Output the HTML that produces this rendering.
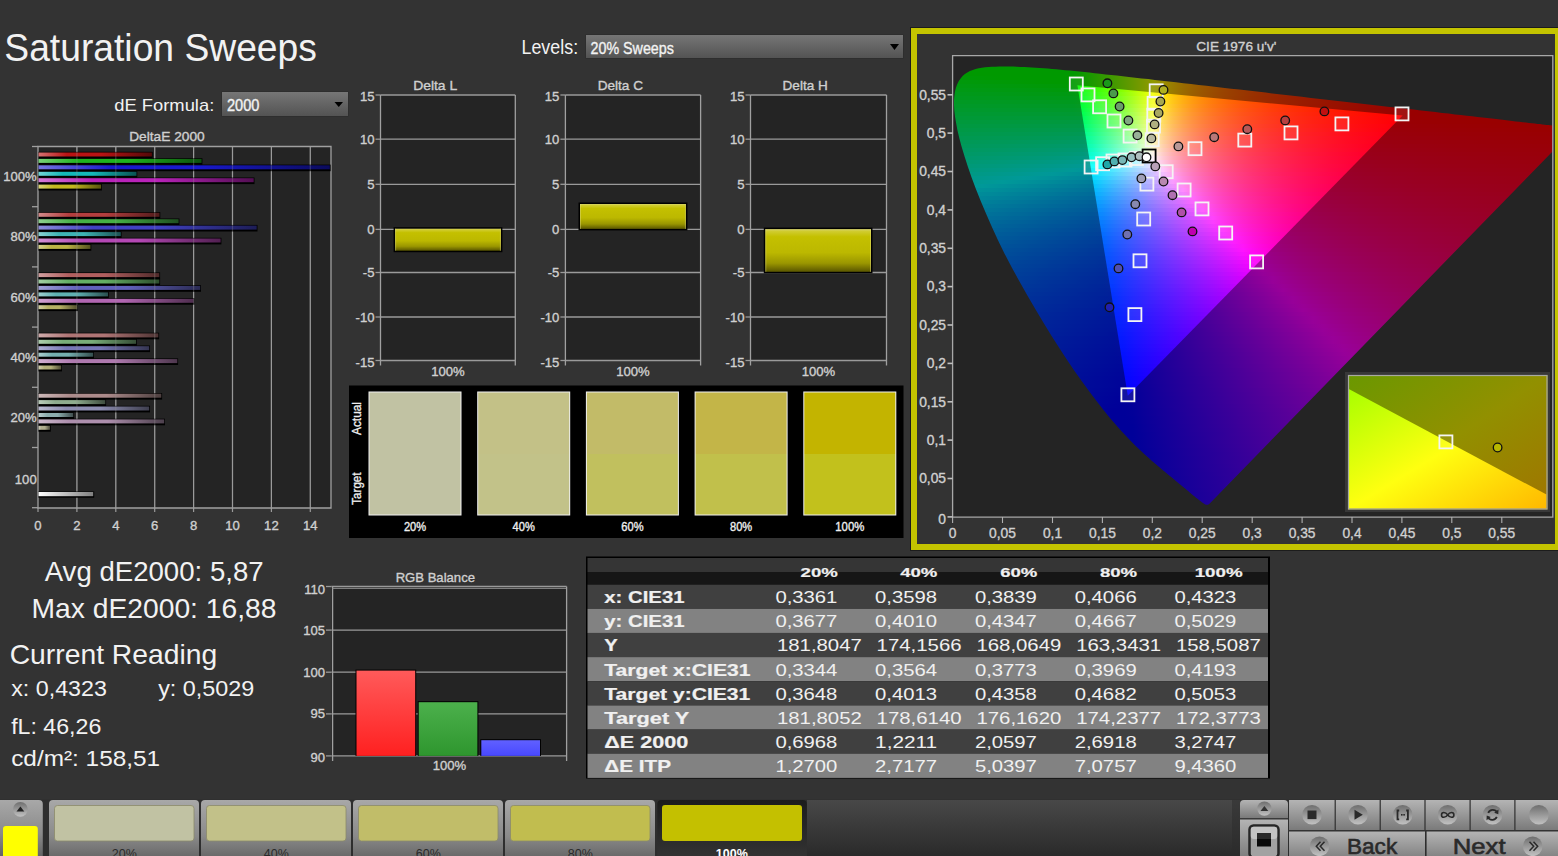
<!DOCTYPE html>
<html><head><meta charset="utf-8"><style>
html,body{margin:0;padding:0;background:#333333;width:1558px;height:856px;overflow:hidden}
svg{position:absolute;left:0;top:0}
text{font-family:"Liberation Sans", sans-serif}
.cie{position:absolute;left:953px;top:56px;width:600px;height:461px;overflow:hidden}
.cl{position:absolute;left:0;top:0;width:600px;height:461px}
.cl i{position:absolute;left:0;width:600px;display:block}
</style></head><body>
<svg width="1558" height="856" viewBox="0 0 1558 856"><defs><linearGradient id="dd" x1="0" y1="0" x2="0" y2="1"><stop offset="0" stop-color="#767676"/><stop offset="1" stop-color="#535353"/></linearGradient><linearGradient id="ybar" x1="0" y1="0" x2="0" y2="1"><stop offset="0" stop-color="#d8d470"/><stop offset="0.05" stop-color="#d0cc30"/><stop offset="0.18" stop-color="#c4c000"/><stop offset="0.55" stop-color="#bcb800"/><stop offset="0.8" stop-color="#9a9600"/><stop offset="1" stop-color="#5a5600"/></linearGradient><linearGradient id="bg0"><stop offset="0" stop-color="rgb(213,114,114)"/><stop offset="0.25" stop-color="rgb(185,20,20)"/><stop offset="0.55" stop-color="rgb(185,20,20)"/><stop offset="1" stop-color="rgb(83,9,9)"/></linearGradient><linearGradient id="bg1"><stop offset="0" stop-color="rgb(120,210,120)"/><stop offset="0.25" stop-color="rgb(30,180,30)"/><stop offset="0.55" stop-color="rgb(30,180,30)"/><stop offset="1" stop-color="rgb(13,81,13)"/></linearGradient><linearGradient id="bg2"><stop offset="0" stop-color="rgb(117,117,225)"/><stop offset="0.25" stop-color="rgb(25,25,205)"/><stop offset="0.55" stop-color="rgb(25,25,205)"/><stop offset="1" stop-color="rgb(11,11,92)"/></linearGradient><linearGradient id="bg3"><stop offset="0" stop-color="rgb(114,213,213)"/><stop offset="0.25" stop-color="rgb(20,185,185)"/><stop offset="0.55" stop-color="rgb(20,185,185)"/><stop offset="1" stop-color="rgb(9,83,83)"/></linearGradient><linearGradient id="bg4"><stop offset="0" stop-color="rgb(213,123,213)"/><stop offset="0.25" stop-color="rgb(185,35,185)"/><stop offset="0.55" stop-color="rgb(185,35,185)"/><stop offset="1" stop-color="rgb(83,15,83)"/></linearGradient><linearGradient id="bg5"><stop offset="0" stop-color="rgb(219,213,120)"/><stop offset="0.25" stop-color="rgb(195,185,30)"/><stop offset="0.55" stop-color="rgb(195,185,30)"/><stop offset="1" stop-color="rgb(87,83,13)"/></linearGradient><linearGradient id="bg6"><stop offset="0" stop-color="rgb(210,139,139)"/><stop offset="0.25" stop-color="rgb(180,62,62)"/><stop offset="0.55" stop-color="rgb(180,62,62)"/><stop offset="1" stop-color="rgb(81,27,27)"/></linearGradient><linearGradient id="bg7"><stop offset="0" stop-color="rgb(143,208,143)"/><stop offset="0.25" stop-color="rgb(69,177,69)"/><stop offset="0.55" stop-color="rgb(69,177,69)"/><stop offset="1" stop-color="rgb(31,79,31)"/></linearGradient><linearGradient id="bg8"><stop offset="0" stop-color="rgb(141,141,219)"/><stop offset="0.25" stop-color="rgb(65,65,195)"/><stop offset="0.55" stop-color="rgb(65,65,195)"/><stop offset="1" stop-color="rgb(29,29,87)"/></linearGradient><linearGradient id="bg9"><stop offset="0" stop-color="rgb(139,210,210)"/><stop offset="0.25" stop-color="rgb(62,180,180)"/><stop offset="0.55" stop-color="rgb(62,180,180)"/><stop offset="1" stop-color="rgb(27,81,81)"/></linearGradient><linearGradient id="bg10"><stop offset="0" stop-color="rgb(210,145,210)"/><stop offset="0.25" stop-color="rgb(180,72,180)"/><stop offset="0.55" stop-color="rgb(180,72,180)"/><stop offset="1" stop-color="rgb(81,32,81)"/></linearGradient><linearGradient id="bg11"><stop offset="0" stop-color="rgb(214,210,143)"/><stop offset="0.25" stop-color="rgb(188,180,69)"/><stop offset="0.55" stop-color="rgb(188,180,69)"/><stop offset="1" stop-color="rgb(84,81,31)"/></linearGradient><linearGradient id="bg12"><stop offset="0" stop-color="rgb(208,159,159)"/><stop offset="0.25" stop-color="rgb(177,95,95)"/><stop offset="0.55" stop-color="rgb(177,95,95)"/><stop offset="1" stop-color="rgb(79,42,42)"/></linearGradient><linearGradient id="bg13"><stop offset="0" stop-color="rgb(162,207,162)"/><stop offset="0.25" stop-color="rgb(100,175,100)"/><stop offset="0.55" stop-color="rgb(100,175,100)"/><stop offset="1" stop-color="rgb(45,78,45)"/></linearGradient><linearGradient id="bg14"><stop offset="0" stop-color="rgb(160,160,214)"/><stop offset="0.25" stop-color="rgb(97,97,187)"/><stop offset="0.55" stop-color="rgb(97,97,187)"/><stop offset="1" stop-color="rgb(43,43,84)"/></linearGradient><linearGradient id="bg15"><stop offset="0" stop-color="rgb(159,208,208)"/><stop offset="0.25" stop-color="rgb(95,177,177)"/><stop offset="0.55" stop-color="rgb(95,177,177)"/><stop offset="1" stop-color="rgb(42,79,79)"/></linearGradient><linearGradient id="bg16"><stop offset="0" stop-color="rgb(208,163,208)"/><stop offset="0.25" stop-color="rgb(177,102,177)"/><stop offset="0.55" stop-color="rgb(177,102,177)"/><stop offset="1" stop-color="rgb(79,46,79)"/></linearGradient><linearGradient id="bg17"><stop offset="0" stop-color="rgb(211,208,162)"/><stop offset="0.25" stop-color="rgb(182,177,100)"/><stop offset="0.55" stop-color="rgb(182,177,100)"/><stop offset="1" stop-color="rgb(82,79,45)"/></linearGradient><linearGradient id="bg18"><stop offset="0" stop-color="rgb(207,172,172)"/><stop offset="0.25" stop-color="rgb(175,117,117)"/><stop offset="0.55" stop-color="rgb(175,117,117)"/><stop offset="1" stop-color="rgb(78,52,52)"/></linearGradient><linearGradient id="bg19"><stop offset="0" stop-color="rgb(174,206,174)"/><stop offset="0.25" stop-color="rgb(121,173,121)"/><stop offset="0.55" stop-color="rgb(121,173,121)"/><stop offset="1" stop-color="rgb(54,78,54)"/></linearGradient><linearGradient id="bg20"><stop offset="0" stop-color="rgb(173,173,211)"/><stop offset="0.25" stop-color="rgb(119,119,182)"/><stop offset="0.55" stop-color="rgb(119,119,182)"/><stop offset="1" stop-color="rgb(53,53,82)"/></linearGradient><linearGradient id="bg21"><stop offset="0" stop-color="rgb(172,207,207)"/><stop offset="0.25" stop-color="rgb(117,175,175)"/><stop offset="0.55" stop-color="rgb(117,175,175)"/><stop offset="1" stop-color="rgb(52,78,78)"/></linearGradient><linearGradient id="bg22"><stop offset="0" stop-color="rgb(207,175,207)"/><stop offset="0.25" stop-color="rgb(175,122,175)"/><stop offset="0.55" stop-color="rgb(175,122,175)"/><stop offset="1" stop-color="rgb(78,55,78)"/></linearGradient><linearGradient id="bg23"><stop offset="0" stop-color="rgb(209,207,174)"/><stop offset="0.25" stop-color="rgb(178,175,121)"/><stop offset="0.55" stop-color="rgb(178,175,121)"/><stop offset="1" stop-color="rgb(80,78,54)"/></linearGradient><linearGradient id="bg24"><stop offset="0" stop-color="rgb(205,186,186)"/><stop offset="0.25" stop-color="rgb(173,140,140)"/><stop offset="0.55" stop-color="rgb(173,140,140)"/><stop offset="1" stop-color="rgb(77,63,63)"/></linearGradient><linearGradient id="bg25"><stop offset="0" stop-color="rgb(187,205,187)"/><stop offset="0.25" stop-color="rgb(142,172,142)"/><stop offset="0.55" stop-color="rgb(142,172,142)"/><stop offset="1" stop-color="rgb(63,77,63)"/></linearGradient><linearGradient id="bg26"><stop offset="0" stop-color="rgb(186,186,208)"/><stop offset="0.25" stop-color="rgb(141,141,177)"/><stop offset="0.55" stop-color="rgb(141,141,177)"/><stop offset="1" stop-color="rgb(63,63,79)"/></linearGradient><linearGradient id="bg27"><stop offset="0" stop-color="rgb(186,205,205)"/><stop offset="0.25" stop-color="rgb(140,173,173)"/><stop offset="0.55" stop-color="rgb(140,173,173)"/><stop offset="1" stop-color="rgb(63,77,77)"/></linearGradient><linearGradient id="bg28"><stop offset="0" stop-color="rgb(205,187,205)"/><stop offset="0.25" stop-color="rgb(173,143,173)"/><stop offset="0.55" stop-color="rgb(173,143,173)"/><stop offset="1" stop-color="rgb(77,64,77)"/></linearGradient><linearGradient id="bg29"><stop offset="0" stop-color="rgb(207,205,187)"/><stop offset="0.25" stop-color="rgb(175,173,142)"/><stop offset="0.55" stop-color="rgb(175,173,142)"/><stop offset="1" stop-color="rgb(78,77,63)"/></linearGradient><linearGradient id="wbar"><stop offset="0" stop-color="#ffffff"/><stop offset="1" stop-color="#808080"/></linearGradient><linearGradient id="rg" x1="0" y1="0" x2="0" y2="1"><stop offset="0" stop-color="#ff5a5a"/><stop offset="1" stop-color="#ff2020"/></linearGradient><linearGradient id="gg" x1="0" y1="0" x2="0" y2="1"><stop offset="0" stop-color="#4cb04c"/><stop offset="1" stop-color="#2e962e"/></linearGradient><linearGradient id="bbg" x1="0" y1="0" x2="0" y2="1"><stop offset="0" stop-color="#6060ff"/><stop offset="1" stop-color="#4848ff"/></linearGradient><linearGradient id="insIn" x1="0" y1="0" x2="1" y2="1"><stop offset="0" stop-color="#a8ff00"/><stop offset="0.5" stop-color="#ffff10"/><stop offset="1" stop-color="#ffb800"/></linearGradient><linearGradient id="insOut" x1="0" y1="0" x2="1" y2="1"><stop offset="0" stop-color="#6a9800"/><stop offset="0.5" stop-color="#929000"/><stop offset="1" stop-color="#a07400"/></linearGradient></defs>
<text x="4.3" y="61.0" font-size="39.7" fill="#f2f2f2" text-anchor="start" textLength="312.6" lengthAdjust="spacingAndGlyphs">Saturation Sweeps</text>
<text x="521.5" y="53.9" font-size="19.6" fill="#f2f2f2" text-anchor="start" textLength="56.6" lengthAdjust="spacingAndGlyphs">Levels:</text>
<rect x="585.5" y="34.5" width="318.0" height="24.0" fill="#2a2a2a"/>
<rect x="586.0" y="35.0" width="317.0" height="23.0" fill="url(#dd)"/>
<path d="M890 44 L899 44 L894.5 50 Z" fill="#000"/>
<text x="590.5" y="53.9" font-size="16.0" fill="#f2f2f2" text-anchor="start" textLength="83.4" lengthAdjust="spacingAndGlyphs" stroke="#f2f2f2" stroke-width="0.35">20% Sweeps</text>
<text x="114.2" y="110.9" font-size="17.0" fill="#f2f2f2" text-anchor="start" textLength="100.1" lengthAdjust="spacingAndGlyphs">dE Formula:</text>
<rect x="221.5" y="91.5" width="127.0" height="25.0" fill="#2a2a2a"/>
<rect x="222.0" y="92.0" width="126.0" height="24.0" fill="url(#dd)"/>
<path d="M334.5 102 L343 102 L338.75 107 Z" fill="#000"/>
<text x="226.9" y="110.9" font-size="15.8" fill="#f2f2f2" text-anchor="start" textLength="32.5" lengthAdjust="spacingAndGlyphs" stroke="#f2f2f2" stroke-width="0.35">2000</text>
<text x="129.2" y="140.9" font-size="13.4" fill="#d0d0d0" text-anchor="start" textLength="75.5" lengthAdjust="spacingAndGlyphs" stroke="#d0d0d0" stroke-width="0.35">DeltaE 2000</text>
<rect x="38.0" y="146.5" width="293.0" height="361.5" fill="#242424"/>
<line x1="38.0" y1="508.0" x2="38.0" y2="512.0" stroke="#9a9a9a" stroke-width="1.2"/>
<text x="38.0" y="530.0" font-size="13.1" fill="#d0d0d0" text-anchor="middle" stroke="#d0d0d0" stroke-width="0.35">0</text>
<line x1="76.9" y1="146.5" x2="76.9" y2="508.0" stroke="#9a9a9a" stroke-width="1.2"/>
<line x1="76.9" y1="508.0" x2="76.9" y2="512.0" stroke="#9a9a9a" stroke-width="1.2"/>
<text x="76.9" y="530.0" font-size="13.1" fill="#d0d0d0" text-anchor="middle" stroke="#d0d0d0" stroke-width="0.35">2</text>
<line x1="115.8" y1="146.5" x2="115.8" y2="508.0" stroke="#9a9a9a" stroke-width="1.2"/>
<line x1="115.8" y1="508.0" x2="115.8" y2="512.0" stroke="#9a9a9a" stroke-width="1.2"/>
<text x="115.8" y="530.0" font-size="13.1" fill="#d0d0d0" text-anchor="middle" stroke="#d0d0d0" stroke-width="0.35">4</text>
<line x1="154.7" y1="146.5" x2="154.7" y2="508.0" stroke="#9a9a9a" stroke-width="1.2"/>
<line x1="154.7" y1="508.0" x2="154.7" y2="512.0" stroke="#9a9a9a" stroke-width="1.2"/>
<text x="154.7" y="530.0" font-size="13.1" fill="#d0d0d0" text-anchor="middle" stroke="#d0d0d0" stroke-width="0.35">6</text>
<line x1="193.6" y1="146.5" x2="193.6" y2="508.0" stroke="#9a9a9a" stroke-width="1.2"/>
<line x1="193.6" y1="508.0" x2="193.6" y2="512.0" stroke="#9a9a9a" stroke-width="1.2"/>
<text x="193.6" y="530.0" font-size="13.1" fill="#d0d0d0" text-anchor="middle" stroke="#d0d0d0" stroke-width="0.35">8</text>
<line x1="232.5" y1="146.5" x2="232.5" y2="508.0" stroke="#9a9a9a" stroke-width="1.2"/>
<line x1="232.5" y1="508.0" x2="232.5" y2="512.0" stroke="#9a9a9a" stroke-width="1.2"/>
<text x="232.5" y="530.0" font-size="13.1" fill="#d0d0d0" text-anchor="middle" stroke="#d0d0d0" stroke-width="0.35">10</text>
<line x1="271.4" y1="146.5" x2="271.4" y2="508.0" stroke="#9a9a9a" stroke-width="1.2"/>
<line x1="271.4" y1="508.0" x2="271.4" y2="512.0" stroke="#9a9a9a" stroke-width="1.2"/>
<text x="271.4" y="530.0" font-size="13.1" fill="#d0d0d0" text-anchor="middle" stroke="#d0d0d0" stroke-width="0.35">12</text>
<line x1="310.3" y1="146.5" x2="310.3" y2="508.0" stroke="#9a9a9a" stroke-width="1.2"/>
<line x1="310.3" y1="508.0" x2="310.3" y2="512.0" stroke="#9a9a9a" stroke-width="1.2"/>
<text x="310.3" y="530.0" font-size="13.1" fill="#d0d0d0" text-anchor="middle" stroke="#d0d0d0" stroke-width="0.35">14</text>
<path d="M38 508 L38 146.5 L331 146.5 L331 508 Z" fill="none" stroke="#a0a0a0" stroke-width="1.3"/>
<line x1="32.0" y1="146.5" x2="38.0" y2="146.5" stroke="#a0a0a0" stroke-width="1.3"/>
<line x1="32.0" y1="206.7" x2="38.0" y2="206.7" stroke="#a0a0a0" stroke-width="1.3"/>
<line x1="32.0" y1="266.9" x2="38.0" y2="266.9" stroke="#a0a0a0" stroke-width="1.3"/>
<line x1="32.0" y1="327.1" x2="38.0" y2="327.1" stroke="#a0a0a0" stroke-width="1.3"/>
<line x1="32.0" y1="387.3" x2="38.0" y2="387.3" stroke="#a0a0a0" stroke-width="1.3"/>
<line x1="32.0" y1="447.5" x2="38.0" y2="447.5" stroke="#a0a0a0" stroke-width="1.3"/>
<line x1="32.0" y1="507.7" x2="38.0" y2="507.7" stroke="#a0a0a0" stroke-width="1.3"/>
<text x="36.7" y="181.0" font-size="13.1" fill="#d0d0d0" text-anchor="end" stroke="#d0d0d0" stroke-width="0.35">100%</text>
<rect x="38.5" y="151.8" width="114.2" height="6.6" fill="#000"/>
<rect x="38.5" y="152.5" width="113.4" height="4.0" fill="url(#bg0)"/>
<rect x="38.5" y="158.2" width="163.9" height="6.6" fill="#000"/>
<rect x="38.5" y="158.9" width="163.1" height="4.0" fill="url(#bg1)"/>
<rect x="38.5" y="164.6" width="292.1" height="6.6" fill="#000"/>
<rect x="38.5" y="165.3" width="291.3" height="4.0" fill="url(#bg2)"/>
<rect x="38.5" y="171.1" width="98.8" height="6.6" fill="#000"/>
<rect x="38.5" y="171.8" width="98.0" height="4.0" fill="url(#bg3)"/>
<rect x="38.5" y="177.5" width="216.0" height="6.6" fill="#000"/>
<rect x="38.5" y="178.2" width="215.2" height="4.0" fill="url(#bg4)"/>
<rect x="38.5" y="183.9" width="63.4" height="6.6" fill="#000"/>
<rect x="38.5" y="184.6" width="62.6" height="4.0" fill="url(#bg5)"/>
<text x="36.7" y="241.3" font-size="13.1" fill="#d0d0d0" text-anchor="end" stroke="#d0d0d0" stroke-width="0.35">80%</text>
<rect x="38.5" y="212.1" width="121.8" height="6.6" fill="#000"/>
<rect x="38.5" y="212.8" width="121.0" height="4.0" fill="url(#bg6)"/>
<rect x="38.5" y="218.5" width="140.9" height="6.6" fill="#000"/>
<rect x="38.5" y="219.2" width="140.1" height="4.0" fill="url(#bg7)"/>
<rect x="38.5" y="224.9" width="219.0" height="6.6" fill="#000"/>
<rect x="38.5" y="225.6" width="218.2" height="4.0" fill="url(#bg8)"/>
<rect x="38.5" y="231.4" width="83.1" height="6.6" fill="#000"/>
<rect x="38.5" y="232.1" width="82.3" height="4.0" fill="url(#bg9)"/>
<rect x="38.5" y="237.8" width="182.9" height="6.6" fill="#000"/>
<rect x="38.5" y="238.5" width="182.1" height="4.0" fill="url(#bg10)"/>
<rect x="38.5" y="244.2" width="52.8" height="6.6" fill="#000"/>
<rect x="38.5" y="244.9" width="52.0" height="4.0" fill="url(#bg11)"/>
<text x="36.7" y="301.6" font-size="13.1" fill="#d0d0d0" text-anchor="end" stroke="#d0d0d0" stroke-width="0.35">60%</text>
<rect x="38.5" y="272.4" width="121.6" height="6.6" fill="#000"/>
<rect x="38.5" y="273.1" width="120.8" height="4.0" fill="url(#bg12)"/>
<rect x="38.5" y="278.8" width="121.6" height="6.6" fill="#000"/>
<rect x="38.5" y="279.5" width="120.8" height="4.0" fill="url(#bg13)"/>
<rect x="38.5" y="285.2" width="162.5" height="6.6" fill="#000"/>
<rect x="38.5" y="285.9" width="161.7" height="4.0" fill="url(#bg14)"/>
<rect x="38.5" y="291.7" width="70.3" height="6.6" fill="#000"/>
<rect x="38.5" y="292.4" width="69.5" height="4.0" fill="url(#bg15)"/>
<rect x="38.5" y="298.1" width="156.0" height="6.6" fill="#000"/>
<rect x="38.5" y="298.8" width="155.2" height="4.0" fill="url(#bg16)"/>
<rect x="38.5" y="304.5" width="39.5" height="6.6" fill="#000"/>
<rect x="38.5" y="305.2" width="38.7" height="4.0" fill="url(#bg17)"/>
<text x="36.7" y="361.9" font-size="13.1" fill="#d0d0d0" text-anchor="end" stroke="#d0d0d0" stroke-width="0.35">40%</text>
<rect x="38.5" y="332.7" width="120.6" height="6.6" fill="#000"/>
<rect x="38.5" y="333.4" width="119.8" height="4.0" fill="url(#bg18)"/>
<rect x="38.5" y="339.1" width="98.4" height="6.6" fill="#000"/>
<rect x="38.5" y="339.8" width="97.6" height="4.0" fill="url(#bg19)"/>
<rect x="38.5" y="345.5" width="111.5" height="6.6" fill="#000"/>
<rect x="38.5" y="346.2" width="110.7" height="4.0" fill="url(#bg20)"/>
<rect x="38.5" y="352.0" width="55.5" height="6.6" fill="#000"/>
<rect x="38.5" y="352.7" width="54.7" height="4.0" fill="url(#bg21)"/>
<rect x="38.5" y="358.4" width="139.6" height="6.6" fill="#000"/>
<rect x="38.5" y="359.1" width="138.8" height="4.0" fill="url(#bg22)"/>
<rect x="38.5" y="364.8" width="23.5" height="6.6" fill="#000"/>
<rect x="38.5" y="365.5" width="22.7" height="4.0" fill="url(#bg23)"/>
<text x="36.7" y="422.2" font-size="13.1" fill="#d0d0d0" text-anchor="end" stroke="#d0d0d0" stroke-width="0.35">20%</text>
<rect x="38.5" y="393.0" width="123.6" height="6.6" fill="#000"/>
<rect x="38.5" y="393.7" width="122.8" height="4.0" fill="url(#bg24)"/>
<rect x="38.5" y="399.4" width="67.6" height="6.6" fill="#000"/>
<rect x="38.5" y="400.1" width="66.8" height="4.0" fill="url(#bg25)"/>
<rect x="38.5" y="405.8" width="111.5" height="6.6" fill="#000"/>
<rect x="38.5" y="406.5" width="110.7" height="4.0" fill="url(#bg26)"/>
<rect x="38.5" y="412.3" width="35.6" height="6.6" fill="#000"/>
<rect x="38.5" y="413.0" width="34.8" height="4.0" fill="url(#bg27)"/>
<rect x="38.5" y="418.7" width="126.5" height="6.6" fill="#000"/>
<rect x="38.5" y="419.4" width="125.7" height="4.0" fill="url(#bg28)"/>
<rect x="38.5" y="425.1" width="12.3" height="6.6" fill="#000"/>
<rect x="38.5" y="425.8" width="11.5" height="4.0" fill="url(#bg29)"/>
<line x1="76.9" y1="146.5" x2="76.9" y2="508" stroke="#9a9a9a" stroke-width="1.2" opacity="0.3"/>
<line x1="115.8" y1="146.5" x2="115.8" y2="508" stroke="#9a9a9a" stroke-width="1.2" opacity="0.3"/>
<line x1="154.7" y1="146.5" x2="154.7" y2="508" stroke="#9a9a9a" stroke-width="1.2" opacity="0.3"/>
<line x1="193.6" y1="146.5" x2="193.6" y2="508" stroke="#9a9a9a" stroke-width="1.2" opacity="0.3"/>
<line x1="232.5" y1="146.5" x2="232.5" y2="508" stroke="#9a9a9a" stroke-width="1.2" opacity="0.3"/>
<line x1="271.4" y1="146.5" x2="271.4" y2="508" stroke="#9a9a9a" stroke-width="1.2" opacity="0.3"/>
<line x1="310.3" y1="146.5" x2="310.3" y2="508" stroke="#9a9a9a" stroke-width="1.2" opacity="0.3"/>
<text x="36.7" y="484.0" font-size="13.1" fill="#d0d0d0" text-anchor="end" stroke="#d0d0d0" stroke-width="0.35">100</text>
<rect x="38.5" y="491.5" width="55.7" height="6.2" fill="#000"/>
<rect x="38.5" y="492.0" width="54.7" height="4.2" fill="url(#wbar)"/>
<rect x="380.5" y="95.0" width="134.8" height="265.5" fill="#242424"/>
<line x1="380.5" y1="95.0" x2="515.3" y2="95.0" stroke="#9a9a9a" stroke-width="1.3"/>
<line x1="375.5" y1="95.0" x2="380.5" y2="95.0" stroke="#9a9a9a" stroke-width="1.3"/>
<text x="374.5" y="100.8" font-size="13.1" fill="#d0d0d0" text-anchor="end" stroke="#d0d0d0" stroke-width="0.35">15</text>
<line x1="380.5" y1="139.2" x2="515.3" y2="139.2" stroke="#9a9a9a" stroke-width="1.3"/>
<line x1="375.5" y1="139.2" x2="380.5" y2="139.2" stroke="#9a9a9a" stroke-width="1.3"/>
<text x="374.5" y="143.8" font-size="13.1" fill="#d0d0d0" text-anchor="end" stroke="#d0d0d0" stroke-width="0.35">10</text>
<line x1="380.5" y1="184.3" x2="515.3" y2="184.3" stroke="#9a9a9a" stroke-width="1.3"/>
<line x1="375.5" y1="184.3" x2="380.5" y2="184.3" stroke="#9a9a9a" stroke-width="1.3"/>
<text x="374.5" y="188.9" font-size="13.1" fill="#d0d0d0" text-anchor="end" stroke="#d0d0d0" stroke-width="0.35">5</text>
<line x1="380.5" y1="229.4" x2="515.3" y2="229.4" stroke="#9a9a9a" stroke-width="1.3"/>
<line x1="375.5" y1="229.4" x2="380.5" y2="229.4" stroke="#9a9a9a" stroke-width="1.3"/>
<text x="374.5" y="234.0" font-size="13.1" fill="#d0d0d0" text-anchor="end" stroke="#d0d0d0" stroke-width="0.35">0</text>
<line x1="380.5" y1="272.5" x2="515.3" y2="272.5" stroke="#9a9a9a" stroke-width="1.3"/>
<line x1="375.5" y1="272.5" x2="380.5" y2="272.5" stroke="#9a9a9a" stroke-width="1.3"/>
<text x="374.5" y="277.1" font-size="13.1" fill="#d0d0d0" text-anchor="end" stroke="#d0d0d0" stroke-width="0.35">-5</text>
<line x1="380.5" y1="317.0" x2="515.3" y2="317.0" stroke="#9a9a9a" stroke-width="1.3"/>
<line x1="375.5" y1="317.0" x2="380.5" y2="317.0" stroke="#9a9a9a" stroke-width="1.3"/>
<text x="374.5" y="321.6" font-size="13.1" fill="#d0d0d0" text-anchor="end" stroke="#d0d0d0" stroke-width="0.35">-10</text>
<line x1="380.5" y1="360.5" x2="515.3" y2="360.5" stroke="#9a9a9a" stroke-width="1.3"/>
<line x1="375.5" y1="360.5" x2="380.5" y2="360.5" stroke="#9a9a9a" stroke-width="1.3"/>
<text x="374.5" y="367.1" font-size="13.1" fill="#d0d0d0" text-anchor="end" stroke="#d0d0d0" stroke-width="0.35">-15</text>
<line x1="380.5" y1="95.0" x2="380.5" y2="365.5" stroke="#a0a0a0" stroke-width="1.3"/>
<line x1="515.3" y1="95.0" x2="515.3" y2="365.5" stroke="#a0a0a0" stroke-width="1.3"/>
<rect x="393.6" y="227.2" width="108.8" height="25.0" fill="#000"/>
<rect x="395.1" y="228.7" width="105.8" height="22.0" fill="url(#ybar)"/>
<rect x="395.1" y="228.7" width="1.0" height="22.0" fill="#e0dc80" opacity="0.45"/>
<rect x="499.9" y="228.7" width="1.0" height="22.0" fill="#e0dc80" opacity="0.45"/>
<text x="413.2" y="90.1" font-size="13.1" fill="#d0d0d0" text-anchor="start" textLength="44.0" lengthAdjust="spacingAndGlyphs" stroke="#d0d0d0" stroke-width="0.35">Delta L</text>
<text x="447.9" y="375.5" font-size="13.1" fill="#d0d0d0" text-anchor="middle" stroke="#d0d0d0" stroke-width="0.35">100%</text>
<rect x="565.4" y="95.0" width="135.2" height="265.5" fill="#242424"/>
<line x1="565.4" y1="95.0" x2="700.6" y2="95.0" stroke="#9a9a9a" stroke-width="1.3"/>
<line x1="560.4" y1="95.0" x2="565.4" y2="95.0" stroke="#9a9a9a" stroke-width="1.3"/>
<text x="559.4" y="100.8" font-size="13.1" fill="#d0d0d0" text-anchor="end" stroke="#d0d0d0" stroke-width="0.35">15</text>
<line x1="565.4" y1="139.2" x2="700.6" y2="139.2" stroke="#9a9a9a" stroke-width="1.3"/>
<line x1="560.4" y1="139.2" x2="565.4" y2="139.2" stroke="#9a9a9a" stroke-width="1.3"/>
<text x="559.4" y="143.8" font-size="13.1" fill="#d0d0d0" text-anchor="end" stroke="#d0d0d0" stroke-width="0.35">10</text>
<line x1="565.4" y1="184.3" x2="700.6" y2="184.3" stroke="#9a9a9a" stroke-width="1.3"/>
<line x1="560.4" y1="184.3" x2="565.4" y2="184.3" stroke="#9a9a9a" stroke-width="1.3"/>
<text x="559.4" y="188.9" font-size="13.1" fill="#d0d0d0" text-anchor="end" stroke="#d0d0d0" stroke-width="0.35">5</text>
<line x1="565.4" y1="229.4" x2="700.6" y2="229.4" stroke="#9a9a9a" stroke-width="1.3"/>
<line x1="560.4" y1="229.4" x2="565.4" y2="229.4" stroke="#9a9a9a" stroke-width="1.3"/>
<text x="559.4" y="234.0" font-size="13.1" fill="#d0d0d0" text-anchor="end" stroke="#d0d0d0" stroke-width="0.35">0</text>
<line x1="565.4" y1="272.5" x2="700.6" y2="272.5" stroke="#9a9a9a" stroke-width="1.3"/>
<line x1="560.4" y1="272.5" x2="565.4" y2="272.5" stroke="#9a9a9a" stroke-width="1.3"/>
<text x="559.4" y="277.1" font-size="13.1" fill="#d0d0d0" text-anchor="end" stroke="#d0d0d0" stroke-width="0.35">-5</text>
<line x1="565.4" y1="317.0" x2="700.6" y2="317.0" stroke="#9a9a9a" stroke-width="1.3"/>
<line x1="560.4" y1="317.0" x2="565.4" y2="317.0" stroke="#9a9a9a" stroke-width="1.3"/>
<text x="559.4" y="321.6" font-size="13.1" fill="#d0d0d0" text-anchor="end" stroke="#d0d0d0" stroke-width="0.35">-10</text>
<line x1="565.4" y1="360.5" x2="700.6" y2="360.5" stroke="#9a9a9a" stroke-width="1.3"/>
<line x1="560.4" y1="360.5" x2="565.4" y2="360.5" stroke="#9a9a9a" stroke-width="1.3"/>
<text x="559.4" y="367.1" font-size="13.1" fill="#d0d0d0" text-anchor="end" stroke="#d0d0d0" stroke-width="0.35">-15</text>
<line x1="565.4" y1="95.0" x2="565.4" y2="365.5" stroke="#a0a0a0" stroke-width="1.3"/>
<line x1="700.6" y1="95.0" x2="700.6" y2="365.5" stroke="#a0a0a0" stroke-width="1.3"/>
<rect x="578.5" y="202.5" width="108.9" height="27.9" fill="#000"/>
<rect x="580.0" y="204.0" width="105.9" height="24.9" fill="url(#ybar)"/>
<rect x="580.0" y="204.0" width="1.0" height="24.9" fill="#e0dc80" opacity="0.45"/>
<rect x="684.9" y="204.0" width="1.0" height="24.9" fill="#e0dc80" opacity="0.45"/>
<text x="597.7" y="90.1" font-size="13.1" fill="#d0d0d0" text-anchor="start" textLength="45.3" lengthAdjust="spacingAndGlyphs" stroke="#d0d0d0" stroke-width="0.35">Delta C</text>
<text x="633.0" y="375.5" font-size="13.1" fill="#d0d0d0" text-anchor="middle" stroke="#d0d0d0" stroke-width="0.35">100%</text>
<rect x="750.5" y="95.0" width="136.0" height="265.5" fill="#242424"/>
<line x1="750.5" y1="95.0" x2="886.5" y2="95.0" stroke="#9a9a9a" stroke-width="1.3"/>
<line x1="745.5" y1="95.0" x2="750.5" y2="95.0" stroke="#9a9a9a" stroke-width="1.3"/>
<text x="744.5" y="100.8" font-size="13.1" fill="#d0d0d0" text-anchor="end" stroke="#d0d0d0" stroke-width="0.35">15</text>
<line x1="750.5" y1="139.2" x2="886.5" y2="139.2" stroke="#9a9a9a" stroke-width="1.3"/>
<line x1="745.5" y1="139.2" x2="750.5" y2="139.2" stroke="#9a9a9a" stroke-width="1.3"/>
<text x="744.5" y="143.8" font-size="13.1" fill="#d0d0d0" text-anchor="end" stroke="#d0d0d0" stroke-width="0.35">10</text>
<line x1="750.5" y1="184.3" x2="886.5" y2="184.3" stroke="#9a9a9a" stroke-width="1.3"/>
<line x1="745.5" y1="184.3" x2="750.5" y2="184.3" stroke="#9a9a9a" stroke-width="1.3"/>
<text x="744.5" y="188.9" font-size="13.1" fill="#d0d0d0" text-anchor="end" stroke="#d0d0d0" stroke-width="0.35">5</text>
<line x1="750.5" y1="229.4" x2="886.5" y2="229.4" stroke="#9a9a9a" stroke-width="1.3"/>
<line x1="745.5" y1="229.4" x2="750.5" y2="229.4" stroke="#9a9a9a" stroke-width="1.3"/>
<text x="744.5" y="234.0" font-size="13.1" fill="#d0d0d0" text-anchor="end" stroke="#d0d0d0" stroke-width="0.35">0</text>
<line x1="750.5" y1="272.5" x2="886.5" y2="272.5" stroke="#9a9a9a" stroke-width="1.3"/>
<line x1="745.5" y1="272.5" x2="750.5" y2="272.5" stroke="#9a9a9a" stroke-width="1.3"/>
<text x="744.5" y="277.1" font-size="13.1" fill="#d0d0d0" text-anchor="end" stroke="#d0d0d0" stroke-width="0.35">-5</text>
<line x1="750.5" y1="317.0" x2="886.5" y2="317.0" stroke="#9a9a9a" stroke-width="1.3"/>
<line x1="745.5" y1="317.0" x2="750.5" y2="317.0" stroke="#9a9a9a" stroke-width="1.3"/>
<text x="744.5" y="321.6" font-size="13.1" fill="#d0d0d0" text-anchor="end" stroke="#d0d0d0" stroke-width="0.35">-10</text>
<line x1="750.5" y1="360.5" x2="886.5" y2="360.5" stroke="#9a9a9a" stroke-width="1.3"/>
<line x1="745.5" y1="360.5" x2="750.5" y2="360.5" stroke="#9a9a9a" stroke-width="1.3"/>
<text x="744.5" y="367.1" font-size="13.1" fill="#d0d0d0" text-anchor="end" stroke="#d0d0d0" stroke-width="0.35">-15</text>
<line x1="750.5" y1="95.0" x2="750.5" y2="365.5" stroke="#a0a0a0" stroke-width="1.3"/>
<line x1="886.5" y1="95.0" x2="886.5" y2="365.5" stroke="#a0a0a0" stroke-width="1.3"/>
<rect x="763.8" y="227.6" width="108.7" height="45.7" fill="#000"/>
<rect x="765.3" y="229.1" width="105.7" height="42.7" fill="url(#ybar)"/>
<rect x="765.3" y="229.1" width="1.0" height="42.7" fill="#e0dc80" opacity="0.45"/>
<rect x="870.0" y="229.1" width="1.0" height="42.7" fill="#e0dc80" opacity="0.45"/>
<text x="782.6" y="90.1" font-size="13.1" fill="#d0d0d0" text-anchor="start" textLength="45.1" lengthAdjust="spacingAndGlyphs" stroke="#d0d0d0" stroke-width="0.35">Delta H</text>
<text x="818.5" y="375.5" font-size="13.1" fill="#d0d0d0" text-anchor="middle" stroke="#d0d0d0" stroke-width="0.35">100%</text>
<rect x="349.0" y="385.5" width="554.5" height="152.5" fill="#000"/>
<rect x="368.5" y="391.5" width="93.0" height="124.0" fill="#f0f0f0"/>
<rect x="369.5" y="392.5" width="91.0" height="61.5" fill="#c1c2a3"/>
<rect x="369.5" y="454.0" width="91.0" height="60.5" fill="#c1c2a3"/>
<text x="415.0" y="530.5" font-size="12.4" fill="#f0f0f0" text-anchor="middle" textLength="22.2" lengthAdjust="spacingAndGlyphs" stroke="#f0f0f0" stroke-width="0.35">20%</text>
<rect x="477.2" y="391.5" width="93.0" height="124.0" fill="#f0f0f0"/>
<rect x="478.2" y="392.5" width="91.0" height="61.5" fill="#c3c187"/>
<rect x="478.2" y="454.0" width="91.0" height="60.5" fill="#c2c289"/>
<text x="523.7" y="530.5" font-size="12.4" fill="#f0f0f0" text-anchor="middle" textLength="22.2" lengthAdjust="spacingAndGlyphs" stroke="#f0f0f0" stroke-width="0.35">40%</text>
<rect x="585.9" y="391.5" width="93.0" height="124.0" fill="#f0f0f0"/>
<rect x="586.9" y="392.5" width="91.0" height="61.5" fill="#c2bb68"/>
<rect x="586.9" y="454.0" width="91.0" height="60.5" fill="#c1c05e"/>
<text x="632.4" y="530.5" font-size="12.4" fill="#f0f0f0" text-anchor="middle" textLength="22.2" lengthAdjust="spacingAndGlyphs" stroke="#f0f0f0" stroke-width="0.35">60%</text>
<rect x="694.6" y="391.5" width="93.0" height="124.0" fill="#f0f0f0"/>
<rect x="695.6" y="392.5" width="91.0" height="61.5" fill="#c3b548"/>
<rect x="695.6" y="454.0" width="91.0" height="60.5" fill="#c1c04b"/>
<text x="741.1" y="530.5" font-size="12.4" fill="#f0f0f0" text-anchor="middle" textLength="22.2" lengthAdjust="spacingAndGlyphs" stroke="#f0f0f0" stroke-width="0.35">80%</text>
<rect x="803.3" y="391.5" width="93.0" height="124.0" fill="#f0f0f0"/>
<rect x="804.3" y="392.5" width="91.0" height="61.5" fill="#c3b400"/>
<rect x="804.3" y="454.0" width="91.0" height="60.5" fill="#c2c11c"/>
<text x="849.8" y="530.5" font-size="12.4" fill="#f0f0f0" text-anchor="middle" textLength="29.0" lengthAdjust="spacingAndGlyphs" stroke="#f0f0f0" stroke-width="0.35">100%</text>
<text transform="translate(361,418.5) rotate(-90)" font-size="12.4" fill="#f0f0f0" stroke="#f0f0f0" stroke-width="0.3" text-anchor="middle" textLength="33" lengthAdjust="spacingAndGlyphs">Actual</text>
<text transform="translate(361,488.6) rotate(-90)" font-size="12.4" fill="#f0f0f0" stroke="#f0f0f0" stroke-width="0.3" text-anchor="middle" textLength="32.2" lengthAdjust="spacingAndGlyphs">Target</text>
<text x="44.7" y="581.0" font-size="27.2" fill="#f2f2f2" text-anchor="start" textLength="218.9" lengthAdjust="spacingAndGlyphs">Avg dE2000: 5,87</text>
<text x="31.5" y="618.2" font-size="27.2" fill="#f2f2f2" text-anchor="start" textLength="245.0" lengthAdjust="spacingAndGlyphs">Max dE2000: 16,88</text>
<text x="9.7" y="663.6" font-size="26.9" fill="#f2f2f2" text-anchor="start" textLength="207.5" lengthAdjust="spacingAndGlyphs">Current Reading</text>
<text x="11.2" y="696.4" font-size="22.7" fill="#f2f2f2" text-anchor="start" textLength="95.7" lengthAdjust="spacingAndGlyphs">x: 0,4323</text>
<text x="158.2" y="696.4" font-size="22.7" fill="#f2f2f2" text-anchor="start" textLength="96.1" lengthAdjust="spacingAndGlyphs">y: 0,5029</text>
<text x="11.2" y="734.3" font-size="22.7" fill="#f2f2f2" text-anchor="start" textLength="90.1" lengthAdjust="spacingAndGlyphs">fL: 46,26</text>
<text x="11.2" y="766.4" font-size="22.7" fill="#f2f2f2" text-anchor="start" textLength="148.9" lengthAdjust="spacingAndGlyphs">cd/m²: 158,51</text>
<text x="435.3" y="582.0" font-size="13.1" fill="#d0d0d0" text-anchor="middle" stroke="#d0d0d0" stroke-width="0.35">RGB Balance</text>
<rect x="331.4" y="586.5" width="235.2" height="169.4" fill="#242424"/>
<line x1="331.4" y1="586.5" x2="566.6" y2="586.5" stroke="#9a9a9a" stroke-width="1.3"/>
<line x1="326.0" y1="586.5" x2="331.4" y2="586.5" stroke="#9a9a9a" stroke-width="1.3"/>
<text x="325.0" y="593.5" font-size="13.1" fill="#d0d0d0" text-anchor="end" stroke="#d0d0d0" stroke-width="0.35">110</text>
<line x1="331.4" y1="630.1" x2="566.6" y2="630.1" stroke="#9a9a9a" stroke-width="1.3"/>
<line x1="326.0" y1="630.1" x2="331.4" y2="630.1" stroke="#9a9a9a" stroke-width="1.3"/>
<text x="325.0" y="634.6" font-size="13.1" fill="#d0d0d0" text-anchor="end" stroke="#d0d0d0" stroke-width="0.35">105</text>
<line x1="331.4" y1="672.2" x2="566.6" y2="672.2" stroke="#9a9a9a" stroke-width="1.3"/>
<line x1="326.0" y1="672.2" x2="331.4" y2="672.2" stroke="#9a9a9a" stroke-width="1.3"/>
<text x="325.0" y="676.7" font-size="13.1" fill="#d0d0d0" text-anchor="end" stroke="#d0d0d0" stroke-width="0.35">100</text>
<line x1="331.4" y1="713.9" x2="566.6" y2="713.9" stroke="#9a9a9a" stroke-width="1.3"/>
<line x1="326.0" y1="713.9" x2="331.4" y2="713.9" stroke="#9a9a9a" stroke-width="1.3"/>
<text x="325.0" y="718.4" font-size="13.1" fill="#d0d0d0" text-anchor="end" stroke="#d0d0d0" stroke-width="0.35">95</text>
<line x1="331.4" y1="755.9" x2="566.6" y2="755.9" stroke="#9a9a9a" stroke-width="1.3"/>
<line x1="326.0" y1="755.9" x2="331.4" y2="755.9" stroke="#9a9a9a" stroke-width="1.3"/>
<text x="325.0" y="762.4" font-size="13.1" fill="#d0d0d0" text-anchor="end" stroke="#d0d0d0" stroke-width="0.35">90</text>
<line x1="332.6" y1="586.5" x2="332.6" y2="761.0" stroke="#a0a0a0" stroke-width="1.3"/>
<line x1="332.6" y1="588.4" x2="566.6" y2="588.4" stroke="#8a8a8a" stroke-width="1.0"/>
<line x1="566.6" y1="586.5" x2="566.6" y2="761.0" stroke="#a0a0a0" stroke-width="1.3"/>
<rect x="355.5" y="669.6" width="60.7" height="86.3" fill="#000"/>
<rect x="356.5" y="670.6" width="58.7" height="85.3" fill="url(#rg)"/>
<rect x="417.7" y="701.2" width="60.7" height="54.7" fill="#000"/>
<rect x="418.7" y="702.2" width="58.7" height="53.7" fill="url(#gg)"/>
<rect x="480.3" y="739.2" width="60.7" height="16.7" fill="#000"/>
<rect x="481.3" y="740.2" width="58.7" height="15.7" fill="url(#bbg)"/>
<text x="449.4" y="769.5" font-size="13.1" fill="#d0d0d0" text-anchor="middle" stroke="#d0d0d0" stroke-width="0.35">100%</text>
<rect x="586.0" y="556.5" width="684.0" height="222.0" fill="#000"/>
<rect x="587.5" y="558.0" width="680.5" height="14.0" fill="#353535"/>
<rect x="587.5" y="572.0" width="680.5" height="12.6" fill="#161616"/>
<rect x="587.5" y="584.6" width="680.5" height="24.2" fill="#404040"/>
<text x="604.3" y="603.1" font-size="15.7" fill="#f0f0f0" text-anchor="start" font-weight="bold" textLength="80.2" lengthAdjust="spacingAndGlyphs" stroke="#f0f0f0" stroke-width="0.2">x: CIE31</text>
<text x="775.4" y="603.1" font-size="16.1" fill="#f0f0f0" text-anchor="start" textLength="62.0" lengthAdjust="spacingAndGlyphs">0,3361</text>
<text x="875.1" y="603.1" font-size="16.1" fill="#f0f0f0" text-anchor="start" textLength="62.0" lengthAdjust="spacingAndGlyphs">0,3598</text>
<text x="974.9" y="603.1" font-size="16.1" fill="#f0f0f0" text-anchor="start" textLength="62.0" lengthAdjust="spacingAndGlyphs">0,3839</text>
<text x="1074.7" y="603.1" font-size="16.1" fill="#f0f0f0" text-anchor="start" textLength="62.0" lengthAdjust="spacingAndGlyphs">0,4066</text>
<text x="1174.4" y="603.1" font-size="16.1" fill="#f0f0f0" text-anchor="start" textLength="62.0" lengthAdjust="spacingAndGlyphs">0,4323</text>
<rect x="587.5" y="608.8" width="680.5" height="24.2" fill="#828282"/>
<text x="604.3" y="627.3" font-size="15.7" fill="#f0f0f0" text-anchor="start" font-weight="bold" textLength="80.2" lengthAdjust="spacingAndGlyphs" stroke="#f0f0f0" stroke-width="0.2">y: CIE31</text>
<text x="775.4" y="627.3" font-size="16.1" fill="#f0f0f0" text-anchor="start" textLength="62.0" lengthAdjust="spacingAndGlyphs">0,3677</text>
<text x="875.1" y="627.3" font-size="16.1" fill="#f0f0f0" text-anchor="start" textLength="62.0" lengthAdjust="spacingAndGlyphs">0,4010</text>
<text x="974.9" y="627.3" font-size="16.1" fill="#f0f0f0" text-anchor="start" textLength="62.0" lengthAdjust="spacingAndGlyphs">0,4347</text>
<text x="1074.7" y="627.3" font-size="16.1" fill="#f0f0f0" text-anchor="start" textLength="62.0" lengthAdjust="spacingAndGlyphs">0,4667</text>
<text x="1174.4" y="627.3" font-size="16.1" fill="#f0f0f0" text-anchor="start" textLength="62.0" lengthAdjust="spacingAndGlyphs">0,5029</text>
<rect x="587.5" y="632.9" width="680.5" height="24.2" fill="#404040"/>
<text x="604.3" y="651.4" font-size="15.7" fill="#f0f0f0" text-anchor="start" font-weight="bold" textLength="13.5" lengthAdjust="spacingAndGlyphs" stroke="#f0f0f0" stroke-width="0.2">Y</text>
<text x="776.9" y="651.4" font-size="16.1" fill="#f0f0f0" text-anchor="start" textLength="85.0" lengthAdjust="spacingAndGlyphs">181,8047</text>
<text x="876.6" y="651.4" font-size="16.1" fill="#f0f0f0" text-anchor="start" textLength="85.0" lengthAdjust="spacingAndGlyphs">174,1566</text>
<text x="976.4" y="651.4" font-size="16.1" fill="#f0f0f0" text-anchor="start" textLength="85.0" lengthAdjust="spacingAndGlyphs">168,0649</text>
<text x="1076.2" y="651.4" font-size="16.1" fill="#f0f0f0" text-anchor="start" textLength="85.0" lengthAdjust="spacingAndGlyphs">163,3431</text>
<text x="1175.9" y="651.4" font-size="16.1" fill="#f0f0f0" text-anchor="start" textLength="85.0" lengthAdjust="spacingAndGlyphs">158,5087</text>
<rect x="587.5" y="657.1" width="680.5" height="24.2" fill="#828282"/>
<text x="604.3" y="675.6" font-size="15.7" fill="#f0f0f0" text-anchor="start" font-weight="bold" textLength="146.2" lengthAdjust="spacingAndGlyphs" stroke="#f0f0f0" stroke-width="0.2">Target x:CIE31</text>
<text x="775.4" y="675.6" font-size="16.1" fill="#f0f0f0" text-anchor="start" textLength="62.0" lengthAdjust="spacingAndGlyphs">0,3344</text>
<text x="875.1" y="675.6" font-size="16.1" fill="#f0f0f0" text-anchor="start" textLength="62.0" lengthAdjust="spacingAndGlyphs">0,3564</text>
<text x="974.9" y="675.6" font-size="16.1" fill="#f0f0f0" text-anchor="start" textLength="62.0" lengthAdjust="spacingAndGlyphs">0,3773</text>
<text x="1074.7" y="675.6" font-size="16.1" fill="#f0f0f0" text-anchor="start" textLength="62.0" lengthAdjust="spacingAndGlyphs">0,3969</text>
<text x="1174.4" y="675.6" font-size="16.1" fill="#f0f0f0" text-anchor="start" textLength="62.0" lengthAdjust="spacingAndGlyphs">0,4193</text>
<rect x="587.5" y="681.2" width="680.5" height="24.2" fill="#404040"/>
<text x="604.3" y="699.7" font-size="15.7" fill="#f0f0f0" text-anchor="start" font-weight="bold" textLength="146.0" lengthAdjust="spacingAndGlyphs" stroke="#f0f0f0" stroke-width="0.2">Target y:CIE31</text>
<text x="775.4" y="699.7" font-size="16.1" fill="#f0f0f0" text-anchor="start" textLength="62.0" lengthAdjust="spacingAndGlyphs">0,3648</text>
<text x="875.1" y="699.7" font-size="16.1" fill="#f0f0f0" text-anchor="start" textLength="62.0" lengthAdjust="spacingAndGlyphs">0,4013</text>
<text x="974.9" y="699.7" font-size="16.1" fill="#f0f0f0" text-anchor="start" textLength="62.0" lengthAdjust="spacingAndGlyphs">0,4358</text>
<text x="1074.7" y="699.7" font-size="16.1" fill="#f0f0f0" text-anchor="start" textLength="62.0" lengthAdjust="spacingAndGlyphs">0,4682</text>
<text x="1174.4" y="699.7" font-size="16.1" fill="#f0f0f0" text-anchor="start" textLength="62.0" lengthAdjust="spacingAndGlyphs">0,5053</text>
<rect x="587.5" y="705.4" width="680.5" height="24.2" fill="#828282"/>
<text x="604.3" y="723.9" font-size="15.7" fill="#f0f0f0" text-anchor="start" font-weight="bold" textLength="85.0" lengthAdjust="spacingAndGlyphs" stroke="#f0f0f0" stroke-width="0.2">Target Y</text>
<text x="776.9" y="723.9" font-size="16.1" fill="#f0f0f0" text-anchor="start" textLength="85.0" lengthAdjust="spacingAndGlyphs">181,8052</text>
<text x="876.6" y="723.9" font-size="16.1" fill="#f0f0f0" text-anchor="start" textLength="85.0" lengthAdjust="spacingAndGlyphs">178,6140</text>
<text x="976.4" y="723.9" font-size="16.1" fill="#f0f0f0" text-anchor="start" textLength="85.0" lengthAdjust="spacingAndGlyphs">176,1620</text>
<text x="1076.2" y="723.9" font-size="16.1" fill="#f0f0f0" text-anchor="start" textLength="85.0" lengthAdjust="spacingAndGlyphs">174,2377</text>
<text x="1175.9" y="723.9" font-size="16.1" fill="#f0f0f0" text-anchor="start" textLength="85.0" lengthAdjust="spacingAndGlyphs">172,3773</text>
<rect x="587.5" y="729.6" width="680.5" height="24.2" fill="#404040"/>
<text x="604.3" y="748.1" font-size="15.7" fill="#f0f0f0" text-anchor="start" font-weight="bold" textLength="84.0" lengthAdjust="spacingAndGlyphs" stroke="#f0f0f0" stroke-width="0.2">ΔE 2000</text>
<text x="775.4" y="748.1" font-size="16.1" fill="#f0f0f0" text-anchor="start" textLength="62.0" lengthAdjust="spacingAndGlyphs">0,6968</text>
<text x="875.1" y="748.1" font-size="16.1" fill="#f0f0f0" text-anchor="start" textLength="62.0" lengthAdjust="spacingAndGlyphs">1,2211</text>
<text x="974.9" y="748.1" font-size="16.1" fill="#f0f0f0" text-anchor="start" textLength="62.0" lengthAdjust="spacingAndGlyphs">2,0597</text>
<text x="1074.7" y="748.1" font-size="16.1" fill="#f0f0f0" text-anchor="start" textLength="62.0" lengthAdjust="spacingAndGlyphs">2,6918</text>
<text x="1174.4" y="748.1" font-size="16.1" fill="#f0f0f0" text-anchor="start" textLength="62.0" lengthAdjust="spacingAndGlyphs">3,2747</text>
<rect x="587.5" y="753.7" width="680.5" height="24.2" fill="#828282"/>
<text x="604.3" y="772.2" font-size="15.7" fill="#f0f0f0" text-anchor="start" font-weight="bold" textLength="66.8" lengthAdjust="spacingAndGlyphs" stroke="#f0f0f0" stroke-width="0.2">ΔE ITP</text>
<text x="775.4" y="772.2" font-size="16.1" fill="#f0f0f0" text-anchor="start" textLength="62.0" lengthAdjust="spacingAndGlyphs">1,2700</text>
<text x="875.1" y="772.2" font-size="16.1" fill="#f0f0f0" text-anchor="start" textLength="62.0" lengthAdjust="spacingAndGlyphs">2,7177</text>
<text x="974.9" y="772.2" font-size="16.1" fill="#f0f0f0" text-anchor="start" textLength="62.0" lengthAdjust="spacingAndGlyphs">5,0397</text>
<text x="1074.7" y="772.2" font-size="16.1" fill="#f0f0f0" text-anchor="start" textLength="62.0" lengthAdjust="spacingAndGlyphs">7,0757</text>
<text x="1174.4" y="772.2" font-size="16.1" fill="#f0f0f0" text-anchor="start" textLength="62.0" lengthAdjust="spacingAndGlyphs">9,4360</text>
<text x="837.8" y="576.8" font-size="13.7" fill="#f0f0f0" text-anchor="end" font-weight="bold" textLength="37.2" lengthAdjust="spacingAndGlyphs" stroke="#f0f0f0" stroke-width="0.2">20%</text>
<text x="937.4" y="576.8" font-size="13.7" fill="#f0f0f0" text-anchor="end" font-weight="bold" textLength="37.2" lengthAdjust="spacingAndGlyphs" stroke="#f0f0f0" stroke-width="0.2">40%</text>
<text x="1037.4" y="576.8" font-size="13.7" fill="#f0f0f0" text-anchor="end" font-weight="bold" textLength="37.2" lengthAdjust="spacingAndGlyphs" stroke="#f0f0f0" stroke-width="0.2">60%</text>
<text x="1137.1" y="576.8" font-size="13.7" fill="#f0f0f0" text-anchor="end" font-weight="bold" textLength="37.2" lengthAdjust="spacingAndGlyphs" stroke="#f0f0f0" stroke-width="0.2">80%</text>
<text x="1242.7" y="576.8" font-size="13.7" fill="#f0f0f0" text-anchor="end" font-weight="bold" textLength="48.0" lengthAdjust="spacingAndGlyphs" stroke="#f0f0f0" stroke-width="0.2">100%</text>
<rect x="910.0" y="27.0" width="660.0" height="524.0" fill="#1c1c1c"/>
<rect x="911.0" y="28.0" width="660.0" height="522.0" fill="#c4c400"/>
<rect x="917.0" y="34.0" width="638.0" height="510.0" fill="#333333"/>
<text x="1196.3" y="51.4" font-size="13.1" fill="#d0d0d0" text-anchor="start" textLength="80.0" lengthAdjust="spacingAndGlyphs" stroke="#d0d0d0" stroke-width="0.35">CIE 1976 u'v'</text>
<rect x="952.5" y="55.5" width="600.5" height="462.0" fill="#242424"/>
<defs><linearGradient id="tbg" x1="0" y1="0" x2="0" y2="1"><stop offset="0" stop-color="#a8a8a8"/><stop offset="0.6" stop-color="#8a8a8a"/><stop offset="1" stop-color="#646464"/></linearGradient><linearGradient id="tsel" x1="0" y1="0" x2="0" y2="1"><stop offset="0" stop-color="#1c1c1c"/><stop offset="1" stop-color="#343434"/></linearGradient><linearGradient id="tpan" x1="0" y1="0" x2="0" y2="1"><stop offset="0" stop-color="#484848"/><stop offset="1" stop-color="#2a2a2a"/></linearGradient><linearGradient id="tbtn" x1="0" y1="0" x2="0" y2="1"><stop offset="0" stop-color="#b4b4b4"/><stop offset="1" stop-color="#7a7a7a"/></linearGradient><linearGradient id="circ" x1="0" y1="0" x2="0" y2="1"><stop offset="0" stop-color="#6e6e6e"/><stop offset="1" stop-color="#c2c2c2"/></linearGradient></defs>
<rect x="0" y="799.5" width="1558" height="57" fill="#2e2e2e"/>
<rect x="807" y="800" width="433" height="56" fill="url(#tpan)"/>
<rect x="1232" y="800" width="8" height="56" fill="#2c2c2c" opacity="0.5"/>
<path d="M0 800 H38.8 Q42.8 800 42.8 804 V856 H0 Z" fill="url(#tbg)"/>
<circle cx="20.4" cy="809.3" r="7.4" fill="url(#circ)"/>
<path d="M16.5 811.5 L24.3 811.5 L20.4 806.5 Z" fill="#222"/>
<rect x="3" y="826" width="34.8" height="34" rx="3" fill="#ffff00"/>
<rect x="49" y="800" width="150" height="60" rx="4" fill="url(#tbg)"/>
<rect x="54.5" y="805.5" width="139.5" height="35.5" rx="3" fill="#c1c2a3" stroke="#8c8a6a" stroke-width="0.8"/>
<text x="124.3" y="858" font-size="12.5" fill="#2a2a2a" text-anchor="middle">20%</text>
<rect x="201" y="800" width="150" height="60" rx="4" fill="url(#tbg)"/>
<rect x="206.5" y="805.5" width="139.5" height="35.5" rx="3" fill="#c2c189" stroke="#8c8a6a" stroke-width="0.8"/>
<text x="276.3" y="858" font-size="12.5" fill="#2a2a2a" text-anchor="middle">40%</text>
<rect x="353" y="800" width="150" height="60" rx="4" fill="url(#tbg)"/>
<rect x="358.5" y="805.5" width="139.5" height="35.5" rx="3" fill="#c1bd69" stroke="#8c8a6a" stroke-width="0.8"/>
<text x="428.3" y="858" font-size="12.5" fill="#2a2a2a" text-anchor="middle">60%</text>
<rect x="505" y="800" width="150" height="60" rx="4" fill="url(#tbg)"/>
<rect x="510.5" y="805.5" width="139.5" height="35.5" rx="3" fill="#c1bd4f" stroke="#8c8a6a" stroke-width="0.8"/>
<text x="580.3" y="858" font-size="12.5" fill="#2a2a2a" text-anchor="middle">80%</text>
<rect x="657.3" y="800" width="149.6" height="60" rx="4" fill="url(#tsel)"/>
<rect x="662" y="805" width="140" height="36" rx="3" fill="#c4c000"/>
<text x="731.8" y="858" font-size="12.5" fill="#ffffff" font-weight="bold" text-anchor="middle">100%</text>
<path d="M1240 818 V804 Q1240 800 1244 800 H1284 Q1288 800 1288 804 V818 Z" fill="url(#tbtn)"/>
<rect x="1240" y="818" width="48" height="1.5" fill="#3a3a3a"/>
<rect x="1240" y="819.5" width="48" height="40" fill="url(#tbtn)"/>
<circle cx="1264.4" cy="808.6" r="7.2" fill="url(#circ)"/>
<path d="M1260.5 811 L1268.3 811 L1264.4 806 Z" fill="#333"/>
<rect x="1249.5" y="825.5" width="29" height="32" rx="4" fill="#a2a2a2" stroke="#262626" stroke-width="2.5"/>
<rect x="1250.8" y="826.8" width="26.4" height="12.2" rx="3" fill="#c4c4c4"/>
<rect x="1257" y="833" width="14" height="13.5" fill="#0a0a0a"/>
<rect x="1257" y="833" width="14" height="6" fill="#2a2a2a"/>
<rect x="1289" y="800" width="45.59999999999995" height="30" fill="url(#tbtn)"/>
<rect x="1335.8" y="800" width="43.8" height="30" fill="url(#tbtn)"/>
<rect x="1380.8" y="800" width="43.59999999999995" height="30" fill="url(#tbtn)"/>
<rect x="1425.6" y="800" width="43.900000000000134" height="30" fill="url(#tbtn)"/>
<rect x="1470.7" y="800" width="43.59999999999995" height="30" fill="url(#tbtn)"/>
<rect x="1515.5" y="800" width="43.3" height="30" fill="url(#tbtn)"/>
<rect x="1288" y="830" width="270" height="1.5" fill="#333"/>
<rect x="1289" y="831.5" width="136" height="30" fill="url(#tbtn)"/>
<rect x="1426.6" y="831.5" width="132" height="30" fill="url(#tbtn)"/>
<circle cx="1312" cy="814.8" r="9.8" fill="url(#circ)"/>
<circle cx="1358" cy="814.8" r="9.8" fill="url(#circ)"/>
<circle cx="1402.7" cy="814.8" r="9.8" fill="url(#circ)"/>
<circle cx="1447.7" cy="814.8" r="9.8" fill="url(#circ)"/>
<circle cx="1492.5" cy="814.8" r="9.8" fill="url(#circ)"/>
<circle cx="1538.9" cy="814.8" r="9.8" fill="url(#circ)"/>
<rect x="1307.5" y="810.5" width="9" height="8.6" fill="#2a2a2a"/>
<path d="M1354.5 809.8 L1362.8 814.8 L1354.5 819.8 Z" fill="#2a2a2a"/>
<path d="M1399.2 810.5 H1397.5 V819.3 H1399.2 M1406.2 810.5 H1407.9 V819.3 H1406.2" fill="none" stroke="#2a2a2a" stroke-width="1.8"/>
<rect x="1401" y="814" width="1.6" height="1.6" fill="#2a2a2a"/><rect x="1403.3" y="814" width="1.6" height="1.6" fill="#2a2a2a"/>
<path d="M1447.7 814.9 C1445.5 811.6 1441.5 811.8 1441.5 814.9 C1441.5 818 1445.5 818.2 1447.7 814.9 C1449.9 811.6 1453.9 811.8 1453.9 814.9 C1453.9 818 1449.9 818.2 1447.7 814.9 Z" fill="none" stroke="#2a2a2a" stroke-width="1.6"/>
<path d="M1497.2 812.5 A5 5 0 0 0 1488.2 812.8 M1487.8 817.2 A5 5 0 0 0 1496.8 816.9" fill="none" stroke="#2a2a2a" stroke-width="1.8"/>
<path d="M1498.5 809.5 L1498.3 814.2 L1494.2 812.8 Z M1486.5 820.2 L1486.7 815.5 L1490.8 816.9 Z" fill="#2a2a2a"/>
<circle cx="1319.5" cy="846.3" r="9.8" fill="url(#circ)"/>
<circle cx="1532.7" cy="846.3" r="9.8" fill="url(#circ)"/>
<path d="M1320.5 841.8 L1316.3 846.3 L1320.5 850.8 M1324.5 841.8 L1320.3 846.3 L1324.5 850.8" fill="none" stroke="#2a2a2a" stroke-width="1.5"/>
<path d="M1529.5 841.8 L1533.7 846.3 L1529.5 850.8 M1533.5 841.8 L1537.7 846.3 L1533.5 850.8" fill="none" stroke="#2a2a2a" stroke-width="1.5"/>
<text x="1347" y="854.3" font-size="22.5" fill="#2a2a2a" stroke="#2a2a2a" stroke-width="0.6" textLength="50.2" lengthAdjust="spacingAndGlyphs">Back</text>
<text x="1452.8" y="854.3" font-size="22.5" fill="#2a2a2a" stroke="#2a2a2a" stroke-width="0.6" textLength="52.8" lengthAdjust="spacingAndGlyphs">Next</text>
</svg>
<div class="cie"><div class="cl" style="clip-path:polygon(256.0px 448.2px,256.0px 448.2px,255.9px 448.1px,255.9px 448.1px,255.9px 448.2px,255.8px 448.2px,255.8px 448.3px,255.7px 448.4px,255.6px 448.4px,255.6px 448.4px,255.5px 448.4px,255.4px 448.4px,255.3px 448.4px,255.2px 448.5px,255.1px 448.5px,255.0px 448.6px,254.9px 448.7px,254.8px 448.7px,254.7px 448.7px,254.6px 448.7px,254.4px 448.7px,254.3px 448.7px,254.1px 448.7px,253.9px 448.7px,253.8px 448.7px,253.6px 448.7px,253.4px 448.7px,253.2px 448.7px,252.9px 448.7px,252.6px 448.6px,252.3px 448.4px,251.9px 448.2px,251.4px 447.9px,250.9px 447.6px,250.3px 447.2px,249.6px 446.7px,248.8px 446.2px,248.1px 445.6px,247.2px 445.0px,246.4px 444.3px,245.4px 443.5px,244.2px 442.6px,243.0px 441.7px,241.7px 440.6px,240.3px 439.4px,238.8px 438.2px,237.3px 436.9px,235.7px 435.5px,233.9px 434.0px,232.1px 432.5px,230.2px 430.9px,228.1px 429.2px,225.9px 427.4px,223.5px 425.4px,220.9px 423.3px,218.2px 421.1px,215.3px 418.7px,212.4px 416.3px,209.3px 413.8px,206.1px 411.1px,202.6px 408.1px,199.0px 405.0px,195.2px 401.6px,191.2px 398.0px,187.0px 394.0px,182.7px 389.9px,178.3px 385.5px,173.5px 380.6px,168.3px 375.0px,162.6px 368.5px,156.5px 361.4px,150.1px 353.5px,143.5px 345.0px,136.5px 335.8px,129.2px 325.8px,121.7px 315.3px,114.1px 304.0px,106.3px 292.1px,98.3px 279.4px,90.2px 266.3px,82.3px 253.0px,74.4px 239.5px,66.5px 225.6px,58.8px 211.6px,51.7px 197.9px,45.0px 184.3px,38.8px 170.8px,33.0px 157.5px,27.7px 144.9px,22.9px 132.9px,18.6px 121.4px,14.8px 110.5px,11.5px 100.3px,8.7px 91.0px,6.4px 82.4px,4.5px 74.4px,3.1px 67.1px,2.0px 60.5px,1.3px 54.5px,1.0px 49.1px,1.0px 44.0px,1.4px 39.4px,2.0px 35.3px,3.0px 31.5px,4.2px 28.2px,5.8px 25.1px,7.6px 22.4px,9.6px 20.1px,11.9px 18.1px,14.3px 16.4px,16.9px 15.0px,19.8px 13.9px,22.7px 12.9px,25.7px 12.2px,28.9px 11.7px,32.2px 11.3px,35.6px 11.0px,39.0px 10.8px,42.5px 10.7px,46.0px 10.6px,49.6px 10.6px,53.1px 10.6px,56.7px 10.6px,60.2px 10.6px,63.8px 10.7px,67.5px 10.9px,71.2px 11.0px,74.9px 11.2px,78.7px 11.4px,82.6px 11.7px,86.6px 12.0px,90.6px 12.3px,94.7px 12.6px,98.9px 12.9px,103.2px 13.3px,107.6px 13.7px,112.1px 14.2px,116.7px 14.6px,121.5px 15.1px,126.3px 15.6px,131.3px 16.1px,136.4px 16.6px,141.6px 17.2px,147.0px 17.8px,152.5px 18.4px,158.1px 19.0px,163.9px 19.6px,169.8px 20.3px,175.9px 21.0px,182.2px 21.7px,188.6px 22.4px,195.2px 23.1px,201.9px 23.9px,208.8px 24.7px,215.8px 25.5px,223.0px 26.3px,230.4px 27.2px,238.0px 28.0px,245.7px 28.9px,253.5px 29.8px,261.5px 30.8px,269.7px 31.7px,278.1px 32.7px,286.5px 33.6px,295.1px 34.6px,303.8px 35.6px,312.7px 36.6px,321.6px 37.7px,330.6px 38.7px,339.7px 39.7px,348.9px 40.8px,358.0px 41.9px,367.1px 42.9px,376.0px 43.9px,384.9px 44.9px,393.7px 46.0px,402.5px 47.0px,411.2px 48.0px,419.9px 49.0px,428.5px 50.0px,436.9px 50.9px,445.0px 51.8px,452.9px 52.7px,460.6px 53.6px,468.1px 54.5px,475.3px 55.3px,482.3px 56.1px,489.1px 56.9px,495.6px 57.6px,501.9px 58.4px,507.8px 59.1px,513.6px 59.7px,519.1px 60.3px,524.3px 60.9px,529.3px 61.5px,534.1px 62.1px,538.7px 62.6px,543.1px 63.1px,547.3px 63.6px,551.4px 64.0px,555.3px 64.5px,559.1px 64.9px,562.7px 65.4px,566.2px 65.8px,569.6px 66.2px,572.9px 66.5px,576.0px 66.9px,578.9px 67.2px,581.8px 67.6px,584.4px 67.9px,587.0px 68.1px,589.3px 68.4px,591.6px 68.7px,593.6px 68.9px,595.4px 69.1px,597.1px 69.3px,599.2px 69.5px,601.6px 69.8px,604.3px 70.1px,607.0px 70.4px,609.6px 70.7px,612.0px 71.0px,614.5px 71.3px,616.7px 71.6px,618.6px 71.8px,619.9px 71.9px,620.9px 72.0px,621.6px 72.1px,622.1px 72.2px)"><i style="top:4px;height:4px;background:linear-gradient(90deg,#009900 0px,#009900 10px,#009900 20px,#009900 30px,#009900 40px,#009900 50px,#009900 60px,#009900 70px,#009900 80px,#009900 90px,#009900 100px,#009900 110px,#009900 120px,#119900 130px,#229900 140px,#329900 150px,#439900 160px,#549900 170px,#669900 180px,#799900 190px,#8d9900 200px,#999100 210px,#998000 220px,#997200 230px,#996600 240px,#995b00 250px,#995200 260px,#994a00 270px,#994300 280px,#993d00 290px,#993800 300px,#993300 310px,#992e00 320px,#992a00 330px,#992600 340px,#992300 350px,#991f00 360px,#991c00 370px,#991900 380px,#991700 390px,#991400 400px,#991200 410px,#991000 420px,#990e00 430px,#990b00 440px,#990a00 450px,#990800 460px,#990600 470px,#990400 480px,#990200 490px,#990100 500px,#990000 510px,#990000 520px,#990000 530px,#990000 540px,#990000 550px,#990000 560px,#990000 570px,#990000 580px,#990000 590px,#990000 600px)"></i><i style="top:8px;height:4px;background:linear-gradient(90deg,#009900 0px,#009900 10px,#009900 20px,#009900 30px,#009900 40px,#009900 50px,#009900 60px,#009900 70px,#009900 80px,#009900 90px,#009900 100px,#009900 110px,#009900 120px,#109900 130px,#219900 140px,#329900 150px,#439900 160px,#549900 170px,#669900 180px,#799900 190px,#8d9900 200px,#999000 210px,#997f00 220px,#997100 230px,#996500 240px,#995a00 250px,#995100 260px,#994a00 270px,#994300 280px,#993c00 290px,#993700 300px,#993200 310px,#992d00 320px,#992900 330px,#992500 340px,#992200 350px,#991f00 360px,#991c00 370px,#991900 380px,#991600 390px,#991400 400px,#991100 410px,#990f00 420px,#990d00 430px,#990b00 440px,#990900 450px,#990700 460px,#990500 470px,#990300 480px,#990200 490px,#990000 500px,#990000 510px,#990000 520px,#990000 530px,#990000 540px,#990000 550px,#990000 560px,#990000 570px,#990000 580px,#990000 590px,#990000 600px)"></i><i style="top:12px;height:4px;background:linear-gradient(90deg,#009900 0px,#009900 10px,#009900 20px,#009900 30px,#009900 40px,#009900 50px,#009900 60px,#009900 70px,#009900 80px,#009900 90px,#009900 100px,#009900 110px,#009900 120px,#0f9900 130px,#209900 140px,#319900 150px,#429900 160px,#549900 170px,#669900 180px,#7a9900 190px,#8e9900 200px,#999000 210px,#997e00 220px,#997000 230px,#996400 240px,#995900 250px,#995100 260px,#994900 270px,#994200 280px,#993c00 290px,#993600 300px,#993100 310px,#992d00 320px,#992800 330px,#992500 340px,#992100 350px,#991e00 360px,#991b00 370px,#991800 380px,#991500 390px,#991300 400px,#991100 410px,#990e00 420px,#990c00 430px,#990a00 440px,#990800 450px,#990600 460px,#990500 470px,#990300 480px,#990100 490px,#990000 500px,#990000 510px,#990000 520px,#990000 530px,#990000 540px,#990000 550px,#990000 560px,#990000 570px,#990000 580px,#990000 590px,#990000 600px)"></i><i style="top:16px;height:4px;background:linear-gradient(90deg,#009901 0px,#009900 10px,#009900 20px,#009900 30px,#009900 40px,#009900 50px,#009900 60px,#009900 70px,#009900 80px,#009900 90px,#009900 100px,#009900 110px,#009900 120px,#0e9900 130px,#1f9900 140px,#309900 150px,#429900 160px,#549900 170px,#669900 180px,#7a9900 190px,#8e9900 200px,#998f00 210px,#997d00 220px,#996f00 230px,#996300 240px,#995900 250px,#995000 260px,#994800 270px,#994100 280px,#993b00 290px,#993500 300px,#993000 310px,#992c00 320px,#992800 330px,#992400 340px,#992000 350px,#991d00 360px,#991a00 370px,#991700 380px,#991500 390px,#991200 400px,#991000 410px,#990e00 420px,#990c00 430px,#990a00 440px,#990800 450px,#990600 460px,#990400 470px,#990200 480px,#990000 490px,#990000 500px,#990000 510px,#990000 520px,#990000 530px,#990000 540px,#990000 550px,#990000 560px,#990000 570px,#990000 580px,#990000 590px,#990000 600px)"></i><i style="top:20px;height:4px;background:linear-gradient(90deg,#009906 0px,#009905 10px,#009904 20px,#009903 30px,#009901 40px,#009900 50px,#009900 60px,#009900 70px,#009900 80px,#009900 90px,#009900 100px,#009900 110px,#009900 120px,#0d9900 130px,#1f9900 140px,#309900 150px,#429900 160px,#549900 170px,#679900 180px,#7a9900 190px,#8f9900 200px,#998e00 210px,#997c00 220px,#996e00 230px,#996200 240px,#995800 250px,#994f00 260px,#994700 270px,#994000 280px,#993a00 290px,#993400 300px,#993000 310px,#992b00 320px,#992700 330px,#992300 340px,#992000 350px,#991c00 360px,#991900 370px,#991700 380px,#991400 390px,#991200 400px,#990f00 410px,#990d00 420px,#990b00 430px,#990900 440px,#990700 450px,#990500 460px,#990300 470px,#990100 480px,#990000 490px,#990000 500px,#990000 510px,#990000 520px,#990000 530px,#990000 540px,#990000 550px,#990000 560px,#990000 570px,#990000 580px,#990000 590px,#990000 600px)"></i><i style="top:24px;height:4px;background:linear-gradient(90deg,#00990c 0px,#00990b 10px,#00990a 20px,#009908 30px,#009907 40px,#009906 50px,#009905 60px,#009903 70px,#009902 80px,#009900 90px,#009900 100px,#009900 110px,#009900 120px,#0c9900 130px,#1e9900 140px,#2f9900 150px,#419900 160px,#549900 170px,#679900 180px,#7b9900 190px,#909900 200px,#998d00 210px,#997c00 220px,#996d00 230px,#996100 240px,#995700 250px,#994e00 260px,#994600 270px,#993f00 280px,#993900 290px,#993400 300px,#992f00 310px,#992a00 320px,#992600 330px,#992200 340px,#991f00 350px,#991c00 360px,#991900 370px,#991600 380px,#991300 390px,#991100 400px,#990f00 410px,#990c00 420px,#990a00 430px,#990800 440px,#990600 450px,#990400 460px,#990300 470px,#990100 480px,#990000 490px,#990000 500px,#990000 510px,#990000 520px,#990000 530px,#990000 540px,#990000 550px,#990000 560px,#990000 570px,#990000 580px,#990000 590px,#990000 600px)"></i><i style="top:28px;height:4px;background:linear-gradient(90deg,#009910 0px,#009910 10px,#00990f 20px,#00990e 30px,#00990d 40px,#00990c 50px,#00990b 60px,#00990a 70px,#009908 80px,#009907 90px,#009906 100px,#009904 110px,#009903 120px,#0b9901 130px,#1d9900 140px,#2f9900 150px,#419900 160px,#549900 170px,#679900 180px,#7b9900 190px,#909900 200px,#998c00 210px,#997b00 220px,#996c00 230px,#996000 240px,#995600 250px,#994d00 260px,#994500 270px,#993e00 280px,#993800 290px,#993300 300px,#992e00 310px,#992900 320px,#992500 330px,#992200 340px,#991e00 350px,#991b00 360px,#991800 370px,#991500 380px,#991300 390px,#991000 400px,#990e00 410px,#990c00 420px,#990a00 430px,#990800 440px,#990600 450px,#990400 460px,#990200 470px,#990000 480px,#990000 490px,#990000 500px,#990000 510px,#990000 520px,#990000 530px,#990000 540px,#990000 550px,#990000 560px,#990000 570px,#990000 580px,#990000 590px,#990000 600px)"></i><i style="top:32px;height:4px;background:linear-gradient(90deg,#009915 0px,#009915 10px,#009914 20px,#009913 30px,#009912 40px,#009911 50px,#009911 60px,#009910 70px,#00990f 80px,#00990e 90px,#00990c 100px,#00990b 110px,#00990a 120px,#0a9908 130px,#1c9907 140px,#2e9905 150px,#419904 160px,#539902 170px,#679900 180px,#7c9900 190px,#919900 200px,#998b00 210px,#997a00 220px,#996b00 230px,#995f00 240px,#995500 250px,#994c00 260px,#994400 270px,#993d00 280px,#993700 290px,#993200 300px,#992d00 310px,#992900 320px,#992500 330px,#992100 340px,#991d00 350px,#991a00 360px,#991700 370px,#991500 380px,#991200 390px,#991000 400px,#990d00 410px,#990b00 420px,#990900 430px,#990700 440px,#990500 450px,#990300 460px,#990100 470px,#990000 480px,#990000 490px,#990000 500px,#990000 510px,#990000 520px,#990000 530px,#990000 540px,#990000 550px,#990000 560px,#990000 570px,#990000 580px,#990000 590px,#990000 600px)"></i><i style="top:36px;height:4px;background:linear-gradient(90deg,#00991a 0px,#00991a 10px,#009919 20px,#009918 30px,#009918 40px,#009917 50px,#009916 60px,#009915 70px,#009914 80px,#009914 90px,#009913 100px,#009912 110px,#009911 120px,#099910 130px,#1b990e 140px,#2e990d 150px,#40990c 160px,#53990a 170px,#679908 180px,#7c9907 190px,#929905 200px,#998a02 210px,#997900 220px,#996a00 230px,#995e00 240px,#995400 250px,#994b00 260px,#994300 270px,#993d00 280px,#993700 290px,#993100 300px,#992c00 310px,#992800 320px,#992400 330px,#992000 340px,#991d00 350px,#991a00 360px,#991700 370px,#991400 380px,#991100 390px,#990f00 400px,#990d00 410px,#990a00 420px,#990800 430px,#990600 440px,#990400 450px,#990200 460px,#990000 470px,#990000 480px,#990000 490px,#990000 500px,#990000 510px,#990000 520px,#990000 530px,#990000 540px,#990000 550px,#990000 560px,#990000 570px,#990000 580px,#990000 590px,#990000 600px)"></i><i style="top:40px;height:4px;background:linear-gradient(90deg,#00991f 0px,#00991e 10px,#00991e 20px,#00991d 30px,#00991d 40px,#00991c 50px,#00991c 60px,#00991b 70px,#00991a 80px,#00991a 90px,#009919 100px,#009918 110px,#009917 120px,#089916 130px,#1b9915 140px,#2d9914 150px,#409913 160px,#539912 170px,#679911 180px,#7c990f 190px,#93990e 200px,#99890b 210px,#997808 220px,#996906 230px,#995d04 240px,#995302 250px,#994a00 260px,#994200 270px,#993c00 280px,#993600 290px,#993000 300px,#992b00 310px,#992700 320px,#992300 330px,#991f00 340px,#991c00 350px,#991900 360px,#991600 370px,#991300 380px,#991100 390px,#990e00 400px,#990c00 410px,#990a00 420px,#990800 430px,#990600 440px,#990400 450px,#990200 460px,#990000 470px,#990000 480px,#990000 490px,#990000 500px,#990000 510px,#990000 520px,#990000 530px,#990000 540px,#990000 550px,#990000 560px,#990000 570px,#990000 580px,#990000 590px,#990000 600px)"></i><i style="top:44px;height:4px;background:linear-gradient(90deg,#009924 0px,#009923 10px,#009923 20px,#009923 30px,#009922 40px,#009922 50px,#009921 60px,#009921 70px,#009920 80px,#009920 90px,#00991f 100px,#00991e 110px,#00991e 120px,#06991d 130px,#1a991c 140px,#2c991c 150px,#3f991b 160px,#53991a 170px,#679919 180px,#7d9918 190px,#939917 200px,#998913 210px,#997710 220px,#99680d 230px,#995c0a 240px,#995208 250px,#994906 260px,#994205 270px,#993b03 280px,#993502 290px,#992f01 300px,#992b00 310px,#992600 320px,#992200 330px,#991f00 340px,#991b00 350px,#991800 360px,#991500 370px,#991200 380px,#991000 390px,#990d00 400px,#990b00 410px,#990900 420px,#990700 430px,#990500 440px,#990300 450px,#990100 460px,#990000 470px,#990000 480px,#990000 490px,#990000 500px,#990000 510px,#990000 520px,#990000 530px,#990000 540px,#990000 550px,#990000 560px,#990000 570px,#990000 580px,#990000 590px,#990000 600px)"></i><i style="top:48px;height:4px;background:linear-gradient(90deg,#009928 0px,#009928 10px,#009928 20px,#009928 30px,#009927 40px,#009927 50px,#009927 60px,#009926 70px,#009926 80px,#009926 90px,#009925 100px,#009925 110px,#009924 120px,#059924 130px,#199923 140px,#2c9923 150px,#3f9922 160px,#539922 170px,#689921 180px,#7d9920 190px,#94991f 200px,#99881b 210px,#997617 220px,#996713 230px,#995b10 240px,#99510e 250px,#99480c 260px,#99410a 270px,#993a08 280px,#993407 290px,#992f05 300px,#992a04 310px,#992503 320px,#992102 330px,#991e01 340px,#991a00 350px,#991700 360px,#991400 370px,#991200 380px,#990f00 390px,#990d00 400px,#990a00 410px,#990800 420px,#990600 430px,#990400 440px,#990200 450px,#990000 460px,#990000 470px,#990000 480px,#990000 490px,#990000 500px,#990000 510px,#990000 520px,#990000 530px,#990000 540px,#990000 550px,#990000 560px,#990000 570px,#990000 580px,#990000 590px,#990000 600px)"></i><i style="top:52px;height:4px;background:linear-gradient(90deg,#00992d 0px,#00992d 10px,#00992d 20px,#00992d 30px,#00992d 40px,#00992c 50px,#00992c 60px,#00992c 70px,#00992c 80px,#00992c 90px,#00992b 100px,#00992b 110px,#00992b 120px,#04992b 130px,#18992a 140px,#2b992a 150px,#3f992a 160px,#539929 170px,#689929 180px,#7e9928 190px,#959928 200px,#998723 210px,#99751e 220px,#99661a 230px,#995a16 240px,#995013 250px,#994711 260px,#99400f 270px,#99390d 280px,#99330b 290px,#992e0a 300px,#992908 310px,#992507 320px,#992106 330px,#991d05 340px,#991a04 350px,#991603 360px,#991402 370px,#991101 380px,#990e00 390px,#990c00 400px,#990a00 410px,#990700 420px,#990500 430px,#990300 440px,#990100 450px,#990000 460px,#990000 470px,#990000 480px,#990000 490px,#990000 500px,#990000 510px,#990000 520px,#990000 530px,#990000 540px,#990000 550px,#990000 560px,#990000 570px,#990000 580px,#990000 590px,#990000 600px)"></i><i style="top:56px;height:4px;background:linear-gradient(90deg,#009932 0px,#009932 10px,#009932 20px,#009932 30px,#009932 40px,#009932 50px,#009932 60px,#009932 70px,#009932 80px,#009932 90px,#009932 100px,#009932 110px,#009931 120px,#029931 130px,#179931 140px,#2a9931 150px,#3e9931 160px,#539931 170px,#689931 180px,#7e9931 190px,#969931 200px,#99862a 210px,#997425 220px,#996520 230px,#99591c 240px,#994f19 250px,#994616 260px,#993f13 270px,#993811 280px,#99320f 290px,#992d0e 300px,#99280c 310px,#99240b 320px,#992009 330px,#991c08 340px,#991907 350px,#991606 360px,#991305 370px,#991004 380px,#990e03 390px,#990b03 400px,#990902 410px,#990701 420px,#990500 430px,#990300 440px,#990000 450px,#990000 460px,#990000 470px,#990000 480px,#990000 490px,#990000 500px,#990000 510px,#990000 520px,#990000 530px,#990000 540px,#990000 550px,#990000 560px,#990000 570px,#990000 580px,#990000 590px,#990000 600px)"></i><i style="top:60px;height:4px;background:linear-gradient(90deg,#009937 0px,#009937 10px,#009937 20px,#009937 30px,#009937 40px,#009937 50px,#009937 60px,#009938 70px,#009938 80px,#009938 90px,#009938 100px,#009938 110px,#009938 120px,#019938 130px,#169938 140px,#2a9938 150px,#3e9939 160px,#529939 170px,#689939 180px,#7f9939 190px,#979939 200px,#998532 210px,#99732b 220px,#996426 230px,#995822 240px,#994e1e 250px,#99451b 260px,#993e18 270px,#993716 280px,#993113 290px,#992c11 300px,#992710 310px,#99230e 320px,#991f0d 330px,#991b0b 340px,#99180a 350px,#991509 360px,#991208 370px,#990f07 380px,#990d06 390px,#990a05 400px,#990805 410px,#990604 420px,#990403 430px,#990202 440px,#990002 450px,#990001 460px,#990000 470px,#990000 480px,#990000 490px,#990000 500px,#990000 510px,#990000 520px,#990000 530px,#990000 540px,#990000 550px,#990000 560px,#990000 570px,#990000 580px,#990000 590px,#990000 600px)"></i><i style="top:64px;height:4px;background:linear-gradient(90deg,#00993c 0px,#00993c 10px,#00993c 20px,#00993c 30px,#00993d 40px,#00993d 50px,#00993d 60px,#00993d 70px,#00993e 80px,#00993e 90px,#00993e 100px,#00993e 110px,#00993f 120px,#00993f 130px,#15993f 140px,#299940 150px,#3d9940 160px,#529941 170px,#689941 180px,#7f9942 190px,#989942 200px,#99843a 210px,#997232 220px,#99632c 230px,#995727 240px,#994d23 250px,#994420 260px,#993d1d 270px,#99361a 280px,#993017 290px,#992b15 300px,#992613 310px,#992212 320px,#991e10 330px,#991a0f 340px,#99170d 350px,#99140c 360px,#99110b 370px,#990f0a 380px,#990c09 390px,#990a08 400px,#990707 410px,#990506 420px,#990306 430px,#990105 440px,#990004 450px,#990004 460px,#990003 470px,#990002 480px,#990002 490px,#990001 500px,#990001 510px,#990000 520px,#990000 530px,#990000 540px,#990000 550px,#990000 560px,#990000 570px,#990000 580px,#990000 590px,#990000 600px)"></i><i style="top:68px;height:4px;background:linear-gradient(90deg,#009941 0px,#009941 10px,#009941 20px,#009942 30px,#009942 40px,#009942 50px,#009943 60px,#009943 70px,#009944 80px,#009944 90px,#009945 100px,#009945 110px,#009946 120px,#009946 130px,#149947 140px,#289947 150px,#3d9948 160px,#529949 170px,#68994a 180px,#80994a 190px,#99994b 200px,#998341 210px,#997139 220px,#996232 230px,#99562d 240px,#994c28 250px,#994324 260px,#993c21 270px,#99351e 280px,#992f1b 290px,#992a19 300px,#992517 310px,#992115 320px,#991d13 330px,#991a12 340px,#991610 350px,#99130f 360px,#99100e 370px,#990e0d 380px,#990b0c 390px,#99090b 400px,#99070a 410px,#990409 420px,#990208 430px,#990007 440px,#990007 450px,#990006 460px,#990005 470px,#990005 480px,#990004 490px,#990003 500px,#990003 510px,#990002 520px,#990002 530px,#990001 540px,#990001 550px,#990000 560px,#990000 570px,#990000 580px,#990000 590px,#990000 600px)"></i><i style="top:72px;height:4px;background:linear-gradient(90deg,#009946 0px,#009946 10px,#009947 20px,#009947 30px,#009948 40px,#009948 50px,#009949 60px,#009949 70px,#00994a 80px,#00994a 90px,#00994b 100px,#00994c 110px,#00994c 120px,#00994d 130px,#13994e 140px,#28994f 150px,#3c9950 160px,#529951 170px,#699952 180px,#809953 190px,#999854 200px,#998249 210px,#997040 220px,#996139 230px,#995533 240px,#994b2e 250px,#994229 260px,#993b26 270px,#993422 280px,#992e1f 290px,#99291d 300px,#99241b 310px,#992019 320px,#991c17 330px,#991915 340px,#991613 350px,#991212 360px,#991011 370px,#990d0f 380px,#990a0e 390px,#99080d 400px,#99060c 410px,#99040b 420px,#99010a 430px,#99000a 440px,#990009 450px,#990008 460px,#990007 470px,#990007 480px,#990006 490px,#990005 500px,#990005 510px,#990004 520px,#990004 530px,#990003 540px,#990003 550px,#990002 560px,#990002 570px,#990001 580px,#990001 590px,#990000 600px)"></i><i style="top:76px;height:4px;background:linear-gradient(90deg,#00994b 0px,#00994b 10px,#00994c 20px,#00994d 30px,#00994d 40px,#00994e 50px,#00994f 60px,#00994f 70px,#009950 80px,#009951 90px,#009952 100px,#009953 110px,#009953 120px,#009955 130px,#129956 140px,#279957 150px,#3c9958 160px,#529959 170px,#69995b 180px,#81995c 190px,#99975d 200px,#998050 210px,#996e47 220px,#99603f 230px,#995438 240px,#994a33 250px,#99412e 260px,#993a2a 270px,#993327 280px,#992d23 290px,#992821 300px,#99241e 310px,#991f1c 320px,#991b1a 330px,#991818 340px,#991516 350px,#991215 360px,#990f14 370px,#990c12 380px,#990a11 390px,#990710 400px,#99050f 410px,#99030e 420px,#99000d 430px,#99000c 440px,#99000b 450px,#99000a 460px,#990009 470px,#990009 480px,#990008 490px,#990007 500px,#990007 510px,#990006 520px,#990006 530px,#990005 540px,#990005 550px,#990004 560px,#990004 570px,#990003 580px,#990003 590px,#990002 600px)"></i><i style="top:80px;height:4px;background:linear-gradient(90deg,#009950 0px,#009951 10px,#009951 20px,#009952 30px,#009953 40px,#009954 50px,#009954 60px,#009955 70px,#009956 80px,#009957 90px,#009958 100px,#009959 110px,#00995b 120px,#00995c 130px,#11995d 140px,#26995f 150px,#3b9960 160px,#529962 170px,#699964 180px,#829966 190px,#999666 200px,#997f58 210px,#996d4e 220px,#995f45 230px,#99533e 240px,#994938 250px,#994033 260px,#99392f 270px,#99322b 280px,#992c27 290px,#992724 300px,#992322 310px,#991e1f 320px,#991b1d 330px,#99171b 340px,#991419 350px,#991118 360px,#990e16 370px,#990b15 380px,#990914 390px,#990712 400px,#990411 410px,#990210 420px,#99000f 430px,#99000e 440px,#99000d 450px,#99000c 460px,#99000c 470px,#99000b 480px,#99000a 490px,#990009 500px,#990009 510px,#990008 520px,#990007 530px,#990007 540px,#990006 550px,#990006 560px,#990005 570px,#990005 580px,#990004 590px,#990004 600px)"></i><i style="top:84px;height:4px;background:linear-gradient(90deg,#009955 0px,#009956 10px,#009957 20px,#009958 30px,#009959 40px,#009959 50px,#00995a 60px,#00995c 70px,#00995d 80px,#00995e 90px,#00995f 100px,#009960 110px,#009962 120px,#009963 130px,#0f9965 140px,#259967 150px,#3b9969 160px,#52996b 170px,#69996d 180px,#82996f 190px,#99956f 200px,#997e60 210px,#996c54 220px,#995e4b 230px,#995244 240px,#99483d 250px,#993f38 260px,#993833 270px,#99312f 280px,#992b2b 290px,#992628 300px,#992225 310px,#991e23 320px,#991a20 330px,#99161e 340px,#99131c 350px,#99101b 360px,#990d19 370px,#990b17 380px,#990816 390px,#990615 400px,#990314 410px,#990112 420px,#990011 430px,#990010 440px,#99000f 450px,#99000e 460px,#99000e 470px,#99000d 480px,#99000c 490px,#99000b 500px,#99000b 510px,#99000a 520px,#990009 530px,#990009 540px,#990008 550px,#990008 560px,#990007 570px,#990006 580px,#990006 590px,#990005 600px)"></i><i style="top:88px;height:4px;background:linear-gradient(90deg,#00995a 0px,#00995b 10px,#00995c 20px,#00995d 30px,#00995e 40px,#00995f 50px,#009961 60px,#009962 70px,#009963 80px,#009965 90px,#009966 100px,#009968 110px,#009969 120px,#00996b 130px,#0e996d 140px,#24996f 150px,#3a9971 160px,#519973 170px,#699976 180px,#839979 190px,#999478 200px,#997d68 210px,#996b5b 220px,#995d51 230px,#995149 240px,#994742 250px,#993e3d 260px,#993737 270px,#993033 280px,#992a2f 290px,#99252c 300px,#992129 310px,#991d26 320px,#991924 330px,#991521 340px,#99121f 350px,#990f1d 360px,#990c1c 370px,#990a1a 380px,#990719 390px,#990517 400px,#990316 410px,#990015 420px,#990014 430px,#990012 440px,#990011 450px,#990011 460px,#990010 470px,#99000f 480px,#99000e 490px,#99000d 500px,#99000c 510px,#99000c 520px,#99000b 530px,#99000a 540px,#99000a 550px,#990009 560px,#990009 570px,#990008 580px,#990008 590px,#990007 600px)"></i><i style="top:92px;height:4px;background:linear-gradient(90deg,#009960 0px,#009961 10px,#009962 20px,#009963 30px,#009964 40px,#009965 50px,#009967 60px,#009968 70px,#00996a 80px,#00996b 90px,#00996d 100px,#00996f 110px,#009971 120px,#009973 130px,#0d9975 140px,#239977 150px,#3a997a 160px,#51997c 170px,#6a997f 180px,#839983 190px,#999381 200px,#997c70 210px,#996a62 220px,#995b58 230px,#994f4f 240px,#994548 250px,#993d41 260px,#99363c 270px,#992f37 280px,#992933 290px,#992430 300px,#99202c 310px,#991c29 320px,#991827 330px,#991424 340px,#991122 350px,#990e20 360px,#990c1e 370px,#99091d 380px,#99061b 390px,#99041a 400px,#990218 410px,#990017 420px,#990016 430px,#990015 440px,#990014 450px,#990013 460px,#990012 470px,#990011 480px,#990010 490px,#99000f 500px,#99000e 510px,#99000d 520px,#99000d 530px,#99000c 540px,#99000b 550px,#99000b 560px,#99000a 570px,#99000a 580px,#990009 590px,#990009 600px)"></i><i style="top:96px;height:4px;background:linear-gradient(90deg,#009965 0px,#009966 10px,#009967 20px,#009969 30px,#00996a 40px,#00996c 50px,#00996d 60px,#00996f 70px,#009970 80px,#009972 90px,#009974 100px,#009976 110px,#009978 120px,#00997b 130px,#0b997d 140px,#229980 150px,#399983 160px,#519986 170px,#6a9989 180px,#84998d 190px,#99928a 200px,#997b78 210px,#996969 220px,#995a5e 230px,#994e55 240px,#99444d 250px,#993c46 260px,#993540 270px,#992e3b 280px,#992837 290px,#992333 300px,#991f30 310px,#991b2d 320px,#99172a 330px,#991427 340px,#991025 350px,#990d23 360px,#990b21 370px,#99081f 380px,#99061e 390px,#99031c 400px,#99011b 410px,#990019 420px,#990018 430px,#990017 440px,#990016 450px,#990015 460px,#990014 470px,#990013 480px,#990012 490px,#990011 500px,#990010 510px,#99000f 520px,#99000f 530px,#99000e 540px,#99000d 550px,#99000c 560px,#99000c 570px,#99000b 580px,#99000b 590px,#99000a 600px)"></i><i style="top:100px;height:4px;background:linear-gradient(90deg,#00996a 0px,#00996c 10px,#00996d 20px,#00996f 30px,#009970 40px,#009972 50px,#009973 60px,#009975 70px,#009977 80px,#009979 90px,#00997b 100px,#00997e 110px,#009980 120px,#009983 130px,#0a9986 140px,#229989 150px,#39998c 160px,#51998f 170px,#6a9993 180px,#859997 190px,#999194 200px,#997a80 210px,#996870 220px,#995964 230px,#994d5a 240px,#994352 250px,#993b4b 260px,#993345 270px,#992d40 280px,#99273b 290px,#992237 300px,#991e33 310px,#991a30 320px,#99162d 330px,#99132a 340px,#990f28 350px,#990d26 360px,#990a24 370px,#990722 380px,#990520 390px,#99021e 400px,#99001d 410px,#99001b 420px,#99001a 430px,#990019 440px,#990018 450px,#990017 460px,#990016 470px,#990015 480px,#990014 490px,#990013 500px,#990012 510px,#990011 520px,#990010 530px,#99000f 540px,#99000f 550px,#99000e 560px,#99000d 570px,#99000d 580px,#99000c 590px,#99000c 600px)"></i><i style="top:104px;height:4px;background:linear-gradient(90deg,#009970 0px,#009971 10px,#009973 20px,#009975 30px,#009976 40px,#009978 50px,#00997a 60px,#00997c 70px,#00997e 80px,#009980 90px,#009983 100px,#009985 110px,#009988 120px,#00998b 130px,#09998e 140px,#219991 150px,#389995 160px,#519999 170px,#679599 180px,#7e9099 190px,#958c99 200px,#997888 210px,#996678 220px,#99586b 230px,#994c60 240px,#994257 250px,#993a50 260px,#993249 270px,#992c44 280px,#99263f 290px,#99213b 300px,#991d37 310px,#991933 320px,#991530 330px,#99122e 340px,#990f2b 350px,#990c29 360px,#990926 370px,#990624 380px,#990423 390px,#990121 400px,#99001f 410px,#99001e 420px,#99001c 430px,#99001b 440px,#99001a 450px,#990019 460px,#990017 470px,#990016 480px,#990015 490px,#990014 500px,#990014 510px,#990013 520px,#990012 530px,#990011 540px,#990010 550px,#990010 560px,#99000f 570px,#99000e 580px,#99000e 590px,#99000d 600px)"></i><i style="top:108px;height:4px;background:linear-gradient(90deg,#009976 0px,#009977 10px,#009979 20px,#00997b 30px,#00997c 40px,#00997e 50px,#009981 60px,#009983 70px,#009985 80px,#009988 90px,#00998a 100px,#00998d 110px,#009990 120px,#009993 130px,#079997 140px,#1f9799 150px,#369399 160px,#4b9099 170px,#618b99 180px,#778799 190px,#8c8399 200px,#997790 210px,#99657f 220px,#995771 230px,#994b66 240px,#99415d 250px,#993855 260px,#99314e 270px,#992b48 280px,#992543 290px,#99203e 300px,#991c3a 310px,#991837 320px,#991433 330px,#991131 340px,#990e2e 350px,#990b2b 360px,#990829 370px,#990527 380px,#990325 390px,#990023 400px,#990022 410px,#990020 420px,#99001e 430px,#99001d 440px,#99001c 450px,#99001b 460px,#990019 470px,#990018 480px,#990017 490px,#990016 500px,#990015 510px,#990014 520px,#990014 530px,#990013 540px,#990012 550px,#990011 560px,#990011 570px,#990010 580px,#99000f 590px,#99000f 600px)"></i><i style="top:112px;height:4px;background:linear-gradient(90deg,#00997b 0px,#00997d 10px,#00997f 20px,#009981 30px,#009983 40px,#009985 50px,#009987 60px,#00998a 70px,#00998c 80px,#00998f 90px,#009992 100px,#009995 110px,#009998 120px,#009699 130px,#059299 140px,#1c8f99 150px,#328b99 160px,#478799 170px,#5b8399 180px,#707f99 190px,#857b99 200px,#997698 210px,#996486 220px,#995578 230px,#994a6c 240px,#994062 250px,#99375a 260px,#993052 270px,#992a4c 280px,#992447 290px,#991f42 300px,#991b3e 310px,#99173a 320px,#991337 330px,#991034 340px,#990d31 350px,#990a2e 360px,#99072c 370px,#99042a 380px,#990227 390px,#990026 400px,#990024 410px,#990022 420px,#990021 430px,#99001f 440px,#99001e 450px,#99001d 460px,#99001b 470px,#99001a 480px,#990019 490px,#990018 500px,#990017 510px,#990016 520px,#990015 530px,#990014 540px,#990014 550px,#990013 560px,#990012 570px,#990011 580px,#990011 590px,#990010 600px)"></i><i style="top:116px;height:4px;background:linear-gradient(90deg,#009981 0px,#009983 10px,#009985 20px,#009987 30px,#009989 40px,#00998c 50px,#00998e 60px,#009991 70px,#009994 80px,#009997 90px,#009899 100px,#009599 110px,#009199 120px,#008e99 130px,#038a99 140px,#1a8799 150px,#2e8399 160px,#427f99 170px,#567b99 180px,#6a7799 190px,#7e7399 200px,#916f99 210px,#99628d 220px,#99547e 230px,#994872 240px,#993e67 250px,#99365e 260px,#992f57 270px,#992951 280px,#99234b 290px,#991e46 300px,#991a41 310px,#99163d 320px,#99123a 330px,#990f37 340px,#990c34 350px,#990931 360px,#99062e 370px,#99032c 380px,#99012a 390px,#990028 400px,#990026 410px,#990024 420px,#990023 430px,#990021 440px,#990020 450px,#99001f 460px,#99001d 470px,#99001c 480px,#99001b 490px,#99001a 500px,#990019 510px,#990018 520px,#990017 530px,#990016 540px,#990015 550px,#990014 560px,#990014 570px,#990013 580px,#990012 590px,#990011 600px)"></i><i style="top:120px;height:4px;background:linear-gradient(90deg,#009987 0px,#009989 10px,#00998b 20px,#00998d 30px,#009990 40px,#009992 50px,#009995 60px,#009998 70px,#009799 80px,#009499 90px,#009199 100px,#008d99 110px,#008a99 120px,#008799 130px,#028399 140px,#187f99 150px,#2b7c99 160px,#3f7899 170px,#517499 180px,#647099 190px,#776c99 200px,#8a6899 210px,#996195 220px,#995385 230px,#994778 240px,#993d6d 250px,#993563 260px,#992e5c 270px,#992855 280px,#99224f 290px,#991d4a 300px,#991945 310px,#991541 320px,#99113d 330px,#990e3a 340px,#990b36 350px,#990834 360px,#990531 370px,#99022f 380px,#99002c 390px,#99002a 400px,#990028 410px,#990027 420px,#990025 430px,#990023 440px,#990022 450px,#990020 460px,#99001f 470px,#99001e 480px,#99001d 490px,#99001c 500px,#99001b 510px,#99001a 520px,#990019 530px,#990018 540px,#990017 550px,#990016 560px,#990015 570px,#990014 580px,#990014 590px,#990013 600px)"></i><i style="top:124px;height:4px;background:linear-gradient(90deg,#00998d 0px,#00998f 10px,#009991 20px,#009994 30px,#009996 40px,#009999 50px,#009699 60px,#009399 70px,#009099 80px,#008d99 90px,#008a99 100px,#008699 110px,#008399 120px,#008099 130px,#007c99 140px,#157999 150px,#287599 160px,#3b7299 170px,#4d6e99 180px,#5f6a99 190px,#716699 200px,#836299 210px,#965e99 220px,#99518b 230px,#99467d 240px,#993c72 250px,#993468 260px,#992d60 270px,#992659 280px,#992153 290px,#991c4d 300px,#991848 310px,#991444 320px,#991040 330px,#990d3d 340px,#990a39 350px,#990736 360px,#990434 370px,#990131 380px,#99002f 390px,#99002d 400px,#99002b 410px,#990029 420px,#990027 430px,#990025 440px,#990024 450px,#990022 460px,#990021 470px,#990020 480px,#99001f 490px,#99001d 500px,#99001c 510px,#99001b 520px,#99001a 530px,#990019 540px,#990018 550px,#990017 560px,#990017 570px,#990016 580px,#990015 590px,#990014 600px)"></i><i style="top:128px;height:4px;background:linear-gradient(90deg,#009993 0px,#009995 10px,#009998 20px,#009899 30px,#009599 40px,#009299 50px,#008f99 60px,#008c99 70px,#008999 80px,#008699 90px,#008399 100px,#008099 110px,#007d99 120px,#007999 130px,#007699 140px,#137399 150px,#266f99 160px,#386b99 170px,#496899 180px,#5b6499 190px,#6c6099 200px,#7d5c99 210px,#8f5899 220px,#995092 230px,#994483 240px,#993b77 250px,#99336d 260px,#992b65 270px,#99255d 280px,#992057 290px,#991b51 300px,#99174c 310px,#991347 320px,#990f43 330px,#990c40 340px,#99093c 350px,#990639 360px,#990336 370px,#990034 380px,#990031 390px,#99002f 400px,#99002d 410px,#99002b 420px,#990029 430px,#990027 440px,#990026 450px,#990024 460px,#990023 470px,#990022 480px,#990020 490px,#99001f 500px,#99001e 510px,#99001d 520px,#99001c 530px,#99001b 540px,#99001a 550px,#990019 560px,#990018 570px,#990017 580px,#990016 590px,#990016 600px)"></i><i style="top:132px;height:4px;background:linear-gradient(90deg,#009999 0px,#009799 10px,#009499 20px,#009199 30px,#008f99 40px,#008c99 50px,#008999 60px,#008699 70px,#008399 80px,#008099 90px,#007d99 100px,#007a99 110px,#007799 120px,#007499 130px,#007099 140px,#126d99 150px,#236999 160px,#356699 170px,#456299 180px,#565f99 190px,#675b99 200px,#785799 210px,#885399 220px,#994f99 230px,#99438a 240px,#99397d 250px,#993172 260px,#992a69 270px,#992462 280px,#991f5b 290px,#991a55 300px,#991650 310px,#99124b 320px,#990e47 330px,#990b43 340px,#99083f 350px,#99053c 360px,#990239 370px,#990036 380px,#990034 390px,#990031 400px,#99002f 410px,#99002d 420px,#99002b 430px,#99002a 440px,#990028 450px,#990026 460px,#990025 470px,#990023 480px,#990022 490px,#990021 500px,#990020 510px,#99001f 520px,#99001d 530px,#99001c 540px,#99001b 550px,#99001b 560px,#99001a 570px,#990019 580px,#990018 590px,#990017 600px)"></i><i style="top:136px;height:4px;background:linear-gradient(90deg,#009399 0px,#009199 10px,#008e99 20px,#008b99 30px,#008999 40px,#008699 50px,#008399 60px,#008099 70px,#007e99 80px,#007b99 90px,#007899 100px,#007499 110px,#007199 120px,#006e99 130px,#006b99 140px,#106899 150px,#216499 160px,#326199 170px,#425d99 180px,#525999 190px,#625699 200px,#725299 210px,#824e99 220px,#934a99 230px,#994290 240px,#993882 250px,#993077 260px,#99296e 270px,#992366 280px,#991e5f 290px,#991959 300px,#991553 310px,#99114e 320px,#990d4a 330px,#990a46 340px,#990742 350px,#99043f 360px,#99013c 370px,#990039 380px,#990036 390px,#990034 400px,#990032 410px,#99002f 420px,#99002d 430px,#99002c 440px,#99002a 450px,#990028 460px,#990027 470px,#990025 480px,#990024 490px,#990023 500px,#990021 510px,#990020 520px,#99001f 530px,#99001e 540px,#99001d 550px,#99001c 560px,#99001b 570px,#99001a 580px,#990019 590px,#990019 600px)"></i><i style="top:140px;height:4px;background:linear-gradient(90deg,#008e99 0px,#008b99 10px,#008999 20px,#008699 30px,#008399 40px,#008199 50px,#007e99 60px,#007b99 70px,#007899 80px,#007599 90px,#007299 100px,#006f99 110px,#006c99 120px,#006999 130px,#006699 140px,#0e6399 150px,#1f5f99 160px,#2f5c99 170px,#3f5899 180px,#4e5599 190px,#5e5199 200px,#6d4d99 210px,#7d4a99 220px,#8d4699 230px,#994096 240px,#993788 250px,#992f7d 260px,#992873 270px,#99226a 280px,#991c63 290px,#99185c 300px,#991457 310px,#991052 320px,#990c4d 330px,#990949 340px,#990645 350px,#990341 360px,#99003e 370px,#99003b 380px,#990039 390px,#990036 400px,#990034 410px,#990032 420px,#990030 430px,#99002e 440px,#99002c 450px,#99002a 460px,#990029 470px,#990027 480px,#990026 490px,#990024 500px,#990023 510px,#990022 520px,#990021 530px,#990020 540px,#99001f 550px,#99001e 560px,#99001d 570px,#99001c 580px,#99001b 590px,#99001a 600px)"></i><i style="top:144px;height:4px;background:linear-gradient(90deg,#008899 0px,#008699 10px,#008399 20px,#008199 30px,#007e99 40px,#007b99 50px,#007999 60px,#007699 70px,#007399 80px,#007099 90px,#006d99 100px,#006a99 110px,#006799 120px,#006499 130px,#006199 140px,#0d5e99 150px,#1d5b99 160px,#2d5799 170px,#3c5499 180px,#4b5099 190px,#5a4d99 200px,#694999 210px,#784599 220px,#874299 230px,#963e99 240px,#99358e 250px,#992d82 260px,#992777 270px,#99216f 280px,#991b67 290px,#991760 300px,#99125a 310px,#990f55 320px,#990b50 330px,#99084c 340px,#990548 350px,#990244 360px,#990041 370px,#99003e 380px,#99003b 390px,#990038 400px,#990036 410px,#990034 420px,#990032 430px,#990030 440px,#99002e 450px,#99002c 460px,#99002b 470px,#990029 480px,#990028 490px,#990026 500px,#990025 510px,#990024 520px,#990022 530px,#990021 540px,#990020 550px,#99001f 560px,#99001e 570px,#99001d 580px,#99001c 590px,#99001b 600px)"></i><i style="top:148px;height:4px;background:linear-gradient(90deg,#008399 0px,#008199 10px,#007e99 20px,#007c99 30px,#007999 40px,#007799 50px,#007499 60px,#007199 70px,#006e99 80px,#006c99 90px,#006999 100px,#006699 110px,#006399 120px,#006099 130px,#005d99 140px,#0b5a99 150px,#1b5699 160px,#2a5399 170px,#395099 180px,#484c99 190px,#564999 200px,#654599 210px,#734299 220px,#823e99 230px,#903a99 240px,#993493 250px,#992c87 260px,#99257c 270px,#991f73 280px,#991a6b 290px,#991564 300px,#99115e 310px,#990d58 320px,#990a53 330px,#99074f 340px,#99044b 350px,#990047 360px,#990044 370px,#990040 380px,#99003e 390px,#99003b 400px,#990038 410px,#990036 420px,#990034 430px,#990032 440px,#990030 450px,#99002e 460px,#99002c 470px,#99002b 480px,#990029 490px,#990028 500px,#990026 510px,#990025 520px,#990024 530px,#990023 540px,#990022 550px,#990021 560px,#990020 570px,#99001f 580px,#99001e 590px,#99001d 600px)"></i><i style="top:152px;height:4px;background:linear-gradient(90deg,#007f99 0px,#007c99 10px,#007a99 20px,#007799 30px,#007599 40px,#007299 50px,#006f99 60px,#006d99 70px,#006a99 80px,#006799 90px,#006499 100px,#006299 110px,#005f99 120px,#005c99 130px,#005999 140px,#0a5599 150px,#195299 160px,#284f99 170px,#364c99 180px,#454899 190px,#534599 200px,#614299 210px,#6f3e99 220px,#7d3a99 230px,#8b3799 240px,#993399 250px,#992b8c 260px,#992481 270px,#991e77 280px,#99196f 290px,#991468 300px,#991061 310px,#990c5c 320px,#990957 330px,#990652 340px,#99024e 350px,#99004a 360px,#990046 370px,#990043 380px,#990040 390px,#99003d 400px,#99003b 410px,#990038 420px,#990036 430px,#990034 440px,#990032 450px,#990030 460px,#99002e 470px,#99002d 480px,#99002b 490px,#99002a 500px,#990028 510px,#990027 520px,#990026 530px,#990024 540px,#990023 550px,#990022 560px,#990021 570px,#990020 580px,#99001f 590px,#99001e 600px)"></i><i style="top:156px;height:4px;background:linear-gradient(90deg,#007a99 0px,#007899 10px,#007599 20px,#007399 30px,#007099 40px,#006e99 50px,#006b99 60px,#006999 70px,#006699 80px,#006399 90px,#006099 100px,#005d99 110px,#005b99 120px,#005899 130px,#005599 140px,#085299 150px,#184f99 160px,#264b99 170px,#344899 180px,#424599 190px,#4f4199 200px,#5d3e99 210px,#6b3b99 220px,#783799 230px,#863399 240px,#933099 250px,#992991 260px,#992386 270px,#991d7c 280px,#991873 290px,#99136c 300px,#990f65 310px,#990b5f 320px,#99085a 330px,#990455 340px,#990151 350px,#99004d 360px,#990049 370px,#990046 380px,#990042 390px,#990040 400px,#99003d 410px,#99003a 420px,#990038 430px,#990036 440px,#990034 450px,#990032 460px,#990030 470px,#99002e 480px,#99002d 490px,#99002b 500px,#99002a 510px,#990029 520px,#990027 530px,#990026 540px,#990025 550px,#990024 560px,#990023 570px,#990021 580px,#990020 590px,#990020 600px)"></i><i style="top:160px;height:4px;background:linear-gradient(90deg,#007699 0px,#007499 10px,#007199 20px,#006f99 30px,#006c99 40px,#006a99 50px,#006799 60px,#006599 70px,#006299 80px,#005f99 90px,#005c99 100px,#005a99 110px,#005799 120px,#005499 130px,#005199 140px,#074e99 150px,#164b99 160px,#244899 170px,#324599 180px,#3f4199 190px,#4c3e99 200px,#593b99 210px,#673799 220px,#743499 230px,#813099 240px,#8e2d99 250px,#992896 260px,#99218b 270px,#991c80 280px,#991677 290px,#991270 300px,#990e69 310px,#990a63 320px,#99075d 330px,#990358 340px,#990053 350px,#99004f 360px,#99004c 370px,#990048 380px,#990045 390px,#990042 400px,#99003f 410px,#99003d 420px,#99003a 430px,#990038 440px,#990036 450px,#990034 460px,#990032 470px,#990030 480px,#99002f 490px,#99002d 500px,#99002c 510px,#99002a 520px,#990029 530px,#990028 540px,#990026 550px,#990025 560px,#990024 570px,#990023 580px,#990022 590px,#990021 600px)"></i><i style="top:164px;height:4px;background:linear-gradient(90deg,#007299 0px,#007099 10px,#006d99 20px,#006b99 30px,#006899 40px,#006699 50px,#006399 60px,#006199 70px,#005e99 80px,#005b99 90px,#005999 100px,#005699 110px,#005399 120px,#005099 130px,#004d99 140px,#064b99 150px,#154899 160px,#224499 170px,#2f4199 180px,#3c3e99 190px,#493b99 200px,#563899 210px,#633499 220px,#703199 230px,#7d2d99 240px,#892a99 250px,#962699 260px,#99208f 270px,#991a85 280px,#99157c 290px,#991173 300px,#990d6c 310px,#990966 320px,#990560 330px,#99025b 340px,#990056 350px,#990052 360px,#99004e 370px,#99004b 380px,#990047 390px,#990044 400px,#990041 410px,#99003f 420px,#99003c 430px,#99003a 440px,#990038 450px,#990036 460px,#990034 470px,#990032 480px,#990030 490px,#99002f 500px,#99002d 510px,#99002c 520px,#99002a 530px,#990029 540px,#990028 550px,#990027 560px,#990025 570px,#990024 580px,#990023 590px,#990022 600px)"></i><i style="top:168px;height:4px;background:linear-gradient(90deg,#006e99 0px,#006c99 10px,#006999 20px,#006799 30px,#006599 40px,#006299 50px,#006099 60px,#005d99 70px,#005b99 80px,#005899 90px,#005599 100px,#005399 110px,#005099 120px,#004d99 130px,#004a99 140px,#054799 150px,#134499 160px,#204199 170px,#2d3e99 180px,#3a3b99 190px,#473899 200px,#533599 210px,#5f3199 220px,#6c2e99 230px,#782b99 240px,#852799 250px,#912399 260px,#991f94 270px,#991989 280px,#991480 290px,#990f77 300px,#990b70 310px,#990869 320px,#990463 330px,#99015e 340px,#990059 350px,#990055 360px,#990051 370px,#99004d 380px,#99004a 390px,#990047 400px,#990044 410px,#990041 420px,#99003f 430px,#99003c 440px,#99003a 450px,#990038 460px,#990036 470px,#990034 480px,#990032 490px,#990031 500px,#99002f 510px,#99002d 520px,#99002c 530px,#99002b 540px,#990029 550px,#990028 560px,#990027 570px,#990026 580px,#990025 590px,#990024 600px)"></i><i style="top:172px;height:4px;background:linear-gradient(90deg,#006a99 0px,#006899 10px,#006699 20px,#006399 30px,#006199 40px,#005f99 50px,#005c99 60px,#005a99 70px,#005799 80px,#005599 90px,#005299 100px,#004f99 110px,#004d99 120px,#004a99 130px,#004799 140px,#044499 150px,#124199 160px,#1f3e99 170px,#2b3b99 180px,#383899 190px,#443599 200px,#503299 210px,#5c2f99 220px,#682b99 230px,#742899 240px,#802499 250px,#8d2199 260px,#991d99 270px,#99188e 280px,#991384 290px,#990e7b 300px,#990a74 310px,#99066d 320px,#990367 330px,#990061 340px,#99005c 350px,#990058 360px,#990054 370px,#990050 380px,#99004c 390px,#990049 400px,#990046 410px,#990043 420px,#990041 430px,#99003e 440px,#99003c 450px,#99003a 460px,#990038 470px,#990036 480px,#990034 490px,#990032 500px,#990031 510px,#99002f 520px,#99002e 530px,#99002c 540px,#99002b 550px,#99002a 560px,#990028 570px,#990027 580px,#990026 590px,#990025 600px)"></i><i style="top:176px;height:4px;background:linear-gradient(90deg,#006799 0px,#006599 10px,#006299 20px,#006099 30px,#005e99 40px,#005b99 50px,#005999 60px,#005699 70px,#005499 80px,#005199 90px,#004f99 100px,#004c99 110px,#004a99 120px,#004799 130px,#004499 140px,#034199 150px,#113e99 160px,#1d3c99 170px,#2a3999 180px,#363699 190px,#413299 200px,#4d2f99 210px,#592c99 220px,#652999 230px,#712699 240px,#7c2299 250px,#881f99 260px,#941b99 270px,#991692 280px,#991188 290px,#990d7f 300px,#990977 310px,#990570 320px,#99016a 330px,#990064 340px,#99005f 350px,#99005b 360px,#990056 370px,#990052 380px,#99004f 390px,#99004b 400px,#990048 410px,#990045 420px,#990043 430px,#990040 440px,#99003e 450px,#99003c 460px,#99003a 470px,#990038 480px,#990036 490px,#990034 500px,#990032 510px,#990031 520px,#99002f 530px,#99002e 540px,#99002c 550px,#99002b 560px,#99002a 570px,#990029 580px,#990028 590px,#990026 600px)"></i><i style="top:180px;height:4px;background:linear-gradient(90deg,#006499 0px,#006199 10px,#005f99 20px,#005d99 30px,#005a99 40px,#005899 50px,#005699 60px,#005399 70px,#005199 80px,#004e99 90px,#004c99 100px,#004999 110px,#004799 120px,#004499 130px,#004199 140px,#013e99 150px,#0f3c99 160px,#1c3999 170px,#283699 180px,#343399 190px,#3f3099 200px,#4b2d99 210px,#562a99 220px,#622699 230px,#6d2399 240px,#782099 250px,#841c99 260px,#901999 270px,#991597 280px,#99108c 290px,#990c83 300px,#99087b 310px,#990474 320px,#99006d 330px,#990068 340px,#990062 350px,#99005d 360px,#990059 370px,#990055 380px,#990051 390px,#99004e 400px,#99004b 410px,#990048 420px,#990045 430px,#990042 440px,#990040 450px,#99003e 460px,#99003b 470px,#990039 480px,#990038 490px,#990036 500px,#990034 510px,#990032 520px,#990031 530px,#99002f 540px,#99002e 550px,#99002d 560px,#99002b 570px,#99002a 580px,#990029 590px,#990028 600px)"></i><i style="top:184px;height:4px;background:linear-gradient(90deg,#006099 0px,#005e99 10px,#005c99 20px,#005a99 30px,#005799 40px,#005599 50px,#005399 60px,#005099 70px,#004e99 80px,#004b99 90px,#004999 100px,#004699 110px,#004499 120px,#004199 130px,#003f99 140px,#003c99 150px,#0e3999 160px,#1a3699 170px,#263399 180px,#323099 190px,#3d2d99 200px,#482a99 210px,#532799 220px,#5e2499 230px,#6a2199 240px,#751e99 250px,#801a99 260px,#8b1799 270px,#971399 280px,#990f91 290px,#990a87 300px,#99067f 310px,#990277 320px,#990071 330px,#99006b 340px,#990065 350px,#990060 360px,#99005c 370px,#990058 380px,#990054 390px,#990050 400px,#99004d 410px,#99004a 420px,#990047 430px,#990044 440px,#990042 450px,#990040 460px,#99003d 470px,#99003b 480px,#990039 490px,#990037 500px,#990036 510px,#990034 520px,#990032 530px,#990031 540px,#99002f 550px,#99002e 560px,#99002d 570px,#99002c 580px,#99002a 590px,#990029 600px)"></i><i style="top:188px;height:4px;background:linear-gradient(90deg,#005d99 0px,#005b99 10px,#005999 20px,#005799 30px,#005599 40px,#005299 50px,#005099 60px,#004e99 70px,#004b99 80px,#004999 90px,#004699 100px,#004499 110px,#004199 120px,#003f99 130px,#003c99 140px,#003999 150px,#0d3799 160px,#193499 170px,#253199 180px,#302e99 190px,#3b2b99 200px,#462899 210px,#512599 220px,#5c2299 230px,#661f99 240px,#711c99 250px,#7c1899 260px,#871599 270px,#921199 280px,#990d95 290px,#99098b 300px,#990583 310px,#99017b 320px,#990074 330px,#99006e 340px,#990068 350px,#990063 360px,#99005e 370px,#99005a 380px,#990056 390px,#990053 400px,#99004f 410px,#99004c 420px,#990049 430px,#990046 440px,#990044 450px,#990042 460px,#99003f 470px,#99003d 480px,#99003b 490px,#990039 500px,#990037 510px,#990036 520px,#990034 530px,#990032 540px,#990031 550px,#990030 560px,#99002e 570px,#99002d 580px,#99002c 590px,#99002b 600px)"></i><i style="top:192px;height:4px;background:linear-gradient(90deg,#005a99 0px,#005899 10px,#005699 20px,#005499 30px,#005299 40px,#004f99 50px,#004d99 60px,#004b99 70px,#004899 80px,#004699 90px,#004499 100px,#004199 110px,#003f99 120px,#003c99 130px,#003999 140px,#003799 150px,#0c3499 160px,#183199 170px,#232f99 180px,#2e2c99 190px,#392999 200px,#432699 210px,#4e2399 220px,#592099 230px,#631d99 240px,#6e1a99 250px,#791699 260px,#831399 270px,#8e0f99 280px,#990c99 290px,#99078f 300px,#990386 310px,#99007e 320px,#990077 330px,#990071 340px,#99006b 350px,#990066 360px,#990061 370px,#99005d 380px,#990059 390px,#990055 400px,#990052 410px,#99004e 420px,#99004b 430px,#990049 440px,#990046 450px,#990043 460px,#990041 470px,#99003f 480px,#99003d 490px,#99003b 500px,#990039 510px,#990037 520px,#990036 530px,#990034 540px,#990033 550px,#990031 560px,#990030 570px,#99002e 580px,#99002d 590px,#99002c 600px)"></i><i style="top:196px;height:4px;background:linear-gradient(90deg,#005899 0px,#005699 10px,#005399 20px,#005199 30px,#004f99 40px,#004d99 50px,#004b99 60px,#004899 70px,#004699 80px,#004499 90px,#004199 100px,#003f99 110px,#003c99 120px,#003a99 130px,#003799 140px,#003599 150px,#0b3299 160px,#162f99 170px,#222c99 180px,#2c2a99 190px,#372799 200px,#412499 210px,#4c2199 220px,#561e99 230px,#601b99 240px,#6b1899 250px,#751499 260px,#801199 270px,#8a0e99 280px,#950a99 290px,#990693 300px,#99028a 310px,#990082 320px,#99007b 330px,#990074 340px,#99006e 350px,#990069 360px,#990064 370px,#99005f 380px,#99005b 390px,#990057 400px,#990054 410px,#990051 420px,#99004e 430px,#99004b 440px,#990048 450px,#990045 460px,#990043 470px,#990041 480px,#99003f 490px,#99003d 500px,#99003b 510px,#990039 520px,#990037 530px,#990036 540px,#990034 550px,#990033 560px,#990031 570px,#990030 580px,#99002f 590px,#99002d 600px)"></i><i style="top:200px;height:4px;background:linear-gradient(90deg,#005599 0px,#005399 10px,#005199 20px,#004f99 30px,#004c99 40px,#004a99 50px,#004899 60px,#004699 70px,#004399 80px,#004199 90px,#003f99 100px,#003c99 110px,#003a99 120px,#003799 130px,#003599 140px,#003299 150px,#0a3099 160px,#152d99 170px,#202a99 180px,#2b2899 190px,#352599 200px,#3f2299 210px,#491f99 220px,#541c99 230px,#5e1999 240px,#681699 250px,#721399 260px,#7c0f99 270px,#860c99 280px,#900899 290px,#990497 300px,#99008e 310px,#990085 320px,#99007e 330px,#990077 340px,#990071 350px,#99006c 360px,#990067 370px,#990062 380px,#99005e 390px,#99005a 400px,#990056 410px,#990053 420px,#990050 430px,#99004d 440px,#99004a 450px,#990047 460px,#990045 470px,#990043 480px,#990040 490px,#99003e 500px,#99003c 510px,#99003b 520px,#990039 530px,#990037 540px,#990036 550px,#990034 560px,#990033 570px,#990031 580px,#990030 590px,#99002f 600px)"></i><i style="top:204px;height:4px;background:linear-gradient(90deg,#005299 0px,#005099 10px,#004e99 20px,#004c99 30px,#004a99 40px,#004899 50px,#004699 60px,#004399 70px,#004199 80px,#003f99 90px,#003c99 100px,#003a99 110px,#003899 120px,#003599 130px,#003399 140px,#003099 150px,#092e99 160px,#142b99 170px,#1f2899 180px,#292699 190px,#332399 200px,#3d2099 210px,#471d99 220px,#511a99 230px,#5b1799 240px,#651499 250px,#6f1199 260px,#790e99 270px,#830a99 280px,#8d0799 290px,#970399 300px,#990092 310px,#990089 320px,#990081 330px,#99007a 340px,#990074 350px,#99006f 360px,#990069 370px,#990065 380px,#990060 390px,#99005c 400px,#990059 410px,#990055 420px,#990052 430px,#99004f 440px,#99004c 450px,#990049 460px,#990047 470px,#990044 480px,#990042 490px,#990040 500px,#99003e 510px,#99003c 520px,#99003a 530px,#990039 540px,#990037 550px,#990036 560px,#990034 570px,#990033 580px,#990031 590px,#990030 600px)"></i><i style="top:208px;height:4px;background:linear-gradient(90deg,#005099 0px,#004e99 10px,#004c99 20px,#004a99 30px,#004899 40px,#004599 50px,#004399 60px,#004199 70px,#003f99 80px,#003d99 90px,#003a99 100px,#003899 110px,#003599 120px,#003399 130px,#003199 140px,#002e99 150px,#082c99 160px,#132999 170px,#1d2699 180px,#282499 190px,#322199 200px,#3b1e99 210px,#451b99 220px,#4f1899 230px,#591699 240px,#621299 250px,#6c0f99 260px,#760c99 270px,#7f0999 280px,#890599 290px,#930199 300px,#990096 310px,#99008d 320px,#990085 330px,#99007e 340px,#990077 350px,#990071 360px,#99006c 370px,#990067 380px,#990063 390px,#99005f 400px,#99005b 410px,#990057 420px,#990054 430px,#990051 440px,#99004e 450px,#99004b 460px,#990049 470px,#990046 480px,#990044 490px,#990042 500px,#990040 510px,#99003e 520px,#99003c 530px,#99003a 540px,#990039 550px,#990037 560px,#990036 570px,#990034 580px,#990033 590px,#990031 600px)"></i><i style="top:212px;height:4px;background:linear-gradient(90deg,#004e99 0px,#004c99 10px,#004999 20px,#004799 30px,#004599 40px,#004399 50px,#004199 60px,#003f99 70px,#003d99 80px,#003a99 90px,#003899 100px,#003699 110px,#003399 120px,#003199 130px,#002f99 140px,#002c99 150px,#072a99 160px,#122799 170px,#1c2599 180px,#262299 190px,#301f99 200px,#3a1c99 210px,#431a99 220px,#4d1799 230px,#561499 240px,#601199 250px,#690e99 260px,#730a99 270px,#7c0799 280px,#860399 290px,#8f0099 300px,#990099 310px,#990090 320px,#990088 330px,#990081 340px,#99007a 350px,#990074 360px,#99006f 370px,#99006a 380px,#990065 390px,#990061 400px,#99005d 410px,#99005a 420px,#990056 430px,#990053 440px,#990050 450px,#99004d 460px,#99004b 470px,#990048 480px,#990046 490px,#990044 500px,#990042 510px,#990040 520px,#99003e 530px,#99003c 540px,#99003a 550px,#990039 560px,#990037 570px,#990036 580px,#990034 590px,#990033 600px)"></i><i style="top:216px;height:4px;background:linear-gradient(90deg,#004b99 0px,#004999 10px,#004799 20px,#004599 30px,#004399 40px,#004199 50px,#003f99 60px,#003d99 70px,#003b99 80px,#003899 90px,#003699 100px,#003499 110px,#003199 120px,#002f99 130px,#002d99 140px,#002a99 150px,#062899 160px,#112599 170px,#1b2399 180px,#252099 190px,#2e1d99 200px,#381b99 210px,#411899 220px,#4b1599 230px,#541299 240px,#5d0f99 250px,#660c99 260px,#700999 270px,#790699 280px,#820299 290px,#8c0099 300px,#950099 310px,#990094 320px,#99008c 330px,#990084 340px,#99007d 350px,#990077 360px,#990072 370px,#99006d 380px,#990068 390px,#990064 400px,#990060 410px,#99005c 420px,#990058 430px,#990055 440px,#990052 450px,#99004f 460px,#99004d 470px,#99004a 480px,#990048 490px,#990045 500px,#990043 510px,#990041 520px,#99003f 530px,#99003d 540px,#99003c 550px,#99003a 560px,#990038 570px,#990037 580px,#990036 590px,#990034 600px)"></i><i style="top:220px;height:4px;background:linear-gradient(90deg,#004999 0px,#004799 10px,#004599 20px,#004399 30px,#004199 40px,#003f99 50px,#003d99 60px,#003b99 70px,#003999 80px,#003699 90px,#003499 100px,#003299 110px,#003099 120px,#002d99 130px,#002b99 140px,#002899 150px,#052699 160px,#102499 170px,#1a2199 180px,#241e99 190px,#2d1c99 200px,#361999 210px,#3f1699 220px,#481499 230px,#521199 240px,#5b0e99 250px,#640b99 260px,#6d0899 270px,#760499 280px,#7f0099 290px,#880099 300px,#910099 310px,#990098 320px,#99008f 330px,#990087 340px,#990080 350px,#99007a 360px,#990074 370px,#99006f 380px,#99006a 390px,#990066 400px,#990062 410px,#99005e 420px,#99005a 430px,#990057 440px,#990054 450px,#990051 460px,#99004e 470px,#99004c 480px,#990049 490px,#990047 500px,#990045 510px,#990043 520px,#990041 530px,#99003f 540px,#99003d 550px,#99003c 560px,#99003a 570px,#990038 580px,#990037 590px,#990035 600px)"></i><i style="top:224px;height:4px;background:linear-gradient(90deg,#004799 0px,#004599 10px,#004399 20px,#004199 30px,#003f99 40px,#003d99 50px,#003b99 60px,#003999 70px,#003799 80px,#003499 90px,#003299 100px,#003099 110px,#002e99 120px,#002b99 130px,#002999 140px,#002799 150px,#052499 160px,#0f2299 170px,#191f99 180px,#221d99 190px,#2b1a99 200px,#351899 210px,#3e1599 220px,#471299 230px,#4f0f99 240px,#580c99 250px,#610999 260px,#6a0699 270px,#730399 280px,#7c0099 290px,#850099 300px,#8e0099 310px,#970099 320px,#990092 330px,#99008b 340px,#990084 350px,#99007d 360px,#990077 370px,#990072 380px,#99006d 390px,#990068 400px,#990064 410px,#990060 420px,#99005d 430px,#990059 440px,#990056 450px,#990053 460px,#990050 470px,#99004e 480px,#99004b 490px,#990049 500px,#990047 510px,#990045 520px,#990042 530px,#990041 540px,#99003f 550px,#99003d 560px,#99003b 570px,#99003a 580px,#990038 590px,#990037 600px)"></i><i style="top:228px;height:4px;background:linear-gradient(90deg,#004599 0px,#004399 10px,#004199 20px,#003f99 30px,#003d99 40px,#003b99 50px,#003999 60px,#003799 70px,#003599 80px,#003399 90px,#003099 100px,#002e99 110px,#002c99 120px,#002a99 130px,#002799 140px,#002599 150px,#042399 160px,#0e2099 170px,#181e99 180px,#211b99 190px,#2a1999 200px,#331699 210px,#3c1399 220px,#451199 230px,#4d0e99 240px,#560b99 250px,#5f0899 260px,#680599 270px,#700199 280px,#790099 290px,#820099 300px,#8a0099 310px,#930099 320px,#990096 330px,#99008e 340px,#990087 350px,#990080 360px,#99007a 370px,#990075 380px,#990070 390px,#99006b 400px,#990067 410px,#990063 420px,#99005f 430px,#99005b 440px,#990058 450px,#990055 460px,#990052 470px,#990050 480px,#99004d 490px,#99004b 500px,#990048 510px,#990046 520px,#990044 530px,#990042 540px,#990040 550px,#99003f 560px,#99003d 570px,#99003b 580px,#99003a 590px,#990038 600px)"></i><i style="top:232px;height:4px;background:linear-gradient(90deg,#004399 0px,#004199 10px,#003f99 20px,#003d99 30px,#003b99 40px,#003999 50px,#003799 60px,#003599 70px,#003399 80px,#003199 90px,#002f99 100px,#002c99 110px,#002a99 120px,#002899 130px,#002699 140px,#002399 150px,#032199 160px,#0d1f99 170px,#171c99 180px,#201a99 190px,#291799 200px,#321599 210px,#3a1299 220px,#430f99 230px,#4b0c99 240px,#540a99 250px,#5d0699 260px,#650399 270px,#6e0099 280px,#760099 290px,#7f0099 300px,#870099 310px,#900099 320px,#990099 330px,#990091 340px,#99008a 350px,#990083 360px,#99007d 370px,#990077 380px,#990072 390px,#99006d 400px,#990069 410px,#990065 420px,#990061 430px,#99005d 440px,#99005a 450px,#990057 460px,#990054 470px,#990051 480px,#99004f 490px,#99004c 500px,#99004a 510px,#990048 520px,#990046 530px,#990044 540px,#990042 550px,#990040 560px,#99003e 570px,#99003d 580px,#99003b 590px,#99003a 600px)"></i><i style="top:236px;height:4px;background:linear-gradient(90deg,#004199 0px,#003f99 10px,#003d99 20px,#003b99 30px,#003999 40px,#003799 50px,#003599 60px,#003399 70px,#003199 80px,#002f99 90px,#002d99 100px,#002b99 110px,#002999 120px,#002699 130px,#002499 140px,#002299 150px,#021f99 160px,#0c1d99 170px,#161b99 180px,#1f1899 190px,#271699 200px,#301399 210px,#391199 220px,#410e99 230px,#4a0b99 240px,#520899 250px,#5a0599 260px,#630299 270px,#6b0099 280px,#730099 290px,#7c0099 300px,#840099 310px,#8d0099 320px,#950099 330px,#990094 340px,#99008d 350px,#990086 360px,#990080 370px,#99007a 380px,#990075 390px,#990070 400px,#99006b 410px,#990067 420px,#990063 430px,#990060 440px,#99005c 450px,#990059 460px,#990056 470px,#990053 480px,#990051 490px,#99004e 500px,#99004c 510px,#990049 520px,#990047 530px,#990045 540px,#990043 550px,#990042 560px,#990040 570px,#99003e 580px,#99003d 590px,#99003b 600px)"></i><i style="top:240px;height:4px;background:linear-gradient(90deg,#003f99 0px,#003d99 10px,#003b99 20px,#003999 30px,#003799 40px,#003599 50px,#003399 60px,#003199 70px,#002f99 80px,#002d99 90px,#002b99 100px,#002999 110px,#002799 120px,#002599 130px,#002399 140px,#002099 150px,#011e99 160px,#0c1c99 170px,#151999 180px,#1e1799 190px,#261499 200px,#2f1299 210px,#370f99 220px,#3f0d99 230px,#480a99 240px,#500799 250px,#580499 260px,#600099 270px,#690099 280px,#710099 290px,#790099 300px,#810099 310px,#8a0099 320px,#920099 330px,#990098 340px,#990090 350px,#990089 360px,#990083 370px,#99007d 380px,#990077 390px,#990072 400px,#99006e 410px,#990069 420px,#990065 430px,#990062 440px,#99005e 450px,#99005b 460px,#990058 470px,#990055 480px,#990052 490px,#990050 500px,#99004d 510px,#99004b 520px,#990049 530px,#990047 540px,#990045 550px,#990043 560px,#990041 570px,#990040 580px,#99003e 590px,#99003c 600px)"></i><i style="top:244px;height:4px;background:linear-gradient(90deg,#003d99 0px,#003b99 10px,#003a99 20px,#003899 30px,#003699 40px,#003499 50px,#003299 60px,#003099 70px,#002e99 80px,#002c99 90px,#002a99 100px,#002899 110px,#002599 120px,#002399 130px,#002199 140px,#001f99 150px,#011d99 160px,#0b1a99 170px,#141899 180px,#1d1599 190px,#251399 200px,#2d1099 210px,#360e99 220px,#3e0b99 230px,#460899 240px,#4e0699 250px,#560299 260px,#5e0099 270px,#660099 280px,#6e0099 290px,#760099 300px,#7e0099 310px,#870099 320px,#8f0099 330px,#970099 340px,#990093 350px,#99008c 360px,#990085 370px,#99007f 380px,#99007a 390px,#990075 400px,#990070 410px,#99006c 420px,#990068 430px,#990064 440px,#990060 450px,#99005d 460px,#99005a 470px,#990057 480px,#990054 490px,#990052 500px,#99004f 510px,#99004d 520px,#99004b 530px,#990048 540px,#990046 550px,#990045 560px,#990043 570px,#990041 580px,#99003f 590px,#99003e 600px)"></i><i style="top:248px;height:4px;background:linear-gradient(90deg,#003b99 0px,#003a99 10px,#003899 20px,#003699 30px,#003499 40px,#003299 50px,#003099 60px,#002e99 70px,#002c99 80px,#002a99 90px,#002899 100px,#002699 110px,#002499 120px,#002299 130px,#002099 140px,#001d99 150px,#001b99 160px,#0a1999 170px,#131799 180px,#1c1499 190px,#241299 200px,#2c0f99 210px,#340d99 220px,#3c0a99 230px,#440799 240px,#4c0499 250px,#540199 260px,#5c0099 270px,#640099 280px,#6c0099 290px,#740099 300px,#7c0099 310px,#840099 320px,#8c0099 330px,#940099 340px,#990096 350px,#99008f 360px,#990088 370px,#990082 380px,#99007c 390px,#990077 400px,#990072 410px,#99006e 420px,#99006a 430px,#990066 440px,#990062 450px,#99005f 460px,#99005c 470px,#990059 480px,#990056 490px,#990053 500px,#990051 510px,#99004e 520px,#99004c 530px,#99004a 540px,#990048 550px,#990046 560px,#990044 570px,#990042 580px,#990041 590px,#99003f 600px)"></i><i style="top:252px;height:4px;background:linear-gradient(90deg,#003a99 0px,#003899 10px,#003699 20px,#003499 30px,#003299 40px,#003199 50px,#002f99 60px,#002d99 70px,#002b99 80px,#002999 90px,#002799 100px,#002599 110px,#002299 120px,#002099 130px,#001e99 140px,#001c99 150px,#001a99 160px,#091899 170px,#121599 180px,#1b1399 190px,#231099 200px,#2b0e99 210px,#330b99 220px,#3b0999 230px,#430699 240px,#4a0399 250px,#520099 260px,#5a0099 270px,#620099 280px,#6a0099 290px,#710099 300px,#790099 310px,#810099 320px,#890099 330px,#910099 340px,#990099 350px,#990092 360px,#99008b 370px,#990085 380px,#99007f 390px,#99007a 400px,#990075 410px,#990070 420px,#99006c 430px,#990068 440px,#990064 450px,#990061 460px,#99005e 470px,#99005b 480px,#990058 490px,#990055 500px,#990053 510px,#990050 520px,#99004e 530px,#99004c 540px,#99004a 550px,#990048 560px,#990046 570px,#990044 580px,#990042 590px,#990040 600px)"></i><i style="top:256px;height:4px;background:linear-gradient(90deg,#003899 0px,#003699 10px,#003599 20px,#003399 30px,#003199 40px,#002f99 50px,#002d99 60px,#002b99 70px,#002999 80px,#002799 90px,#002599 100px,#002399 110px,#002199 120px,#001f99 130px,#001d99 140px,#001b99 150px,#001899 160px,#091699 170px,#111499 180px,#1a1299 190px,#220f99 200px,#2a0d99 210px,#320a99 220px,#390899 230px,#410599 240px,#490299 250px,#500099 260px,#580099 270px,#600099 280px,#670099 290px,#6f0099 300px,#770099 310px,#7e0099 320px,#860099 330px,#8e0099 340px,#950099 350px,#990095 360px,#99008e 370px,#990088 380px,#990082 390px,#99007c 400px,#990077 410px,#990073 420px,#99006e 430px,#99006a 440px,#990066 450px,#990063 460px,#990060 470px,#99005d 480px,#99005a 490px,#990057 500px,#990054 510px,#990052 520px,#99004f 530px,#99004d 540px,#99004b 550px,#990049 560px,#990047 570px,#990045 580px,#990044 590px,#990042 600px)"></i><i style="top:260px;height:4px;background:linear-gradient(90deg,#003799 0px,#003599 10px,#003399 20px,#003199 30px,#002f99 40px,#002d99 50px,#002c99 60px,#002a99 70px,#002899 80px,#002699 90px,#002499 100px,#002299 110px,#002099 120px,#001e99 130px,#001c99 140px,#001999 150px,#001799 160px,#081599 170px,#101399 180px,#191099 190px,#210e99 200px,#280c99 210px,#300999 220px,#380699 230px,#3f0499 240px,#470099 250px,#4f0099 260px,#560099 270px,#5e0099 280px,#650099 290px,#6d0099 300px,#740099 310px,#7c0099 320px,#830099 330px,#8b0099 340px,#920099 350px,#990098 360px,#990091 370px,#99008a 380px,#990084 390px,#99007f 400px,#99007a 410px,#990075 420px,#990070 430px,#99006c 440px,#990069 450px,#990065 460px,#990062 470px,#99005e 480px,#99005b 490px,#990059 500px,#990056 510px,#990053 520px,#990051 530px,#99004f 540px,#99004d 550px,#99004b 560px,#990049 570px,#990047 580px,#990045 590px,#990043 600px)"></i><i style="top:264px;height:4px;background:linear-gradient(90deg,#003599 0px,#003399 10px,#003199 20px,#003099 30px,#002e99 40px,#002c99 50px,#002a99 60px,#002899 70px,#002699 80px,#002499 90px,#002299 100px,#002099 110px,#001e99 120px,#001c99 130px,#001a99 140px,#001899 150px,#001699 160px,#071499 170px,#101199 180px,#180f99 190px,#200d99 200px,#270a99 210px,#2f0899 220px,#370599 230px,#3e0299 240px,#450099 250px,#4d0099 260px,#540099 270px,#5c0099 280px,#630099 290px,#6a0099 300px,#720099 310px,#790099 320px,#810099 330px,#880099 340px,#900099 350px,#970099 360px,#990094 370px,#99008d 380px,#990087 390px,#990081 400px,#99007c 410px,#990077 420px,#990073 430px,#99006f 440px,#99006b 450px,#990067 460px,#990064 470px,#990060 480px,#99005d 490px,#99005a 500px,#990058 510px,#990055 520px,#990053 530px,#990050 540px,#99004e 550px,#99004c 560px,#99004a 570px,#990048 580px,#990046 590px,#990045 600px)"></i><i style="top:268px;height:4px;background:linear-gradient(90deg,#003399 0px,#003299 10px,#003099 20px,#002e99 30px,#002c99 40px,#002b99 50px,#002999 60px,#002799 70px,#002599 80px,#002399 90px,#002199 100px,#001f99 110px,#001d99 120px,#001b99 130px,#001999 140px,#001799 150px,#001599 160px,#061399 170px,#0f1099 180px,#170e99 190px,#1f0c99 200px,#260999 210px,#2e0799 220px,#350499 230px,#3d0199 240px,#440099 250px,#4b0099 260px,#520099 270px,#5a0099 280px,#610099 290px,#680099 300px,#700099 310px,#770099 320px,#7e0099 330px,#850099 340px,#8d0099 350px,#940099 360px,#990097 370px,#990090 380px,#99008a 390px,#990084 400px,#99007e 410px,#99007a 420px,#990075 430px,#990071 440px,#99006d 450px,#990069 460px,#990065 470px,#990062 480px,#99005f 490px,#99005c 500px,#990059 510px,#990057 520px,#990054 530px,#990052 540px,#990050 550px,#99004e 560px,#99004c 570px,#99004a 580px,#990048 590px,#990046 600px)"></i><i style="top:272px;height:4px;background:linear-gradient(90deg,#003299 0px,#003099 10px,#002f99 20px,#002d99 30px,#002b99 40px,#002999 50px,#002799 60px,#002699 70px,#002499 80px,#002299 90px,#002099 100px,#001e99 110px,#001c99 120px,#001a99 130px,#001899 140px,#001699 150px,#001499 160px,#061199 170px,#0e0f99 180px,#160d99 190px,#1e0b99 200px,#250899 210px,#2d0699 220px,#340399 230px,#3b0099 240px,#420099 250px,#4a0099 260px,#510099 270px,#580099 280px,#5f0099 290px,#660099 300px,#6d0099 310px,#740099 320px,#7c0099 330px,#830099 340px,#8a0099 350px,#910099 360px,#980099 370px,#990093 380px,#99008c 390px,#990086 400px,#990081 410px,#99007c 420px,#990077 430px,#990073 440px,#99006f 450px,#99006b 460px,#990067 470px,#990064 480px,#990061 490px,#99005e 500px,#99005b 510px,#990058 520px,#990056 530px,#990054 540px,#990051 550px,#99004f 560px,#99004d 570px,#99004b 580px,#990049 590px,#990047 600px)"></i><i style="top:276px;height:4px;background:linear-gradient(90deg,#003199 0px,#002f99 10px,#002d99 20px,#002b99 30px,#002a99 40px,#002899 50px,#002699 60px,#002499 70px,#002299 80px,#002099 90px,#001f99 100px,#001d99 110px,#001b99 120px,#001999 130px,#001799 140px,#001599 150px,#001299 160px,#051099 170px,#0d0e99 180px,#150c99 190px,#1d0999 200px,#240799 210px,#2b0499 220px,#330299 230px,#3a0099 240px,#410099 250px,#480099 260px,#4f0099 270px,#560099 280px,#5d0099 290px,#640099 300px,#6b0099 310px,#720099 320px,#790099 330px,#800099 340px,#870099 350px,#8e0099 360px,#960099 370px,#990095 380px,#99008f 390px,#990089 400px,#990083 410px,#99007e 420px,#990079 430px,#990075 440px,#990071 450px,#99006d 460px,#990069 470px,#990066 480px,#990063 490px,#990060 500px,#99005d 510px,#99005a 520px,#990058 530px,#990055 540px,#990053 550px,#990051 560px,#99004e 570px,#99004c 580px,#99004b 590px,#990049 600px)"></i><i style="top:280px;height:4px;background:linear-gradient(90deg,#002f99 0px,#002e99 10px,#002c99 20px,#002a99 30px,#002899 40px,#002799 50px,#002599 60px,#002399 70px,#002199 80px,#001f99 90px,#001d99 100px,#001b99 110px,#001999 120px,#001799 130px,#001599 140px,#001399 150px,#001199 160px,#040f99 170px,#0d0d99 180px,#140b99 190px,#1c0899 200px,#230699 210px,#2a0399 220px,#310199 230px,#390099 240px,#400099 250px,#460099 260px,#4d0099 270px,#540099 280px,#5b0099 290px,#620099 300px,#690099 310px,#700099 320px,#770099 330px,#7e0099 340px,#850099 350px,#8c0099 360px,#930099 370px,#990098 380px,#990092 390px,#99008b 400px,#990086 410px,#990081 420px,#99007c 430px,#990077 440px,#990073 450px,#99006f 460px,#99006b 470px,#990068 480px,#990065 490px,#990062 500px,#99005f 510px,#99005c 520px,#990059 530px,#990057 540px,#990054 550px,#990052 560px,#990050 570px,#99004e 580px,#99004c 590px,#99004a 600px)"></i><i style="top:284px;height:4px;background:linear-gradient(90deg,#002e99 0px,#002c99 10px,#002b99 20px,#002999 30px,#002799 40px,#002599 50px,#002499 60px,#002299 70px,#002099 80px,#001e99 90px,#001c99 100px,#001a99 110px,#001899 120px,#001699 130px,#001499 140px,#001299 150px,#001099 160px,#040e99 170px,#0c0c99 180px,#140a99 190px,#1b0799 200px,#220599 210px,#290299 220px,#300099 230px,#370099 240px,#3e0099 250px,#450099 260px,#4c0099 270px,#530099 280px,#5a0099 290px,#600099 300px,#670099 310px,#6e0099 320px,#750099 330px,#7c0099 340px,#820099 350px,#890099 360px,#900099 370px,#970099 380px,#990094 390px,#99008e 400px,#990088 410px,#990083 420px,#99007e 430px,#990079 440px,#990075 450px,#990071 460px,#99006d 470px,#99006a 480px,#990066 490px,#990063 500px,#990060 510px,#99005e 520px,#99005b 530px,#990058 540px,#990056 550px,#990054 560px,#990051 570px,#99004f 580px,#99004d 590px,#99004b 600px)"></i><i style="top:288px;height:4px;background:linear-gradient(90deg,#002d99 0px,#002b99 10px,#002999 20px,#002899 30px,#002699 40px,#002499 50px,#002299 60px,#002199 70px,#001f99 80px,#001d99 90px,#001b99 100px,#001999 110px,#001799 120px,#001599 130px,#001399 140px,#001199 150px,#000f99 160px,#030d99 170px,#0b0b99 180px,#130999 190px,#1a0699 200px,#210499 210px,#280199 220px,#2f0099 230px,#360099 240px,#3d0099 250px,#440099 260px,#4a0099 270px,#510099 280px,#580099 290px,#5e0099 300px,#650099 310px,#6c0099 320px,#730099 330px,#790099 340px,#800099 350px,#870099 360px,#8e0099 370px,#940099 380px,#990097 390px,#990091 400px,#99008b 410px,#990085 420px,#990080 430px,#99007c 440px,#990077 450px,#990073 460px,#99006f 470px,#99006c 480px,#990068 490px,#990065 500px,#990062 510px,#99005f 520px,#99005c 530px,#99005a 540px,#990057 550px,#990055 560px,#990053 570px,#990051 580px,#99004f 590px,#99004d 600px)"></i><i style="top:292px;height:4px;background:linear-gradient(90deg,#002b99 0px,#002a99 10px,#002899 20px,#002699 30px,#002599 40px,#002399 50px,#002199 60px,#001f99 70px,#001e99 80px,#001c99 90px,#001a99 100px,#001899 110px,#001699 120px,#001499 130px,#001299 140px,#001099 150px,#000e99 160px,#030c99 170px,#0b0a99 180px,#120899 190px,#190599 200px,#200399 210px,#270099 220px,#2e0099 230px,#350099 240px,#3c0099 250px,#420099 260px,#490099 270px,#4f0099 280px,#560099 290px,#5d0099 300px,#630099 310px,#6a0099 320px,#710099 330px,#770099 340px,#7e0099 350px,#840099 360px,#8b0099 370px,#920099 380px,#980099 390px,#990093 400px,#99008d 410px,#990088 420px,#990083 430px,#99007e 440px,#990079 450px,#990075 460px,#990071 470px,#99006e 480px,#99006a 490px,#990067 500px,#990064 510px,#990061 520px,#99005e 530px,#99005c 540px,#990059 550px,#990057 560px,#990054 570px,#990052 580px,#990050 590px,#99004e 600px)"></i><i style="top:296px;height:4px;background:linear-gradient(90deg,#002a99 0px,#002899 10px,#002799 20px,#002599 30px,#002399 40px,#002299 50px,#002099 60px,#001e99 70px,#001c99 80px,#001b99 90px,#001999 100px,#001799 110px,#001599 120px,#001399 130px,#001199 140px,#000f99 150px,#000d99 160px,#020b99 170px,#0a0999 180px,#110799 190px,#190499 200px,#200299 210px,#260099 220px,#2d0099 230px,#340099 240px,#3a0099 250px,#410099 260px,#470099 270px,#4e0099 280px,#540099 290px,#5b0099 300px,#610099 310px,#680099 320px,#6f0099 330px,#750099 340px,#7c0099 350px,#820099 360px,#890099 370px,#8f0099 380px,#960099 390px,#990096 400px,#990090 410px,#99008a 420px,#990085 430px,#990080 440px,#99007b 450px,#990077 460px,#990073 470px,#99006f 480px,#99006c 490px,#990069 500px,#990066 510px,#990063 520px,#990060 530px,#99005d 540px,#99005b 550px,#990058 560px,#990056 570px,#990054 580px,#990052 590px,#990050 600px)"></i><i style="top:300px;height:4px;background:linear-gradient(90deg,#002999 0px,#002799 10px,#002699 20px,#002499 30px,#002299 40px,#002199 50px,#001f99 60px,#001d99 70px,#001b99 80px,#001a99 90px,#001899 100px,#001699 110px,#001499 120px,#001299 130px,#001099 140px,#000e99 150px,#000c99 160px,#010a99 170px,#090899 180px,#110699 190px,#180399 200px,#1f0199 210px,#250099 220px,#2c0099 230px,#330099 240px,#390099 250px,#400099 260px,#460099 270px,#4c0099 280px,#530099 290px,#590099 300px,#600099 310px,#660099 320px,#6d0099 330px,#730099 340px,#790099 350px,#800099 360px,#860099 370px,#8d0099 380px,#930099 390px,#990098 400px,#990092 410px,#99008c 420px,#990087 430px,#990082 440px,#99007e 450px,#990079 460px,#990075 470px,#990071 480px,#99006e 490px,#99006a 500px,#990067 510px,#990064 520px,#990061 530px,#99005f 540px,#99005c 550px,#99005a 560px,#990057 570px,#990055 580px,#990053 590px,#990051 600px)"></i><i style="top:304px;height:4px;background:linear-gradient(90deg,#002899 0px,#002699 10px,#002499 20px,#002399 30px,#002199 40px,#001f99 50px,#001e99 60px,#001c99 70px,#001a99 80px,#001899 90px,#001799 100px,#001599 110px,#001399 120px,#001199 130px,#000f99 140px,#000d99 150px,#000b99 160px,#010999 170px,#090799 180px,#100599 190px,#170299 200px,#1e0099 210px,#240099 220px,#2b0099 230px,#310099 240px,#380099 250px,#3e0099 260px,#450099 270px,#4b0099 280px,#510099 290px,#580099 300px,#5e0099 310px,#640099 320px,#6b0099 330px,#710099 340px,#770099 350px,#7e0099 360px,#840099 370px,#8a0099 380px,#910099 390px,#970099 400px,#990095 410px,#99008f 420px,#990089 430px,#990084 440px,#990080 450px,#99007b 460px,#990077 470px,#990073 480px,#990070 490px,#99006c 500px,#990069 510px,#990066 520px,#990063 530px,#990060 540px,#99005e 550px,#99005b 560px,#990059 570px,#990057 580px,#990054 590px,#990052 600px)"></i><i style="top:308px;height:4px;background:linear-gradient(90deg,#002699 0px,#002599 10px,#002399 20px,#002299 30px,#002099 40px,#001e99 50px,#001d99 60px,#001b99 70px,#001999 80px,#001799 90px,#001699 100px,#001499 110px,#001299 120px,#001099 130px,#000e99 140px,#000c99 150px,#000a99 160px,#000899 170px,#080699 180px,#0f0499 190px,#160199 200px,#1d0099 210px,#240099 220px,#2a0099 230px,#300099 240px,#370099 250px,#3d0099 260px,#430099 270px,#4a0099 280px,#500099 290px,#560099 300px,#5c0099 310px,#630099 320px,#690099 330px,#6f0099 340px,#750099 350px,#7b0099 360px,#820099 370px,#880099 380px,#8e0099 390px,#950099 400px,#990097 410px,#990091 420px,#99008c 430px,#990087 440px,#990082 450px,#99007d 460px,#990079 470px,#990075 480px,#990072 490px,#99006e 500px,#99006b 510px,#990068 520px,#990065 530px,#990062 540px,#99005f 550px,#99005d 560px,#99005a 570px,#990058 580px,#990056 590px,#990054 600px)"></i><i style="top:312px;height:4px;background:linear-gradient(90deg,#002599 0px,#002499 10px,#002299 20px,#002199 30px,#001f99 40px,#001d99 50px,#001c99 60px,#001a99 70px,#001899 80px,#001699 90px,#001599 100px,#001399 110px,#001199 120px,#000f99 130px,#000d99 140px,#000b99 150px,#000999 160px,#000799 170px,#080599 180px,#0f0399 190px,#160099 200px,#1c0099 210px,#230099 220px,#290099 230px,#2f0099 240px,#360099 250px,#3c0099 260px,#420099 270px,#480099 280px,#4e0099 290px,#550099 300px,#5b0099 310px,#610099 320px,#670099 330px,#6d0099 340px,#730099 350px,#790099 360px,#800099 370px,#860099 380px,#8c0099 390px,#920099 400px,#980099 410px,#990094 420px,#99008e 430px,#990089 440px,#990084 450px,#99007f 460px,#99007b 470px,#990077 480px,#990073 490px,#990070 500px,#99006d 510px,#990069 520px,#990066 530px,#990064 540px,#990061 550px,#99005e 560px,#99005c 570px,#99005a 580px,#990057 590px,#990055 600px)"></i><i style="top:316px;height:4px;background:linear-gradient(90deg,#002499 0px,#002399 10px,#002199 20px,#002099 30px,#001e99 40px,#001c99 50px,#001b99 60px,#001999 70px,#001799 80px,#001599 90px,#001499 100px,#001299 110px,#001099 120px,#000e99 130px,#000c99 140px,#000a99 150px,#000899 160px,#000699 170px,#070499 180px,#0e0299 190px,#150099 200px,#1b0099 210px,#220099 220px,#280099 230px,#2e0099 240px,#350099 250px,#3b0099 260px,#410099 270px,#470099 280px,#4d0099 290px,#530099 300px,#590099 310px,#5f0099 320px,#650099 330px,#6b0099 340px,#710099 350px,#770099 360px,#7d0099 370px,#840099 380px,#8a0099 390px,#900099 400px,#960099 410px,#990096 420px,#990090 430px,#99008b 440px,#990086 450px,#990081 460px,#99007d 470px,#990079 480px,#990075 490px,#990072 500px,#99006e 510px,#99006b 520px,#990068 530px,#990065 540px,#990062 550px,#990060 560px,#99005d 570px,#99005b 580px,#990059 590px,#990057 600px)"></i><i style="top:320px;height:4px;background:linear-gradient(90deg,#002399 0px,#002299 10px,#002099 20px,#001e99 30px,#001d99 40px,#001b99 50px,#001a99 60px,#001899 70px,#001699 80px,#001499 90px,#001399 100px,#001199 110px,#000f99 120px,#000d99 130px,#000b99 140px,#000999 150px,#000799 160px,#000599 170px,#070399 180px,#0e0199 190px,#140099 200px,#1b0099 210px,#210099 220px,#270099 230px,#2d0099 240px,#330099 250px,#3a0099 260px,#400099 270px,#460099 280px,#4c0099 290px,#520099 300px,#580099 310px,#5e0099 320px,#640099 330px,#6a0099 340px,#6f0099 350px,#750099 360px,#7b0099 370px,#810099 380px,#870099 390px,#8d0099 400px,#940099 410px,#990098 420px,#990093 430px,#99008d 440px,#990088 450px,#990084 460px,#99007f 470px,#99007b 480px,#990077 490px,#990074 500px,#990070 510px,#99006d 520px,#99006a 530px,#990067 540px,#990064 550px,#990061 560px,#99005f 570px,#99005c 580px,#99005a 590px,#990058 600px)"></i><i style="top:324px;height:4px;background:linear-gradient(90deg,#002299 0px,#002199 10px,#001f99 20px,#001d99 30px,#001c99 40px,#001a99 50px,#001999 60px,#001799 70px,#001599 80px,#001499 90px,#001299 100px,#001099 110px,#000e99 120px,#000c99 130px,#000a99 140px,#000899 150px,#000699 160px,#000499 170px,#060299 180px,#0d0099 190px,#140099 200px,#1a0099 210px,#200099 220px,#260099 230px,#2c0099 240px,#320099 250px,#380099 260px,#3e0099 270px,#440099 280px,#4a0099 290px,#500099 300px,#560099 310px,#5c0099 320px,#620099 330px,#680099 340px,#6e0099 350px,#740099 360px,#790099 370px,#7f0099 380px,#850099 390px,#8b0099 400px,#910099 410px,#970099 420px,#990095 430px,#99008f 440px,#99008a 450px,#990086 460px,#990081 470px,#99007d 480px,#990079 490px,#990075 500px,#990072 510px,#99006f 520px,#99006b 530px,#990068 540px,#990066 550px,#990063 560px,#990060 570px,#99005e 580px,#99005c 590px,#990059 600px)"></i><i style="top:328px;height:4px;background:linear-gradient(90deg,#002199 0px,#002099 10px,#001e99 20px,#001c99 30px,#001b99 40px,#001999 50px,#001899 60px,#001699 70px,#001499 80px,#001399 90px,#001199 100px,#000f99 110px,#000d99 120px,#000b99 130px,#000a99 140px,#000899 150px,#000699 160px,#000399 170px,#050199 180px,#0c0099 190px,#130099 200px,#190099 210px,#1f0099 220px,#250099 230px,#2b0099 240px,#310099 250px,#370099 260px,#3d0099 270px,#430099 280px,#490099 290px,#4f0099 300px,#550099 310px,#5a0099 320px,#600099 330px,#660099 340px,#6c0099 350px,#720099 360px,#780099 370px,#7d0099 380px,#830099 390px,#890099 400px,#8f0099 410px,#950099 420px,#990097 430px,#990092 440px,#99008d 450px,#990088 460px,#990083 470px,#99007f 480px,#99007b 490px,#990077 500px,#990074 510px,#990070 520px,#99006d 530px,#99006a 540px,#990067 550px,#990064 560px,#990062 570px,#99005f 580px,#99005d 590px,#99005b 600px)"></i><i style="top:332px;height:4px;background:linear-gradient(90deg,#002099 0px,#001f99 10px,#001d99 20px,#001b99 30px,#001a99 40px,#001899 50px,#001799 60px,#001599 70px,#001399 80px,#001299 90px,#001099 100px,#000e99 110px,#000c99 120px,#000b99 130px,#000999 140px,#000799 150px,#000599 160px,#000399 170px,#050099 180px,#0c0099 190px,#120099 200px,#190099 210px,#1f0099 220px,#250099 230px,#2b0099 240px,#300099 250px,#360099 260px,#3c0099 270px,#420099 280px,#480099 290px,#4d0099 300px,#530099 310px,#590099 320px,#5f0099 330px,#640099 340px,#6a0099 350px,#700099 360px,#760099 370px,#7b0099 380px,#810099 390px,#870099 400px,#8d0099 410px,#930099 420px,#980099 430px,#990094 440px,#99008f 450px,#99008a 460px,#990085 470px,#990081 480px,#99007d 490px,#990079 500px,#990075 510px,#990072 520px,#99006f 530px,#99006c 540px,#990069 550px,#990066 560px,#990063 570px,#990061 580px,#99005e 590px,#99005c 600px)"></i><i style="top:336px;height:4px;background:linear-gradient(90deg,#001f99 0px,#001e99 10px,#001c99 20px,#001b99 30px,#001999 40px,#001799 50px,#001699 60px,#001499 70px,#001299 80px,#001199 90px,#000f99 100px,#000d99 110px,#000c99 120px,#000a99 130px,#000899 140px,#000699 150px,#000499 160px,#000299 170px,#040099 180px,#0b0099 190px,#120099 200px,#180099 210px,#1e0099 220px,#240099 230px,#2a0099 240px,#300099 250px,#350099 260px,#3b0099 270px,#410099 280px,#460099 290px,#4c0099 300px,#520099 310px,#580099 320px,#5d0099 330px,#630099 340px,#680099 350px,#6e0099 360px,#740099 370px,#7a0099 380px,#7f0099 390px,#850099 400px,#8b0099 410px,#900099 420px,#960099 430px,#990096 440px,#990091 450px,#99008c 460px,#990087 470px,#990083 480px,#99007f 490px,#99007b 500px,#990077 510px,#990074 520px,#990070 530px,#99006d 540px,#99006a 550px,#990068 560px,#990065 570px,#990062 580px,#990060 590px,#99005e 600px)"></i><i style="top:340px;height:4px;background:linear-gradient(90deg,#001e99 0px,#001d99 10px,#001b99 20px,#001a99 30px,#001899 40px,#001699 50px,#001599 60px,#001399 70px,#001299 80px,#001099 90px,#000e99 100px,#000c99 110px,#000b99 120px,#000999 130px,#000799 140px,#000599 150px,#000399 160px,#000199 170px,#040099 180px,#0b0099 190px,#110099 200px,#170099 210px,#1d0099 220px,#230099 230px,#290099 240px,#2f0099 250px,#340099 260px,#3a0099 270px,#400099 280px,#450099 290px,#4b0099 300px,#500099 310px,#560099 320px,#5c0099 330px,#610099 340px,#670099 350px,#6c0099 360px,#720099 370px,#780099 380px,#7d0099 390px,#830099 400px,#890099 410px,#8e0099 420px,#940099 430px,#990099 440px,#990093 450px,#99008e 460px,#990089 470px,#990085 480px,#990081 490px,#99007d 500px,#990079 510px,#990075 520px,#990072 530px,#99006f 540px,#99006c 550px,#990069 560px,#990066 570px,#990064 580px,#990061 590px,#99005f 600px)"></i><i style="top:344px;height:4px;background:linear-gradient(90deg,#001d99 0px,#001c99 10px,#001a99 20px,#001999 30px,#001799 40px,#001699 50px,#001499 60px,#001299 70px,#001199 80px,#000f99 90px,#000d99 100px,#000c99 110px,#000a99 120px,#000899 130px,#000699 140px,#000499 150px,#000299 160px,#000099 170px,#030099 180px,#0a0099 190px,#100099 200px,#170099 210px,#1c0099 220px,#220099 230px,#280099 240px,#2e0099 250px,#330099 260px,#390099 270px,#3f0099 280px,#440099 290px,#4a0099 300px,#4f0099 310px,#550099 320px,#5a0099 330px,#600099 340px,#650099 350px,#6b0099 360px,#700099 370px,#760099 380px,#7b0099 390px,#810099 400px,#860099 410px,#8c0099 420px,#920099 430px,#970099 440px,#990095 450px,#990090 460px,#99008b 470px,#990087 480px,#990083 490px,#99007f 500px,#99007b 510px,#990077 520px,#990074 530px,#990071 540px,#99006e 550px,#99006b 560px,#990068 570px,#990065 580px,#990063 590px,#990060 600px)"></i><i style="top:348px;height:4px;background:linear-gradient(90deg,#001c99 0px,#001b99 10px,#001999 20px,#001899 30px,#001699 40px,#001599 50px,#001399 60px,#001299 70px,#001099 80px,#000e99 90px,#000d99 100px,#000b99 110px,#000999 120px,#000799 130px,#000599 140px,#000399 150px,#000199 160px,#000099 170px,#030099 180px,#0a0099 190px,#100099 200px,#160099 210px,#1c0099 220px,#210099 230px,#270099 240px,#2d0099 250px,#320099 260px,#380099 270px,#3d0099 280px,#430099 290px,#480099 300px,#4e0099 310px,#530099 320px,#590099 330px,#5e0099 340px,#640099 350px,#690099 360px,#6f0099 370px,#740099 380px,#7a0099 390px,#7f0099 400px,#850099 410px,#8a0099 420px,#8f0099 430px,#950099 440px,#990097 450px,#990092 460px,#99008d 470px,#990089 480px,#990084 490px,#990080 500px,#99007d 510px,#990079 520px,#990075 530px,#990072 540px,#99006f 550px,#99006c 560px,#990069 570px,#990067 580px,#990064 590px,#990062 600px)"></i><i style="top:352px;height:4px;background:linear-gradient(90deg,#001b99 0px,#001a99 10px,#001899 20px,#001799 30px,#001599 40px,#001499 50px,#001299 60px,#001199 70px,#000f99 80px,#000d99 90px,#000c99 100px,#000a99 110px,#000899 120px,#000699 130px,#000499 140px,#000299 150px,#000099 160px,#000099 170px,#020099 180px,#090099 190px,#0f0099 200px,#150099 210px,#1b0099 220px,#210099 230px,#260099 240px,#2c0099 250px,#310099 260px,#370099 270px,#3c0099 280px,#420099 290px,#470099 300px,#4d0099 310px,#520099 320px,#570099 330px,#5d0099 340px,#620099 350px,#680099 360px,#6d0099 370px,#720099 380px,#780099 390px,#7d0099 400px,#830099 410px,#880099 420px,#8d0099 430px,#930099 440px,#980099 450px,#990094 460px,#99008f 470px,#99008b 480px,#990086 490px,#990082 500px,#99007e 510px,#99007b 520px,#990077 530px,#990074 540px,#990071 550px,#99006e 560px,#99006b 570px,#990068 580px,#990066 590px,#990063 600px)"></i><i style="top:356px;height:4px;background:linear-gradient(90deg,#001b99 0px,#001999 10px,#001899 20px,#001699 30px,#001599 40px,#001399 50px,#001199 60px,#001099 70px,#000e99 80px,#000d99 90px,#000b99 100px,#000999 110px,#000799 120px,#000699 130px,#000499 140px,#000299 150px,#000099 160px,#000099 170px,#020099 180px,#090099 190px,#0f0099 200px,#150099 210px,#1a0099 220px,#200099 230px,#260099 240px,#2b0099 250px,#310099 260px,#360099 270px,#3b0099 280px,#410099 290px,#460099 300px,#4b0099 310px,#510099 320px,#560099 330px,#5b0099 340px,#610099 350px,#660099 360px,#6b0099 370px,#710099 380px,#760099 390px,#7b0099 400px,#810099 410px,#860099 420px,#8b0099 430px,#910099 440px,#960099 450px,#990096 460px,#990091 470px,#99008d 480px,#990088 490px,#990084 500px,#990080 510px,#99007c 520px,#990079 530px,#990075 540px,#990072 550px,#99006f 560px,#99006c 570px,#99006a 580px,#990067 590px,#990065 600px)"></i><i style="top:360px;height:4px;background:linear-gradient(90deg,#001a99 0px,#001899 10px,#001799 20px,#001599 30px,#001499 40px,#001299 50px,#001199 60px,#000f99 70px,#000d99 80px,#000c99 90px,#000a99 100px,#000899 110px,#000799 120px,#000599 130px,#000399 140px,#000199 150px,#000099 160px,#000099 170px,#010099 180px,#080099 190px,#0e0099 200px,#140099 210px,#1a0099 220px,#1f0099 230px,#250099 240px,#2a0099 250px,#300099 260px,#350099 270px,#3a0099 280px,#400099 290px,#450099 300px,#4a0099 310px,#500099 320px,#550099 330px,#5a0099 340px,#5f0099 350px,#650099 360px,#6a0099 370px,#6f0099 380px,#740099 390px,#7a0099 400px,#7f0099 410px,#840099 420px,#890099 430px,#8f0099 440px,#940099 450px,#990099 460px,#990093 470px,#99008f 480px,#99008a 490px,#990086 500px,#990082 510px,#99007e 520px,#99007b 530px,#990077 540px,#990074 550px,#990071 560px,#99006e 570px,#99006b 580px,#990069 590px,#990066 600px)"></i><i style="top:364px;height:4px;background:linear-gradient(90deg,#001999 0px,#001799 10px,#001699 20px,#001499 30px,#001399 40px,#001199 50px,#001099 60px,#000e99 70px,#000d99 80px,#000b99 90px,#000999 100px,#000899 110px,#000699 120px,#000499 130px,#000299 140px,#000099 150px,#000099 160px,#000099 170px,#010099 180px,#080099 190px,#0e0099 200px,#130099 210px,#190099 220px,#1f0099 230px,#240099 240px,#290099 250px,#2f0099 260px,#340099 270px,#390099 280px,#3f0099 290px,#440099 300px,#490099 310px,#4e0099 320px,#530099 330px,#590099 340px,#5e0099 350px,#630099 360px,#680099 370px,#6d0099 380px,#730099 390px,#780099 400px,#7d0099 410px,#820099 420px,#880099 430px,#8d0099 440px,#920099 450px,#970099 460px,#990096 470px,#990091 480px,#99008c 490px,#990088 500px,#990084 510px,#990080 520px,#99007c 530px,#990079 540px,#990076 550px,#990072 560px,#99006f 570px,#99006d 580px,#99006a 590px,#990067 600px)"></i><i style="top:368px;height:4px;background:linear-gradient(90deg,#001899 0px,#001799 10px,#001599 20px,#001499 30px,#001299 40px,#001199 50px,#000f99 60px,#000d99 70px,#000c99 80px,#000a99 90px,#000999 100px,#000799 110px,#000599 120px,#000399 130px,#000199 140px,#000099 150px,#000099 160px,#000099 170px,#000099 180px,#070099 190px,#0d0099 200px,#130099 210px,#180099 220px,#1e0099 230px,#230099 240px,#290099 250px,#2e0099 260px,#330099 270px,#380099 280px,#3e0099 290px,#430099 300px,#480099 310px,#4d0099 320px,#520099 330px,#570099 340px,#5d0099 350px,#620099 360px,#670099 370px,#6c0099 380px,#710099 390px,#760099 400px,#7b0099 410px,#800099 420px,#860099 430px,#8b0099 440px,#900099 450px,#950099 460px,#990098 470px,#990093 480px,#99008e 490px,#99008a 500px,#990086 510px,#990082 520px,#99007e 530px,#99007a 540px,#990077 550px,#990074 560px,#990071 570px,#99006e 580px,#99006b 590px,#990069 600px)"></i><i style="top:372px;height:4px;background:linear-gradient(90deg,#001799 0px,#001699 10px,#001499 20px,#001399 30px,#001199 40px,#001099 50px,#000e99 60px,#000d99 70px,#000b99 80px,#000999 90px,#000899 100px,#000699 110px,#000499 120px,#000299 130px,#000099 140px,#000099 150px,#000099 160px,#000099 170px,#000099 180px,#070099 190px,#0d0099 200px,#120099 210px,#180099 220px,#1d0099 230px,#230099 240px,#280099 250px,#2d0099 260px,#320099 270px,#370099 280px,#3d0099 290px,#420099 300px,#470099 310px,#4c0099 320px,#510099 330px,#560099 340px,#5b0099 350px,#600099 360px,#650099 370px,#6a0099 380px,#6f0099 390px,#750099 400px,#7a0099 410px,#7f0099 420px,#840099 430px,#890099 440px,#8e0099 450px,#930099 460px,#980099 470px,#990095 480px,#990090 490px,#99008c 500px,#990087 510px,#990083 520px,#990080 530px,#99007c 540px,#990079 550px,#990076 560px,#990073 570px,#990070 580px,#99006d 590px,#99006a 600px)"></i><i style="top:376px;height:4px;background:linear-gradient(90deg,#001699 0px,#001599 10px,#001399 20px,#001299 30px,#001199 40px,#000f99 50px,#000d99 60px,#000c99 70px,#000a99 80px,#000999 90px,#000799 100px,#000599 110px,#000499 120px,#000299 130px,#000099 140px,#000099 150px,#000099 160px,#000099 170px,#000099 180px,#060099 190px,#0c0099 200px,#120099 210px,#170099 220px,#1d0099 230px,#220099 240px,#270099 250px,#2c0099 260px,#310099 270px,#370099 280px,#3c0099 290px,#410099 300px,#460099 310px,#4b0099 320px,#500099 330px,#550099 340px,#5a0099 350px,#5f0099 360px,#640099 370px,#690099 380px,#6e0099 390px,#730099 400px,#780099 410px,#7d0099 420px,#820099 430px,#870099 440px,#8c0099 450px,#910099 460px,#960099 470px,#990097 480px,#990092 490px,#99008d 500px,#990089 510px,#990085 520px,#990081 530px,#99007e 540px,#99007a 550px,#990077 560px,#990074 570px,#990071 580px,#99006e 590px,#99006c 600px)"></i><i style="top:380px;height:4px;background:linear-gradient(90deg,#001699 0px,#001499 10px,#001399 20px,#001199 30px,#001099 40px,#000e99 50px,#000d99 60px,#000b99 70px,#000a99 80px,#000899 90px,#000699 100px,#000599 110px,#000399 120px,#000199 130px,#000099 140px,#000099 150px,#000099 160px,#000099 170px,#000099 180px,#060099 190px,#0c0099 200px,#110099 210px,#170099 220px,#1c0099 230px,#210099 240px,#260099 250px,#2c0099 260px,#310099 270px,#360099 280px,#3b0099 290px,#400099 300px,#450099 310px,#4a0099 320px,#4f0099 330px,#540099 340px,#590099 350px,#5e0099 360px,#620099 370px,#670099 380px,#6c0099 390px,#710099 400px,#760099 410px,#7b0099 420px,#800099 430px,#850099 440px,#8a0099 450px,#8f0099 460px,#940099 470px,#990099 480px,#990094 490px,#99008f 500px,#99008b 510px,#990087 520px,#990083 530px,#99007f 540px,#99007c 550px,#990079 560px,#990076 570px,#990073 580px,#990070 590px,#99006d 600px)"></i><i style="top:384px;height:4px;background:linear-gradient(90deg,#001599 0px,#001399 10px,#001299 20px,#001099 30px,#000f99 40px,#000e99 50px,#000c99 60px,#000a99 70px,#000999 80px,#000799 90px,#000699 100px,#000499 110px,#000299 120px,#000099 130px,#000099 140px,#000099 150px,#000099 160px,#000099 170px,#000099 180px,#050099 190px,#0b0099 200px,#110099 210px,#160099 220px,#1b0099 230px,#210099 240px,#260099 250px,#2b0099 260px,#300099 270px,#350099 280px,#3a0099 290px,#3f0099 300px,#440099 310px,#490099 320px,#4d0099 330px,#520099 340px,#570099 350px,#5c0099 360px,#610099 370px,#660099 380px,#6b0099 390px,#700099 400px,#750099 410px,#7a0099 420px,#7f0099 430px,#830099 440px,#880099 450px,#8d0099 460px,#920099 470px,#970099 480px,#990096 490px,#990091 500px,#99008d 510px,#990089 520px,#990085 530px,#990081 540px,#99007e 550px,#99007a 560px,#990077 570px,#990074 580px,#990071 590px,#99006f 600px)"></i><i style="top:388px;height:4px;background:linear-gradient(90deg,#001499 0px,#001399 10px,#001199 20px,#001099 30px,#000e99 40px,#000d99 50px,#000b99 60px,#000a99 70px,#000899 80px,#000799 90px,#000599 100px,#000399 110px,#000199 120px,#000099 130px,#000099 140px,#000099 150px,#000099 160px,#000099 170px,#000099 180px,#050099 190px,#0b0099 200px,#100099 210px,#160099 220px,#1b0099 230px,#200099 240px,#250099 250px,#2a0099 260px,#2f0099 270px,#340099 280px,#390099 290px,#3e0099 300px,#430099 310px,#480099 320px,#4c0099 330px,#510099 340px,#560099 350px,#5b0099 360px,#600099 370px,#650099 380px,#690099 390px,#6e0099 400px,#730099 410px,#780099 420px,#7d0099 430px,#820099 440px,#870099 450px,#8c0099 460px,#900099 470px,#950099 480px,#990098 490px,#990093 500px,#99008f 510px,#99008a 520px,#990087 530px,#990083 540px,#99007f 550px,#99007c 560px,#990079 570px,#990076 580px,#990073 590px,#990070 600px)"></i><i style="top:392px;height:4px;background:linear-gradient(90deg,#001399 0px,#001299 10px,#001099 20px,#000f99 30px,#000e99 40px,#000c99 50px,#000b99 60px,#000999 70px,#000799 80px,#000699 90px,#000499 100px,#000299 110px,#000099 120px,#000099 130px,#000099 140px,#000099 150px,#000099 160px,#000099 170px,#000099 180px,#040099 190px,#0a0099 200px,#100099 210px,#150099 220px,#1a0099 230px,#1f0099 240px,#240099 250px,#290099 260px,#2e0099 270px,#330099 280px,#380099 290px,#3d0099 300px,#420099 310px,#460099 320px,#4b0099 330px,#500099 340px,#550099 350px,#5a0099 360px,#5e0099 370px,#630099 380px,#680099 390px,#6d0099 400px,#720099 410px,#760099 420px,#7b0099 430px,#800099 440px,#850099 450px,#8a0099 460px,#8f0099 470px,#930099 480px,#980099 490px,#990095 500px,#990090 510px,#99008c 520px,#990088 530px,#990084 540px,#990081 550px,#99007d 560px,#99007a 570px,#990077 580px,#990074 590px,#990071 600px)"></i><i style="top:396px;height:4px;background:linear-gradient(90deg,#001299 0px,#001199 10px,#001099 20px,#000e99 30px,#000d99 40px,#000b99 50px,#000a99 60px,#000899 70px,#000799 80px,#000599 90px,#000399 100px,#000299 110px,#000099 120px,#000099 130px,#000099 140px,#000099 150px,#000099 160px,#000099 170px,#000099 180px,#040099 190px,#0a0099 200px,#0f0099 210px,#140099 220px,#1a0099 230px,#1f0099 240px,#240099 250px,#280099 260px,#2d0099 270px,#320099 280px,#370099 290px,#3c0099 300px,#410099 310px,#450099 320px,#4a0099 330px,#4f0099 340px,#540099 350px,#580099 360px,#5d0099 370px,#620099 380px,#670099 390px,#6b0099 400px,#700099 410px,#750099 420px,#7a0099 430px,#7e0099 440px,#830099 450px,#880099 460px,#8d0099 470px,#920099 480px,#960099 490px,#990097 500px,#990092 510px,#99008e 520px,#99008a 530px,#990086 540px,#990083 550px,#99007f 560px,#99007c 570px,#990079 580px,#990076 590px,#990073 600px)"></i><i style="top:400px;height:4px;background:linear-gradient(90deg,#001299 0px,#001099 10px,#000f99 20px,#000e99 30px,#000c99 40px,#000b99 50px,#000999 60px,#000899 70px,#000699 80px,#000499 90px,#000399 100px,#000199 110px,#000099 120px,#000099 130px,#000099 140px,#000099 150px,#000099 160px,#000099 170px,#000099 180px,#030099 190px,#090099 200px,#0f0099 210px,#140099 220px,#190099 230px,#1e0099 240px,#230099 250px,#280099 260px,#2d0099 270px,#310099 280px,#360099 290px,#3b0099 300px,#400099 310px,#440099 320px,#490099 330px,#4e0099 340px,#530099 350px,#570099 360px,#5c0099 370px,#610099 380px,#650099 390px,#6a0099 400px,#6f0099 410px,#730099 420px,#780099 430px,#7d0099 440px,#820099 450px,#860099 460px,#8b0099 470px,#900099 480px,#940099 490px,#990099 500px,#990094 510px,#990090 520px,#99008c 530px,#990088 540px,#990084 550px,#990081 560px,#99007d 570px,#99007a 580px,#990077 590px,#990074 600px)"></i><i style="top:404px;height:4px;background:linear-gradient(90deg,#001199 0px,#001099 10px,#000e99 20px,#000d99 30px,#000b99 40px,#000a99 50px,#000899 60px,#000799 70px,#000599 80px,#000499 90px,#000299 100px,#000099 110px,#000099 120px,#000099 130px,#000099 140px,#000099 150px,#000099 160px,#000099 170px,#000099 180px,#030099 190px,#090099 200px,#0e0099 210px,#130099 220px,#180099 230px,#1d0099 240px,#220099 250px,#270099 260px,#2c0099 270px,#310099 280px,#350099 290px,#3a0099 300px,#3f0099 310px,#430099 320px,#480099 330px,#4d0099 340px,#510099 350px,#560099 360px,#5b0099 370px,#5f0099 380px,#640099 390px,#690099 400px,#6d0099 410px,#720099 420px,#770099 430px,#7b0099 440px,#800099 450px,#850099 460px,#890099 470px,#8e0099 480px,#930099 490px,#970099 500px,#990096 510px,#990092 520px,#99008d 530px,#99008a 540px,#990086 550px,#990082 560px,#99007f 570px,#99007c 580px,#990079 590px,#990076 600px)"></i><i style="top:408px;height:4px;background:linear-gradient(90deg,#001099 0px,#000f99 10px,#000e99 20px,#000c99 30px,#000b99 40px,#000999 50px,#000899 60px,#000699 70px,#000599 80px,#000399 90px,#000199 100px,#000099 110px,#000099 120px,#000099 130px,#000099 140px,#000099 150px,#000099 160px,#000099 170px,#000099 180px,#030099 190px,#080099 200px,#0e0099 210px,#130099 220px,#180099 230px,#1d0099 240px,#220099 250px,#260099 260px,#2b0099 270px,#300099 280px,#350099 290px,#390099 300px,#3e0099 310px,#420099 320px,#470099 330px,#4c0099 340px,#500099 350px,#550099 360px,#5a0099 370px,#5e0099 380px,#630099 390px,#670099 400px,#6c0099 410px,#700099 420px,#750099 430px,#7a0099 440px,#7e0099 450px,#830099 460px,#880099 470px,#8c0099 480px,#910099 490px,#950099 500px,#990098 510px,#990093 520px,#99008f 530px,#99008b 540px,#990087 550px,#990084 560px,#990080 570px,#99007d 580px,#99007a 590px,#990077 600px)"></i><i style="top:412px;height:4px;background:linear-gradient(90deg,#001099 0px,#000e99 10px,#000d99 20px,#000c99 30px,#000a99 40px,#000999 50px,#000799 60px,#000699 70px,#000499 80px,#000299 90px,#000099 100px,#000099 110px,#000099 120px,#000099 130px,#000099 140px,#000099 150px,#000099 160px,#000099 170px,#000099 180px,#020099 190px,#080099 200px,#0d0099 210px,#120099 220px,#170099 230px,#1c0099 240px,#210099 250px,#260099 260px,#2a0099 270px,#2f0099 280px,#340099 290px,#380099 300px,#3d0099 310px,#420099 320px,#460099 330px,#4b0099 340px,#4f0099 350px,#540099 360px,#580099 370px,#5d0099 380px,#610099 390px,#660099 400px,#6b0099 410px,#6f0099 420px,#740099 430px,#780099 440px,#7d0099 450px,#810099 460px,#860099 470px,#8a0099 480px,#8f0099 490px,#940099 500px,#980099 510px,#990095 520px,#990091 530px,#99008d 540px,#990089 550px,#990085 560px,#990082 570px,#99007f 580px,#99007c 590px,#990079 600px)"></i><i style="top:416px;height:4px;background:linear-gradient(90deg,#000f99 0px,#000e99 10px,#000c99 20px,#000b99 30px,#000999 40px,#000899 50px,#000699 60px,#000599 70px,#000399 80px,#000299 90px,#000099 100px,#000099 110px,#000099 120px,#000099 130px,#000099 140px,#000099 150px,#000099 160px,#000099 170px,#000099 180px,#020099 190px,#080099 200px,#0d0099 210px,#120099 220px,#170099 230px,#1c0099 240px,#200099 250px,#250099 260px,#2a0099 270px,#2e0099 280px,#330099 290px,#380099 300px,#3c0099 310px,#410099 320px,#450099 330px,#4a0099 340px,#4e0099 350px,#530099 360px,#570099 370px,#5c0099 380px,#600099 390px,#650099 400px,#690099 410px,#6e0099 420px,#720099 430px,#770099 440px,#7b0099 450px,#800099 460px,#840099 470px,#890099 480px,#8d0099 490px,#920099 500px,#960099 510px,#990097 520px,#990093 530px,#99008f 540px,#99008b 550px,#990087 560px,#990084 570px,#990080 580px,#99007d 590px,#99007a 600px)"></i><i style="top:420px;height:4px;background:linear-gradient(90deg,#000e99 0px,#000d99 10px,#000c99 20px,#000a99 30px,#000999 40px,#000799 50px,#000699 60px,#000499 70px,#000399 80px,#000199 90px,#000099 100px,#000099 110px,#000099 120px,#000099 130px,#000099 140px,#000099 150px,#000099 160px,#000099 170px,#000099 180px,#010099 190px,#070099 200px,#0c0099 210px,#110099 220px,#160099 230px,#1b0099 240px,#200099 250px,#240099 260px,#290099 270px,#2e0099 280px,#320099 290px,#370099 300px,#3b0099 310px,#400099 320px,#440099 330px,#490099 340px,#4d0099 350px,#520099 360px,#560099 370px,#5b0099 380px,#5f0099 390px,#630099 400px,#680099 410px,#6c0099 420px,#710099 430px,#750099 440px,#7a0099 450px,#7e0099 460px,#830099 470px,#870099 480px,#8c0099 490px,#900099 500px,#950099 510px,#990099 520px,#990094 530px,#990090 540px,#99008c 550px,#990089 560px,#990085 570px,#990082 580px,#99007f 590px,#99007b 600px)"></i><i style="top:424px;height:4px;background:linear-gradient(90deg,#000e99 0px,#000c99 10px,#000b99 20px,#000a99 30px,#000899 40px,#000799 50px,#000599 60px,#000499 70px,#000299 80px,#000099 90px,#000099 100px,#000099 110px,#000099 120px,#000099 130px,#000099 140px,#000099 150px,#000099 160px,#000099 170px,#000099 180px,#010099 190px,#070099 200px,#0c0099 210px,#110099 220px,#160099 230px,#1a0099 240px,#1f0099 250px,#240099 260px,#280099 270px,#2d0099 280px,#310099 290px,#360099 300px,#3a0099 310px,#3f0099 320px,#430099 330px,#480099 340px,#4c0099 350px,#510099 360px,#550099 370px,#590099 380px,#5e0099 390px,#620099 400px,#670099 410px,#6b0099 420px,#6f0099 430px,#740099 440px,#780099 450px,#7d0099 460px,#810099 470px,#860099 480px,#8a0099 490px,#8e0099 500px,#930099 510px,#970099 520px,#990096 530px,#990092 540px,#99008e 550px,#99008a 560px,#990087 570px,#990083 580px,#990080 590px,#99007d 600px)"></i><i style="top:428px;height:4px;background:linear-gradient(90deg,#000d99 0px,#000c99 10px,#000a99 20px,#000999 30px,#000799 40px,#000699 50px,#000599 60px,#000399 70px,#000199 80px,#000099 90px,#000099 100px,#000099 110px,#000099 120px,#000099 130px,#000099 140px,#000099 150px,#000099 160px,#000099 170px,#000099 180px,#000099 190px,#060099 200px,#0b0099 210px,#100099 220px,#150099 230px,#1a0099 240px,#1f0099 250px,#230099 260px,#280099 270px,#2c0099 280px,#310099 290px,#350099 300px,#3a0099 310px,#3e0099 320px,#420099 330px,#470099 340px,#4b0099 350px,#500099 360px,#540099 370px,#580099 380px,#5d0099 390px,#610099 400px,#650099 410px,#6a0099 420px,#6e0099 430px,#720099 440px,#770099 450px,#7b0099 460px,#800099 470px,#840099 480px,#880099 490px,#8d0099 500px,#910099 510px,#960099 520px,#990098 530px,#990094 540px,#990090 550px,#99008c 560px,#990088 570px,#990085 580px,#990082 590px,#99007e 600px)"></i><i style="top:432px;height:4px;background:linear-gradient(90deg,#000c99 0px,#000b99 10px,#000a99 20px,#000899 30px,#000799 40px,#000599 50px,#000499 60px,#000299 70px,#000099 80px,#000099 90px,#000099 100px,#000099 110px,#000099 120px,#000099 130px,#000099 140px,#000099 150px,#000099 160px,#000099 170px,#000099 180px,#000099 190px,#060099 200px,#0b0099 210px,#100099 220px,#150099 230px,#190099 240px,#1e0099 250px,#230099 260px,#270099 270px,#2c0099 280px,#300099 290px,#340099 300px,#390099 310px,#3d0099 320px,#410099 330px,#460099 340px,#4a0099 350px,#4f0099 360px,#530099 370px,#570099 380px,#5b0099 390px,#600099 400px,#640099 410px,#680099 420px,#6d0099 430px,#710099 440px,#750099 450px,#7a0099 460px,#7e0099 470px,#820099 480px,#870099 490px,#8b0099 500px,#8f0099 510px,#940099 520px,#980099 530px,#990095 540px,#990091 550px,#99008e 560px,#99008a 570px,#990086 580px,#990083 590px,#990080 600px)"></i><i style="top:436px;height:4px;background:linear-gradient(90deg,#000c99 0px,#000a99 10px,#000999 20px,#000899 30px,#000699 40px,#000599 50px,#000399 60px,#000299 70px,#000099 80px,#000099 90px,#000099 100px,#000099 110px,#000099 120px,#000099 130px,#000099 140px,#000099 150px,#000099 160px,#000099 170px,#000099 180px,#000099 190px,#050099 200px,#0b0099 210px,#100099 220px,#140099 230px,#190099 240px,#1d0099 250px,#220099 260px,#260099 270px,#2b0099 280px,#2f0099 290px,#340099 300px,#380099 310px,#3c0099 320px,#410099 330px,#450099 340px,#490099 350px,#4e0099 360px,#520099 370px,#560099 380px,#5a0099 390px,#5f0099 400px,#630099 410px,#670099 420px,#6b0099 430px,#700099 440px,#740099 450px,#780099 460px,#7d0099 470px,#810099 480px,#850099 490px,#8a0099 500px,#8e0099 510px,#920099 520px,#960099 530px,#990097 540px,#990093 550px,#99008f 560px,#99008b 570px,#990088 580px,#990085 590px,#990081 600px)"></i><i style="top:440px;height:4px;background:linear-gradient(90deg,#000b99 0px,#000a99 10px,#000899 20px,#000799 30px,#000699 40px,#000499 50px,#000399 60px,#000199 70px,#000099 80px,#000099 90px,#000099 100px,#000099 110px,#000099 120px,#000099 130px,#000099 140px,#000099 150px,#000099 160px,#000099 170px,#000099 180px,#000099 190px,#050099 200px,#0a0099 210px,#0f0099 220px,#140099 230px,#180099 240px,#1d0099 250px,#210099 260px,#260099 270px,#2a0099 280px,#2f0099 290px,#330099 300px,#370099 310px,#3b0099 320px,#400099 330px,#440099 340px,#480099 350px,#4d0099 360px,#510099 370px,#550099 380px,#590099 390px,#5d0099 400px,#620099 410px,#660099 420px,#6a0099 430px,#6e0099 440px,#730099 450px,#770099 460px,#7b0099 470px,#7f0099 480px,#840099 490px,#880099 500px,#8c0099 510px,#910099 520px,#950099 530px,#990099 540px,#990095 550px,#990091 560px,#99008d 570px,#990089 580px,#990086 590px,#990083 600px)"></i><i style="top:444px;height:4px;background:linear-gradient(90deg,#000a99 0px,#000999 10px,#000899 20px,#000699 30px,#000599 40px,#000399 50px,#000299 60px,#000099 70px,#000099 80px,#000099 90px,#000099 100px,#000099 110px,#000099 120px,#000099 130px,#000099 140px,#000099 150px,#000099 160px,#000099 170px,#000099 180px,#000099 190px,#050099 200px,#0a0099 210px,#0f0099 220px,#130099 230px,#180099 240px,#1c0099 250px,#210099 260px,#250099 270px,#2a0099 280px,#2e0099 290px,#320099 300px,#360099 310px,#3b0099 320px,#3f0099 330px,#430099 340px,#470099 350px,#4c0099 360px,#500099 370px,#540099 380px,#580099 390px,#5c0099 400px,#610099 410px,#650099 420px,#690099 430px,#6d0099 440px,#710099 450px,#760099 460px,#7a0099 470px,#7e0099 480px,#820099 490px,#860099 500px,#8b0099 510px,#8f0099 520px,#930099 530px,#970099 540px,#990096 550px,#990092 560px,#99008f 570px,#99008b 580px,#990088 590px,#990084 600px)"></i><i style="top:448px;height:4px;background:linear-gradient(90deg,#000a99 0px,#000999 10px,#000799 20px,#000699 30px,#000499 40px,#000399 50px,#000199 60px,#000099 70px,#000099 80px,#000099 90px,#000099 100px,#000099 110px,#000099 120px,#000099 130px,#000099 140px,#000099 150px,#000099 160px,#000099 170px,#000099 180px,#000099 190px,#040099 200px,#090099 210px,#0e0099 220px,#130099 230px,#170099 240px,#1c0099 250px,#200099 260px,#250099 270px,#290099 280px,#2d0099 290px,#310099 300px,#360099 310px,#3a0099 320px,#3e0099 330px,#420099 340px,#460099 350px,#4b0099 360px,#4f0099 370px,#530099 380px,#570099 390px,#5b0099 400px,#5f0099 410px,#640099 420px,#680099 430px,#6c0099 440px,#700099 450px,#740099 460px,#780099 470px,#7d0099 480px,#810099 490px,#850099 500px,#890099 510px,#8d0099 520px,#910099 530px,#960099 540px,#990098 550px,#990094 560px,#990090 570px,#99008d 580px,#990089 590px,#990086 600px)"></i><i style="top:452px;height:4px;background:linear-gradient(90deg,#000999 0px,#000899 10px,#000799 20px,#000599 30px,#000499 40px,#000299 50px,#000199 60px,#000099 70px,#000099 80px,#000099 90px,#000099 100px,#000099 110px,#000099 120px,#000099 130px,#000099 140px,#000099 150px,#000099 160px,#000099 170px,#000099 180px,#000099 190px,#040099 200px,#090099 210px,#0e0099 220px,#120099 230px,#170099 240px,#1b0099 250px,#200099 260px,#240099 270px,#280099 280px,#2c0099 290px,#310099 300px,#350099 310px,#390099 320px,#3d0099 330px,#410099 340px,#460099 350px,#4a0099 360px,#4e0099 370px,#520099 380px,#560099 390px,#5a0099 400px,#5e0099 410px,#620099 420px,#670099 430px,#6b0099 440px,#6f0099 450px,#730099 460px,#770099 470px,#7b0099 480px,#7f0099 490px,#830099 500px,#880099 510px,#8c0099 520px,#900099 530px,#940099 540px,#980099 550px,#990096 560px,#990092 570px,#99008e 580px,#99008b 590px,#990087 600px)"></i><i style="top:456px;height:4px;background:linear-gradient(90deg,#000999 0px,#000799 10px,#000699 20px,#000599 30px,#000399 40px,#000299 50px,#000099 60px,#000099 70px,#000099 80px,#000099 90px,#000099 100px,#000099 110px,#000099 120px,#000099 130px,#000099 140px,#000099 150px,#000099 160px,#000099 170px,#000099 180px,#000099 190px,#040099 200px,#090099 210px,#0d0099 220px,#120099 230px,#160099 240px,#1b0099 250px,#1f0099 260px,#230099 270px,#280099 280px,#2c0099 290px,#300099 300px,#340099 310px,#380099 320px,#3c0099 330px,#410099 340px,#450099 350px,#490099 360px,#4d0099 370px,#510099 380px,#550099 390px,#590099 400px,#5d0099 410px,#610099 420px,#650099 430px,#690099 440px,#6e0099 450px,#720099 460px,#760099 470px,#7a0099 480px,#7e0099 490px,#820099 500px,#860099 510px,#8a0099 520px,#8e0099 530px,#920099 540px,#970099 550px,#990097 560px,#990093 570px,#990090 580px,#99008c 590px,#990089 600px)"></i><i style="top:460px;height:4px;background:linear-gradient(90deg,#000899 0px,#000799 10px,#000699 20px,#000499 30px,#000399 40px,#000199 50px,#000099 60px,#000099 70px,#000099 80px,#000099 90px,#000099 100px,#000099 110px,#000099 120px,#000099 130px,#000099 140px,#000099 150px,#000099 160px,#000099 170px,#000099 180px,#000099 190px,#030099 200px,#080099 210px,#0d0099 220px,#120099 230px,#160099 240px,#1b0099 250px,#1f0099 260px,#230099 270px,#270099 280px,#2c0099 290px,#300099 300px,#340099 310px,#380099 320px,#3c0099 330px,#400099 340px,#440099 350px,#480099 360px,#4d0099 370px,#510099 380px,#550099 390px,#590099 400px,#5d0099 410px,#610099 420px,#650099 430px,#690099 440px,#6d0099 450px,#710099 460px,#750099 470px,#790099 480px,#7d0099 490px,#810099 500px,#860099 510px,#8a0099 520px,#8e0099 530px,#920099 540px,#960099 550px,#990098 560px,#990094 570px,#990090 580px,#99008d 590px,#990089 600px)"></i></div><div class="cl" style="clip-path:polygon(449.6px 59.6px,124.4px 29.2px,174.8px 339.7px)"><i style="top:4px;height:4px;background:linear-gradient(90deg,#00ff00 0px,#00ff00 10px,#00ff00 20px,#00ff00 30px,#00ff00 40px,#00ff00 50px,#00ff00 60px,#00ff00 70px,#00ff00 80px,#00ff00 90px,#00ff00 100px,#00ff00 110px,#00ff00 120px,#1cff00 130px,#38ff00 140px,#53ff00 150px,#6fff00 160px,#8cff00 170px,#aaff00 180px,#c9ff00 190px,#eaff00 200px,#fff200 210px,#ffd500 220px,#ffbd00 230px,#ffa900 240px,#ff9800 250px,#ff8900 260px,#ff7c00 270px,#ff7000 280px,#ff6600 290px,#ff5d00 300px,#ff5400 310px,#ff4d00 320px,#ff4600 330px,#ff4000 340px,#ff3a00 350px,#ff3400 360px,#ff2f00 370px,#ff2a00 380px,#ff2600 390px,#ff2200 400px,#ff1e00 410px,#ff1a00 420px,#ff1700 430px,#ff1300 440px,#ff1000 450px,#ff0d00 460px,#ff0a00 470px,#ff0700 480px,#ff0400 490px,#ff0100 500px,#ff0000 510px,#ff0000 520px,#ff0000 530px,#ff0000 540px,#ff0000 550px,#ff0000 560px,#ff0000 570px,#ff0000 580px,#ff0000 590px,#ff0000 600px)"></i><i style="top:8px;height:4px;background:linear-gradient(90deg,#00ff00 0px,#00ff00 10px,#00ff00 20px,#00ff00 30px,#00ff00 40px,#00ff00 50px,#00ff00 60px,#00ff00 70px,#00ff00 80px,#00ff00 90px,#00ff00 100px,#00ff00 110px,#00ff00 120px,#1bff00 130px,#37ff00 140px,#53ff00 150px,#6fff00 160px,#8cff00 170px,#aaff00 180px,#caff00 190px,#ebff00 200px,#fff100 210px,#ffd400 220px,#ffbc00 230px,#ffa800 240px,#ff9700 250px,#ff8800 260px,#ff7b00 270px,#ff6f00 280px,#ff6500 290px,#ff5c00 300px,#ff5300 310px,#ff4c00 320px,#ff4500 330px,#ff3e00 340px,#ff3800 350px,#ff3300 360px,#ff2e00 370px,#ff2900 380px,#ff2500 390px,#ff2100 400px,#ff1d00 410px,#ff1900 420px,#ff1500 430px,#ff1200 440px,#ff0f00 450px,#ff0c00 460px,#ff0900 470px,#ff0600 480px,#ff0300 490px,#ff0000 500px,#ff0000 510px,#ff0000 520px,#ff0000 530px,#ff0000 540px,#ff0000 550px,#ff0000 560px,#ff0000 570px,#ff0000 580px,#ff0000 590px,#ff0000 600px)"></i><i style="top:12px;height:4px;background:linear-gradient(90deg,#00ff00 0px,#00ff00 10px,#00ff00 20px,#00ff00 30px,#00ff00 40px,#00ff00 50px,#00ff00 60px,#00ff00 70px,#00ff00 80px,#00ff00 90px,#00ff00 100px,#00ff00 110px,#00ff00 120px,#19ff00 130px,#36ff00 140px,#52ff00 150px,#6eff00 160px,#8cff00 170px,#abff00 180px,#cbff00 190px,#ecff00 200px,#ffef00 210px,#ffd200 220px,#ffba00 230px,#ffa600 240px,#ff9500 250px,#ff8600 260px,#ff7900 270px,#ff6e00 280px,#ff6300 290px,#ff5a00 300px,#ff5200 310px,#ff4a00 320px,#ff4300 330px,#ff3d00 340px,#ff3700 350px,#ff3200 360px,#ff2d00 370px,#ff2800 380px,#ff2400 390px,#ff2000 400px,#ff1c00 410px,#ff1800 420px,#ff1400 430px,#ff1100 440px,#ff0e00 450px,#ff0b00 460px,#ff0800 470px,#ff0500 480px,#ff0200 490px,#ff0000 500px,#ff0000 510px,#ff0000 520px,#ff0000 530px,#ff0000 540px,#ff0000 550px,#ff0000 560px,#ff0000 570px,#ff0000 580px,#ff0000 590px,#ff0000 600px)"></i><i style="top:16px;height:4px;background:linear-gradient(90deg,#00ff01 0px,#00ff00 10px,#00ff00 20px,#00ff00 30px,#00ff00 40px,#00ff00 50px,#00ff00 60px,#00ff00 70px,#00ff00 80px,#00ff00 90px,#00ff00 100px,#00ff00 110px,#00ff00 120px,#18ff00 130px,#34ff00 140px,#51ff00 150px,#6eff00 160px,#8cff00 170px,#abff00 180px,#cbff00 190px,#edff00 200px,#ffee00 210px,#ffd100 220px,#ffb900 230px,#ffa500 240px,#ff9400 250px,#ff8500 260px,#ff7800 270px,#ff6c00 280px,#ff6200 290px,#ff5900 300px,#ff5100 310px,#ff4900 320px,#ff4200 330px,#ff3c00 340px,#ff3600 350px,#ff3100 360px,#ff2c00 370px,#ff2700 380px,#ff2300 390px,#ff1e00 400px,#ff1b00 410px,#ff1700 420px,#ff1300 430px,#ff1000 440px,#ff0d00 450px,#ff0a00 460px,#ff0700 470px,#ff0400 480px,#ff0000 490px,#ff0000 500px,#ff0000 510px,#ff0000 520px,#ff0000 530px,#ff0000 540px,#ff0000 550px,#ff0000 560px,#ff0000 570px,#ff0000 580px,#ff0000 590px,#ff0000 600px)"></i><i style="top:20px;height:4px;background:linear-gradient(90deg,#00ff0b 0px,#00ff09 10px,#00ff07 20px,#00ff05 30px,#00ff02 40px,#00ff00 50px,#00ff00 60px,#00ff00 70px,#00ff00 80px,#00ff00 90px,#00ff00 100px,#00ff00 110px,#00ff00 120px,#16ff00 130px,#33ff00 140px,#50ff00 150px,#6dff00 160px,#8cff00 170px,#abff00 180px,#ccff00 190px,#eeff00 200px,#ffed00 210px,#ffcf00 220px,#ffb700 230px,#ffa300 240px,#ff9200 250px,#ff8300 260px,#ff7600 270px,#ff6b00 280px,#ff6100 290px,#ff5700 300px,#ff4f00 310px,#ff4800 320px,#ff4100 330px,#ff3b00 340px,#ff3500 350px,#ff2f00 360px,#ff2a00 370px,#ff2600 380px,#ff2100 390px,#ff1d00 400px,#ff1900 410px,#ff1600 420px,#ff1200 430px,#ff0f00 440px,#ff0c00 450px,#ff0800 460px,#ff0500 470px,#ff0200 480px,#ff0000 490px,#ff0000 500px,#ff0000 510px,#ff0000 520px,#ff0000 530px,#ff0000 540px,#ff0000 550px,#ff0000 560px,#ff0000 570px,#ff0000 580px,#ff0000 590px,#ff0000 600px)"></i><i style="top:24px;height:4px;background:linear-gradient(90deg,#00ff13 0px,#00ff12 10px,#00ff10 20px,#00ff0e 30px,#00ff0c 40px,#00ff0a 50px,#00ff08 60px,#00ff06 70px,#00ff03 80px,#00ff00 90px,#00ff00 100px,#00ff00 110px,#00ff00 120px,#14ff00 130px,#32ff00 140px,#4fff00 150px,#6dff00 160px,#8bff00 170px,#abff00 180px,#cdff00 190px,#f0ff00 200px,#ffeb00 210px,#ffce00 220px,#ffb600 230px,#ffa200 240px,#ff9100 250px,#ff8200 260px,#ff7500 270px,#ff6900 280px,#ff5f00 290px,#ff5600 300px,#ff4e00 310px,#ff4600 320px,#ff4000 330px,#ff3900 340px,#ff3400 350px,#ff2e00 360px,#ff2900 370px,#ff2500 380px,#ff2000 390px,#ff1c00 400px,#ff1800 410px,#ff1500 420px,#ff1100 430px,#ff0e00 440px,#ff0b00 450px,#ff0700 460px,#ff0400 470px,#ff0100 480px,#ff0000 490px,#ff0000 500px,#ff0000 510px,#ff0000 520px,#ff0000 530px,#ff0000 540px,#ff0000 550px,#ff0000 560px,#ff0000 570px,#ff0000 580px,#ff0000 590px,#ff0000 600px)"></i><i style="top:28px;height:4px;background:linear-gradient(90deg,#00ff1b 0px,#00ff1a 10px,#00ff19 20px,#00ff17 30px,#00ff16 40px,#00ff14 50px,#00ff12 60px,#00ff10 70px,#00ff0e 80px,#00ff0c 90px,#00ff0a 100px,#00ff07 110px,#00ff04 120px,#13ff01 130px,#30ff00 140px,#4eff00 150px,#6cff00 160px,#8bff00 170px,#abff00 180px,#cdff00 190px,#f1ff00 200px,#ffea00 210px,#ffcc00 220px,#ffb400 230px,#ffa000 240px,#ff8f00 250px,#ff8000 260px,#ff7300 270px,#ff6800 280px,#ff5e00 290px,#ff5500 300px,#ff4d00 310px,#ff4500 320px,#ff3e00 330px,#ff3800 340px,#ff3200 350px,#ff2d00 360px,#ff2800 370px,#ff2300 380px,#ff1f00 390px,#ff1b00 400px,#ff1700 410px,#ff1300 420px,#ff1000 430px,#ff0d00 440px,#ff0900 450px,#ff0600 460px,#ff0300 470px,#ff0000 480px,#ff0000 490px,#ff0000 500px,#ff0000 510px,#ff0000 520px,#ff0000 530px,#ff0000 540px,#ff0000 550px,#ff0000 560px,#ff0000 570px,#ff0000 580px,#ff0000 590px,#ff0000 600px)"></i><i style="top:32px;height:4px;background:linear-gradient(90deg,#00ff23 0px,#00ff22 10px,#00ff21 20px,#00ff20 30px,#00ff1e 40px,#00ff1d 50px,#00ff1c 60px,#00ff1a 70px,#00ff18 80px,#00ff17 90px,#00ff15 100px,#00ff13 110px,#00ff10 120px,#11ff0e 130px,#2fff0c 140px,#4dff09 150px,#6cff06 160px,#8bff03 170px,#acff00 180px,#ceff00 190px,#f2ff00 200px,#ffe800 210px,#ffcb00 220px,#ffb300 230px,#ff9f00 240px,#ff8d00 250px,#ff7f00 260px,#ff7200 270px,#ff6600 280px,#ff5c00 290px,#ff5300 300px,#ff4b00 310px,#ff4400 320px,#ff3d00 330px,#ff3700 340px,#ff3100 350px,#ff2c00 360px,#ff2700 370px,#ff2200 380px,#ff1e00 390px,#ff1a00 400px,#ff1600 410px,#ff1200 420px,#ff0f00 430px,#ff0b00 440px,#ff0800 450px,#ff0500 460px,#ff0200 470px,#ff0000 480px,#ff0000 490px,#ff0000 500px,#ff0000 510px,#ff0000 520px,#ff0000 530px,#ff0000 540px,#ff0000 550px,#ff0000 560px,#ff0000 570px,#ff0000 580px,#ff0000 590px,#ff0000 600px)"></i><i style="top:36px;height:4px;background:linear-gradient(90deg,#00ff2c 0px,#00ff2b 10px,#00ff2a 20px,#00ff28 30px,#00ff27 40px,#00ff26 50px,#00ff25 60px,#00ff24 70px,#00ff22 80px,#00ff21 90px,#00ff1f 100px,#00ff1d 110px,#00ff1c 120px,#0fff1a 130px,#2eff18 140px,#4cff16 150px,#6bff13 160px,#8bff11 170px,#acff0e 180px,#cfff0b 190px,#f3ff08 200px,#ffe704 210px,#ffc900 220px,#ffb100 230px,#ff9d00 240px,#ff8c00 250px,#ff7d00 260px,#ff7000 270px,#ff6500 280px,#ff5b00 290px,#ff5200 300px,#ff4a00 310px,#ff4200 320px,#ff3c00 330px,#ff3500 340px,#ff3000 350px,#ff2b00 360px,#ff2600 370px,#ff2100 380px,#ff1d00 390px,#ff1900 400px,#ff1500 410px,#ff1100 420px,#ff0e00 430px,#ff0a00 440px,#ff0700 450px,#ff0400 460px,#ff0000 470px,#ff0000 480px,#ff0000 490px,#ff0000 500px,#ff0000 510px,#ff0000 520px,#ff0000 530px,#ff0000 540px,#ff0000 550px,#ff0000 560px,#ff0000 570px,#ff0000 580px,#ff0000 590px,#ff0000 600px)"></i><i style="top:40px;height:4px;background:linear-gradient(90deg,#00ff33 0px,#00ff33 10px,#00ff32 20px,#00ff31 30px,#00ff30 40px,#00ff2f 50px,#00ff2e 60px,#00ff2d 70px,#00ff2c 80px,#00ff2b 90px,#00ff29 100px,#00ff28 110px,#00ff27 120px,#0dff25 130px,#2cff24 140px,#4bff22 150px,#6aff20 160px,#8bff1e 170px,#acff1c 180px,#cfff1a 190px,#f5ff17 200px,#ffe512 210px,#ffc80e 220px,#ffb00a 230px,#ff9b06 240px,#ff8a03 250px,#ff7c01 260px,#ff6f00 270px,#ff6300 280px,#ff5900 290px,#ff5000 300px,#ff4800 310px,#ff4100 320px,#ff3a00 330px,#ff3400 340px,#ff2f00 350px,#ff2900 360px,#ff2400 370px,#ff2000 380px,#ff1c00 390px,#ff1700 400px,#ff1400 410px,#ff1000 420px,#ff0d00 430px,#ff0900 440px,#ff0600 450px,#ff0300 460px,#ff0000 470px,#ff0000 480px,#ff0000 490px,#ff0000 500px,#ff0000 510px,#ff0000 520px,#ff0000 530px,#ff0000 540px,#ff0000 550px,#ff0000 560px,#ff0000 570px,#ff0000 580px,#ff0000 590px,#ff0000 600px)"></i><i style="top:44px;height:4px;background:linear-gradient(90deg,#00ff3b 0px,#00ff3b 10px,#00ff3a 20px,#00ff3a 30px,#00ff39 40px,#00ff38 50px,#00ff37 60px,#00ff36 70px,#00ff36 80px,#00ff35 90px,#00ff34 100px,#00ff33 110px,#00ff32 120px,#0bff30 130px,#2bff2f 140px,#4aff2e 150px,#6aff2d 160px,#8aff2b 170px,#acff29 180px,#d0ff28 190px,#f6ff26 200px,#ffe420 210px,#ffc61a 220px,#ffae15 230px,#ff9a11 240px,#ff890e 250px,#ff7a0b 260px,#ff6d08 270px,#ff6205 280px,#ff5803 290px,#ff4f01 300px,#ff4700 310px,#ff4000 320px,#ff3900 330px,#ff3300 340px,#ff2d00 350px,#ff2800 360px,#ff2300 370px,#ff1f00 380px,#ff1a00 390px,#ff1600 400px,#ff1200 410px,#ff0f00 420px,#ff0b00 430px,#ff0800 440px,#ff0500 450px,#ff0100 460px,#ff0000 470px,#ff0000 480px,#ff0000 490px,#ff0000 500px,#ff0000 510px,#ff0000 520px,#ff0000 530px,#ff0000 540px,#ff0000 550px,#ff0000 560px,#ff0000 570px,#ff0000 580px,#ff0000 590px,#ff0000 600px)"></i><i style="top:48px;height:4px;background:linear-gradient(90deg,#00ff43 0px,#00ff43 10px,#00ff43 20px,#00ff42 30px,#00ff42 40px,#00ff41 50px,#00ff41 60px,#00ff40 70px,#00ff3f 80px,#00ff3f 90px,#00ff3e 100px,#00ff3d 110px,#00ff3c 120px,#09ff3c 130px,#29ff3b 140px,#49ff3a 150px,#69ff39 160px,#8aff38 170px,#adff37 180px,#d1ff35 190px,#f7ff34 200px,#ffe22d 210px,#ffc426 220px,#ffac20 230px,#ff981b 240px,#ff8717 250px,#ff7813 260px,#ff6c10 270px,#ff600e 280px,#ff560b 290px,#ff4e09 300px,#ff4607 310px,#ff3e05 320px,#ff3803 330px,#ff3201 340px,#ff2c00 350px,#ff2700 360px,#ff2200 370px,#ff1d00 380px,#ff1900 390px,#ff1500 400px,#ff1100 410px,#ff0e00 420px,#ff0a00 430px,#ff0700 440px,#ff0300 450px,#ff0000 460px,#ff0000 470px,#ff0000 480px,#ff0000 490px,#ff0000 500px,#ff0000 510px,#ff0000 520px,#ff0000 530px,#ff0000 540px,#ff0000 550px,#ff0000 560px,#ff0000 570px,#ff0000 580px,#ff0000 590px,#ff0000 600px)"></i><i style="top:52px;height:4px;background:linear-gradient(90deg,#00ff4b 0px,#00ff4b 10px,#00ff4b 20px,#00ff4b 30px,#00ff4a 40px,#00ff4a 50px,#00ff4a 60px,#00ff49 70px,#00ff49 80px,#00ff49 90px,#00ff48 100px,#00ff48 110px,#00ff47 120px,#06ff47 130px,#28ff46 140px,#48ff46 150px,#68ff45 160px,#8aff45 170px,#adff44 180px,#d2ff43 190px,#f9ff43 200px,#ffe03a 210px,#ffc331 220px,#ffab2b 230px,#ff9625 240px,#ff8520 250px,#ff771c 260px,#ff6a18 270px,#ff5f15 280px,#ff5512 290px,#ff4c10 300px,#ff440e 310px,#ff3d0b 320px,#ff360a 330px,#ff3008 340px,#ff2b06 350px,#ff2505 360px,#ff2103 370px,#ff1c02 380px,#ff1800 390px,#ff1400 400px,#ff1000 410px,#ff0c00 420px,#ff0900 430px,#ff0600 440px,#ff0200 450px,#ff0000 460px,#ff0000 470px,#ff0000 480px,#ff0000 490px,#ff0000 500px,#ff0000 510px,#ff0000 520px,#ff0000 530px,#ff0000 540px,#ff0000 550px,#ff0000 560px,#ff0000 570px,#ff0000 580px,#ff0000 590px,#ff0000 600px)"></i><i style="top:56px;height:4px;background:linear-gradient(90deg,#00ff54 0px,#00ff53 10px,#00ff53 20px,#00ff53 30px,#00ff53 40px,#00ff53 50px,#00ff53 60px,#00ff53 70px,#00ff53 80px,#00ff53 90px,#00ff53 100px,#00ff53 110px,#00ff52 120px,#04ff52 130px,#26ff52 140px,#47ff52 150px,#68ff52 160px,#8aff52 170px,#adff51 180px,#d3ff51 190px,#faff51 200px,#ffdf47 210px,#ffc13d 220px,#ffa935 230px,#ff952f 240px,#ff8429 250px,#ff7524 260px,#ff6920 270px,#ff5d1d 280px,#ff5319 290px,#ff4b17 300px,#ff4314 310px,#ff3b12 320px,#ff3510 330px,#ff2f0e 340px,#ff290c 350px,#ff240a 360px,#ff1f08 370px,#ff1b07 380px,#ff1706 390px,#ff1304 400px,#ff0f03 410px,#ff0b02 420px,#ff0800 430px,#ff0400 440px,#ff0100 450px,#ff0000 460px,#ff0000 470px,#ff0000 480px,#ff0000 490px,#ff0000 500px,#ff0000 510px,#ff0000 520px,#ff0000 530px,#ff0000 540px,#ff0000 550px,#ff0000 560px,#ff0000 570px,#ff0000 580px,#ff0000 590px,#ff0000 600px)"></i><i style="top:60px;height:4px;background:linear-gradient(90deg,#00ff5c 0px,#00ff5c 10px,#00ff5c 20px,#00ff5c 30px,#00ff5c 40px,#00ff5c 50px,#00ff5c 60px,#00ff5d 70px,#00ff5d 80px,#00ff5d 90px,#00ff5d 100px,#00ff5d 110px,#00ff5d 120px,#01ff5e 130px,#25ff5e 140px,#46ff5e 150px,#67ff5e 160px,#89ff5f 170px,#adff5f 180px,#d3ff5f 190px,#fbff60 200px,#ffdd53 210px,#ffbf48 220px,#ffa73f 230px,#ff9338 240px,#ff8232 250px,#ff742d 260px,#ff6728 270px,#ff5c24 280px,#ff5220 290px,#ff491d 300px,#ff411a 310px,#ff3a18 320px,#ff3315 330px,#ff2d13 340px,#ff2811 350px,#ff230f 360px,#ff1e0e 370px,#ff1a0c 380px,#ff150a 390px,#ff1109 400px,#ff0e08 410px,#ff0a06 420px,#ff0605 430px,#ff0304 440px,#ff0003 450px,#ff0002 460px,#ff0001 470px,#ff0000 480px,#ff0000 490px,#ff0000 500px,#ff0000 510px,#ff0000 520px,#ff0000 530px,#ff0000 540px,#ff0000 550px,#ff0000 560px,#ff0000 570px,#ff0000 580px,#ff0000 590px,#ff0000 600px)"></i><i style="top:64px;height:4px;background:linear-gradient(90deg,#00ff64 0px,#00ff64 10px,#00ff64 20px,#00ff65 30px,#00ff65 40px,#00ff66 50px,#00ff66 60px,#00ff66 70px,#00ff67 80px,#00ff67 90px,#00ff68 100px,#00ff68 110px,#00ff69 120px,#00ff69 130px,#23ff6a 140px,#44ff6a 150px,#66ff6b 160px,#89ff6c 170px,#aeff6d 180px,#d4ff6e 190px,#fdff6e 200px,#ffdb60 210px,#ffbe54 220px,#ffa54a 230px,#ff9142 240px,#ff803b 250px,#ff7235 260px,#ff6530 270px,#ff5a2b 280px,#ff5027 290px,#ff4824 300px,#ff4020 310px,#ff391e 320px,#ff321b 330px,#ff2c19 340px,#ff2716 350px,#ff2114 360px,#ff1d12 370px,#ff1811 380px,#ff140f 390px,#ff100e 400px,#ff0c0c 410px,#ff090b 420px,#ff0509 430px,#ff0108 440px,#ff0007 450px,#ff0006 460px,#ff0005 470px,#ff0004 480px,#ff0003 490px,#ff0002 500px,#ff0001 510px,#ff0000 520px,#ff0000 530px,#ff0000 540px,#ff0000 550px,#ff0000 560px,#ff0000 570px,#ff0000 580px,#ff0000 590px,#ff0000 600px)"></i><i style="top:68px;height:4px;background:linear-gradient(90deg,#00ff6c 0px,#00ff6d 10px,#00ff6d 20px,#00ff6e 30px,#00ff6e 40px,#00ff6f 50px,#00ff6f 60px,#00ff70 70px,#00ff71 80px,#00ff72 90px,#00ff72 100px,#00ff73 110px,#00ff74 120px,#00ff75 130px,#21ff76 140px,#43ff77 150px,#65ff78 160px,#89ff79 170px,#aeff7b 180px,#d5ff7c 190px,#ffff7e 200px,#ffda6d 210px,#ffbc5f 220px,#ffa454 230px,#ff904b 240px,#ff7f43 250px,#ff703d 260px,#ff6437 270px,#ff5932 280px,#ff4f2e 290px,#ff462a 300px,#ff3e26 310px,#ff3723 320px,#ff3120 330px,#ff2b1e 340px,#ff251b 350px,#ff2019 360px,#ff1b17 370px,#ff1715 380px,#ff1314 390px,#ff0f12 400px,#ff0b10 410px,#ff070f 420px,#ff040e 430px,#ff000c 440px,#ff000b 450px,#ff000a 460px,#ff0009 470px,#ff0008 480px,#ff0007 490px,#ff0006 500px,#ff0005 510px,#ff0004 520px,#ff0003 530px,#ff0002 540px,#ff0001 550px,#ff0000 560px,#ff0000 570px,#ff0000 580px,#ff0000 590px,#ff0000 600px)"></i><i style="top:72px;height:4px;background:linear-gradient(90deg,#00ff74 0px,#00ff75 10px,#00ff76 20px,#00ff77 30px,#00ff77 40px,#00ff78 50px,#00ff79 60px,#00ff7a 70px,#00ff7b 80px,#00ff7c 90px,#00ff7d 100px,#00ff7e 110px,#00ff7f 120px,#00ff81 130px,#1fff82 140px,#42ff84 150px,#65ff85 160px,#89ff87 170px,#aeff89 180px,#d6ff8b 190px,#fffe8c 200px,#ffd879 210px,#ffba6a 220px,#ffa25e 230px,#ff8e54 240px,#ff7d4c 250px,#ff6e45 260px,#ff623f 270px,#ff5739 280px,#ff4d34 290px,#ff4530 300px,#ff3d2c 310px,#ff3629 320px,#ff2f26 330px,#ff2923 340px,#ff2420 350px,#ff1f1e 360px,#ff1a1c 370px,#ff161a 380px,#ff1118 390px,#ff0e16 400px,#ff0a14 410px,#ff0613 420px,#ff0211 430px,#ff0010 440px,#ff000f 450px,#ff000d 460px,#ff000c 470px,#ff000b 480px,#ff000a 490px,#ff0009 500px,#ff0008 510px,#ff0007 520px,#ff0006 530px,#ff0005 540px,#ff0004 550px,#ff0004 560px,#ff0003 570px,#ff0002 580px,#ff0001 590px,#ff0000 600px)"></i><i style="top:76px;height:4px;background:linear-gradient(90deg,#00ff7d 0px,#00ff7e 10px,#00ff7f 20px,#00ff80 30px,#00ff81 40px,#00ff82 50px,#00ff83 60px,#00ff84 70px,#00ff85 80px,#00ff87 90px,#00ff88 100px,#00ff8a 110px,#00ff8b 120px,#00ff8d 130px,#1eff8f 140px,#41ff91 150px,#64ff93 160px,#88ff95 170px,#afff97 180px,#d7ff9a 190px,#fffc9b 200px,#ffd686 210px,#ffb876 220px,#ffa069 230px,#ff8c5e 240px,#ff7b55 250px,#ff6d4d 260px,#ff6046 270px,#ff5540 280px,#ff4c3b 290px,#ff4337 300px,#ff3b32 310px,#ff342f 320px,#ff2e2b 330px,#ff2828 340px,#ff2225 350px,#ff1d23 360px,#ff1921 370px,#ff141e 380px,#ff101c 390px,#ff0c1a 400px,#ff0819 410px,#ff0517 420px,#ff0115 430px,#ff0014 440px,#ff0012 450px,#ff0011 460px,#ff0010 470px,#ff000f 480px,#ff000d 490px,#ff000c 500px,#ff000b 510px,#ff000a 520px,#ff0009 530px,#ff0008 540px,#ff0008 550px,#ff0007 560px,#ff0006 570px,#ff0005 580px,#ff0004 590px,#ff0004 600px)"></i><i style="top:80px;height:4px;background:linear-gradient(90deg,#00ff85 0px,#00ff86 10px,#00ff88 20px,#00ff89 30px,#00ff8a 40px,#00ff8b 50px,#00ff8d 60px,#00ff8e 70px,#00ff90 80px,#00ff91 90px,#00ff93 100px,#00ff95 110px,#00ff97 120px,#00ff99 130px,#1cff9b 140px,#3fff9e 150px,#63ffa0 160px,#88ffa3 170px,#afffa6 180px,#d8ffa9 190px,#fffaaa 200px,#ffd493 210px,#ffb681 220px,#ff9e73 230px,#ff8a67 240px,#ff795d 250px,#ff6b55 260px,#ff5f4e 270px,#ff5447 280px,#ff4a42 290px,#ff413d 300px,#ff3a38 310px,#ff3334 320px,#ff2c31 330px,#ff262d 340px,#ff212a 350px,#ff1c28 360px,#ff1725 370px,#ff1323 380px,#ff0f21 390px,#ff0b1e 400px,#ff071d 410px,#ff031b 420px,#ff0019 430px,#ff0018 440px,#ff0016 450px,#ff0015 460px,#ff0013 470px,#ff0012 480px,#ff0011 490px,#ff0010 500px,#ff000f 510px,#ff000d 520px,#ff000c 530px,#ff000c 540px,#ff000b 550px,#ff000a 560px,#ff0009 570px,#ff0008 580px,#ff0007 590px,#ff0006 600px)"></i><i style="top:84px;height:4px;background:linear-gradient(90deg,#00ff8e 0px,#00ff8f 10px,#00ff91 20px,#00ff92 30px,#00ff94 40px,#00ff95 50px,#00ff97 60px,#00ff99 70px,#00ff9a 80px,#00ff9c 90px,#00ff9e 100px,#00ffa1 110px,#00ffa3 120px,#00ffa6 130px,#1affa8 140px,#3effab 150px,#62ffae 160px,#88ffb2 170px,#afffb5 180px,#d9ffb9 190px,#fff9b9 200px,#ffd2a0 210px,#ffb48d 220px,#ff9c7d 230px,#ff8871 240px,#ff7866 250px,#ff695d 260px,#ff5d55 270px,#ff524e 280px,#ff4848 290px,#ff4043 300px,#ff383e 310px,#ff313a 320px,#ff2b36 330px,#ff2533 340px,#ff202f 350px,#ff1b2c 360px,#ff162a 370px,#ff1227 380px,#ff0d25 390px,#ff0923 400px,#ff0621 410px,#ff021f 420px,#ff001d 430px,#ff001b 440px,#ff001a 450px,#ff0018 460px,#ff0017 470px,#ff0015 480px,#ff0014 490px,#ff0013 500px,#ff0012 510px,#ff0011 520px,#ff000f 530px,#ff000e 540px,#ff000d 550px,#ff000d 560px,#ff000c 570px,#ff000b 580px,#ff000a 590px,#ff0009 600px)"></i><i style="top:88px;height:4px;background:linear-gradient(90deg,#00ff97 0px,#00ff98 10px,#00ff9a 20px,#00ff9b 30px,#00ff9d 40px,#00ff9f 50px,#00ffa1 60px,#00ffa3 70px,#00ffa5 80px,#00ffa8 90px,#00ffaa 100px,#00ffad 110px,#00ffaf 120px,#00ffb2 130px,#18ffb5 140px,#3cffb9 150px,#61ffbc 160px,#88ffc0 170px,#b0ffc5 180px,#daffc9 190px,#fff7c8 200px,#ffd1ad 210px,#ffb298 220px,#ff9a88 230px,#ff867a 240px,#ff766f 250px,#ff6765 260px,#ff5b5c 270px,#ff5055 280px,#ff474f 290px,#ff3e49 300px,#ff3744 310px,#ff3040 320px,#ff293b 330px,#ff2438 340px,#ff1e34 350px,#ff1931 360px,#ff152e 370px,#ff102b 380px,#ff0c29 390px,#ff0827 400px,#ff0424 410px,#ff0022 420px,#ff0021 430px,#ff001f 440px,#ff001d 450px,#ff001c 460px,#ff001a 470px,#ff0019 480px,#ff0017 490px,#ff0016 500px,#ff0015 510px,#ff0014 520px,#ff0012 530px,#ff0011 540px,#ff0010 550px,#ff000f 560px,#ff000e 570px,#ff000d 580px,#ff000d 590px,#ff000c 600px)"></i><i style="top:92px;height:4px;background:linear-gradient(90deg,#00ff9f 0px,#00ffa1 10px,#00ffa3 20px,#00ffa5 30px,#00ffa7 40px,#00ffa9 50px,#00ffab 60px,#00ffae 70px,#00ffb0 80px,#00ffb3 90px,#00ffb6 100px,#00ffb9 110px,#00ffbc 120px,#00ffbf 130px,#15ffc3 140px,#3bffc7 150px,#60ffcb 160px,#87ffcf 170px,#b0ffd4 180px,#dbffda 190px,#fff5d7 200px,#ffcfba 210px,#ffb1a4 220px,#ff9892 230px,#ff8483 240px,#ff7477 250px,#ff666d 260px,#ff5964 270px,#ff4f5c 280px,#ff4555 290px,#ff3d4f 300px,#ff354a 310px,#ff2e45 320px,#ff2841 330px,#ff223d 340px,#ff1d39 350px,#ff1836 360px,#ff1333 370px,#ff0f30 380px,#ff0b2d 390px,#ff072b 400px,#ff0328 410px,#ff0026 420px,#ff0024 430px,#ff0022 440px,#ff0021 450px,#ff001f 460px,#ff001d 470px,#ff001c 480px,#ff001a 490px,#ff0019 500px,#ff0018 510px,#ff0016 520px,#ff0015 530px,#ff0014 540px,#ff0013 550px,#ff0012 560px,#ff0011 570px,#ff0010 580px,#ff000f 590px,#ff000e 600px)"></i><i style="top:96px;height:4px;background:linear-gradient(90deg,#00ffa8 0px,#00ffaa 10px,#00ffac 20px,#00ffaf 30px,#00ffb1 40px,#00ffb3 50px,#00ffb6 60px,#00ffb8 70px,#00ffbb 80px,#00ffbe 90px,#00ffc1 100px,#00ffc5 110px,#00ffc9 120px,#00ffcc 130px,#13ffd1 140px,#39ffd5 150px,#60ffda 160px,#87ffdf 170px,#b0ffe5 180px,#dcffeb 190px,#fff3e6 200px,#ffcdc8 210px,#ffafb0 220px,#ff969d 230px,#ff838d 240px,#ff7280 250px,#ff6475 260px,#ff586b 270px,#ff4d63 280px,#ff435c 290px,#ff3b55 300px,#ff3350 310px,#ff2d4b 320px,#ff2646 330px,#ff2142 340px,#ff1b3e 350px,#ff163a 360px,#ff1237 370px,#ff0d34 380px,#ff0931 390px,#ff052f 400px,#ff012c 410px,#ff002a 420px,#ff0028 430px,#ff0026 440px,#ff0024 450px,#ff0022 460px,#ff0021 470px,#ff001f 480px,#ff001e 490px,#ff001c 500px,#ff001b 510px,#ff0019 520px,#ff0018 530px,#ff0017 540px,#ff0016 550px,#ff0015 560px,#ff0014 570px,#ff0013 580px,#ff0012 590px,#ff0011 600px)"></i><i style="top:100px;height:4px;background:linear-gradient(90deg,#00ffb1 0px,#00ffb4 10px,#00ffb6 20px,#00ffb8 30px,#00ffbb 40px,#00ffbe 50px,#00ffc0 60px,#00ffc3 70px,#00ffc7 80px,#00ffca 90px,#00ffce 100px,#00ffd1 110px,#00ffd6 120px,#00ffda 130px,#11ffdf 140px,#38ffe4 150px,#5fffe9 160px,#87ffef 170px,#b1fff5 180px,#ddfffc 190px,#fff1f6 200px,#ffcbd5 210px,#ffadbb 220px,#ff94a7 230px,#ff8197 240px,#ff7089 250px,#ff627d 260px,#ff5673 270px,#ff4b6a 280px,#ff4262 290px,#ff395c 300px,#ff3256 310px,#ff2b50 320px,#ff254b 330px,#ff1f47 340px,#ff1a43 350px,#ff153f 360px,#ff103c 370px,#ff0c38 380px,#ff0835 390px,#ff0433 400px,#ff0030 410px,#ff002e 420px,#ff002c 430px,#ff0029 440px,#ff0027 450px,#ff0026 460px,#ff0024 470px,#ff0022 480px,#ff0021 490px,#ff001f 500px,#ff001e 510px,#ff001c 520px,#ff001b 530px,#ff001a 540px,#ff0019 550px,#ff0017 560px,#ff0016 570px,#ff0015 580px,#ff0014 590px,#ff0013 600px)"></i><i style="top:104px;height:4px;background:linear-gradient(90deg,#00ffbb 0px,#00ffbd 10px,#00ffc0 20px,#00ffc2 30px,#00ffc5 40px,#00ffc8 50px,#00ffcb 60px,#00ffcf 70px,#00ffd2 80px,#00ffd6 90px,#00ffda 100px,#00ffde 110px,#00ffe3 120px,#00ffe8 130px,#0effed 140px,#36fff2 150px,#5efff9 160px,#86ffff 170px,#acf8ff 180px,#d2f1ff 190px,#f8e9ff 200px,#ffc9e3 210px,#ffaac7 220px,#ff92b2 230px,#ff7fa0 240px,#ff6e91 250px,#ff6085 260px,#ff547a 270px,#ff4971 280px,#ff4069 290px,#ff3862 300px,#ff305b 310px,#ff2956 320px,#ff2351 330px,#ff1e4c 340px,#ff1848 350px,#ff1344 360px,#ff0f40 370px,#ff0a3d 380px,#ff063a 390px,#ff0237 400px,#ff0034 410px,#ff0032 420px,#ff002f 430px,#ff002d 440px,#ff002b 450px,#ff0029 460px,#ff0027 470px,#ff0025 480px,#ff0024 490px,#ff0022 500px,#ff0021 510px,#ff001f 520px,#ff001e 530px,#ff001d 540px,#ff001b 550px,#ff001a 560px,#ff0019 570px,#ff0018 580px,#ff0017 590px,#ff0016 600px)"></i><i style="top:108px;height:4px;background:linear-gradient(90deg,#00ffc4 0px,#00ffc7 10px,#00ffc9 20px,#00ffcc 30px,#00ffcf 40px,#00ffd3 50px,#00ffd6 60px,#00ffda 70px,#00ffde 80px,#00ffe2 90px,#00ffe7 100px,#00ffeb 110px,#00fff0 120px,#00fff6 130px,#0cfffc 140px,#34fcff 150px,#59f6ff 160px,#7eefff 170px,#a2e8ff 180px,#c6e1ff 190px,#eadaff 200px,#ffc7f0 210px,#ffa8d3 220px,#ff90bc 230px,#ff7daa 240px,#ff6c9a 250px,#ff5e8d 260px,#ff5282 270px,#ff4878 280px,#ff3e70 290px,#ff3668 300px,#ff2f61 310px,#ff285b 320px,#ff2256 330px,#ff1c51 340px,#ff174c 350px,#ff1248 360px,#ff0d44 370px,#ff0941 380px,#ff053e 390px,#ff003b 400px,#ff0038 410px,#ff0035 420px,#ff0033 430px,#ff0030 440px,#ff002e 450px,#ff002c 460px,#ff002a 470px,#ff0028 480px,#ff0027 490px,#ff0025 500px,#ff0024 510px,#ff0022 520px,#ff0021 530px,#ff001f 540px,#ff001e 550px,#ff001d 560px,#ff001c 570px,#ff001a 580px,#ff0019 590px,#ff0018 600px)"></i><i style="top:112px;height:4px;background:linear-gradient(90deg,#00ffcd 0px,#00ffd0 10px,#00ffd3 20px,#00ffd7 30px,#00ffda 40px,#00ffde 50px,#00ffe1 60px,#00ffe6 70px,#00ffea 80px,#00ffee 90px,#00fff3 100px,#00fff9 110px,#00fffe 120px,#00faff 130px,#09f4ff 140px,#2feeff 150px,#53e7ff 160px,#76e1ff 170px,#98daff 180px,#bbd3ff 190px,#ddccff 200px,#ffc4fe 210px,#ffa6e0 220px,#ff8ec7 230px,#ff7bb4 240px,#ff6aa3 250px,#ff5c95 260px,#ff5089 270px,#ff467f 280px,#ff3c76 290px,#ff346e 300px,#ff2d67 310px,#ff2661 320px,#ff205b 330px,#ff1a56 340px,#ff1551 350px,#ff104d 360px,#ff0c49 370px,#ff0745 380px,#ff0342 390px,#ff003f 400px,#ff003c 410px,#ff0039 420px,#ff0036 430px,#ff0034 440px,#ff0032 450px,#ff0030 460px,#ff002e 470px,#ff002c 480px,#ff002a 490px,#ff0028 500px,#ff0026 510px,#ff0025 520px,#ff0023 530px,#ff0022 540px,#ff0021 550px,#ff001f 560px,#ff001e 570px,#ff001d 580px,#ff001c 590px,#ff001b 600px)"></i><i style="top:116px;height:4px;background:linear-gradient(90deg,#00ffd7 0px,#00ffda 10px,#00ffdd 20px,#00ffe1 30px,#00ffe5 40px,#00ffe9 50px,#00ffed 60px,#00fff1 70px,#00fff6 80px,#00fffb 90px,#00feff 100px,#00f8ff 110px,#00f2ff 120px,#00edff 130px,#06e7ff 140px,#2be1ff 150px,#4ddaff 160px,#6fd4ff 170px,#90cdff 180px,#b0c7ff 190px,#d1c0ff 200px,#f2b9ff 210px,#ffa4ec 220px,#ff8cd2 230px,#ff78bd 240px,#ff68ac 250px,#ff5a9d 260px,#ff4e91 270px,#ff4486 280px,#ff3b7d 290px,#ff3274 300px,#ff2b6d 310px,#ff2466 320px,#ff1e60 330px,#ff195b 340px,#ff1456 350px,#ff0f51 360px,#ff0a4d 370px,#ff0649 380px,#ff0146 390px,#ff0043 400px,#ff0040 410px,#ff003d 420px,#ff003a 430px,#ff0037 440px,#ff0035 450px,#ff0033 460px,#ff0031 470px,#ff002f 480px,#ff002d 490px,#ff002b 500px,#ff0029 510px,#ff0028 520px,#ff0026 530px,#ff0025 540px,#ff0023 550px,#ff0022 560px,#ff0021 570px,#ff001f 580px,#ff001e 590px,#ff001d 600px)"></i><i style="top:120px;height:4px;background:linear-gradient(90deg,#00ffe1 0px,#00ffe4 10px,#00ffe8 20px,#00ffec 30px,#00fff0 40px,#00fff4 50px,#00fff9 60px,#00fffd 70px,#00fcff 80px,#00f6ff 90px,#00f1ff 100px,#00ecff 110px,#00e6ff 120px,#00e0ff 130px,#03daff 140px,#27d4ff 150px,#48ceff 160px,#68c8ff 170px,#88c2ff 180px,#a7bbff 190px,#c7b4ff 200px,#e6adff 210px,#ffa2f8 220px,#ff8add 230px,#ff76c7 240px,#ff66b5 250px,#ff58a6 260px,#ff4c99 270px,#ff428d 280px,#ff3983 290px,#ff317b 300px,#ff2973 310px,#ff236c 320px,#ff1d66 330px,#ff1760 340px,#ff125b 350px,#ff0d56 360px,#ff0952 370px,#ff044e 380px,#ff004a 390px,#ff0047 400px,#ff0043 410px,#ff0040 420px,#ff003e 430px,#ff003b 440px,#ff0038 450px,#ff0036 460px,#ff0034 470px,#ff0032 480px,#ff0030 490px,#ff002e 500px,#ff002c 510px,#ff002b 520px,#ff0029 530px,#ff0027 540px,#ff0026 550px,#ff0025 560px,#ff0023 570px,#ff0022 580px,#ff0021 590px,#ff001f 600px)"></i><i style="top:124px;height:4px;background:linear-gradient(90deg,#00ffea 0px,#00ffee 10px,#00fff2 20px,#00fff6 30px,#00fffb 40px,#00ffff 50px,#00faff 60px,#00f5ff 70px,#00f0ff 80px,#00ebff 90px,#00e5ff 100px,#00e0ff 110px,#00dbff 120px,#00d5ff 130px,#00cfff 140px,#24c9ff 150px,#43c3ff 160px,#62bdff 170px,#81b7ff 180px,#9fb0ff 190px,#bdaaff 200px,#dba3ff 210px,#f99cff 220px,#ff88e8 230px,#ff74d1 240px,#ff64be 250px,#ff56ae 260px,#ff4aa0 270px,#ff4094 280px,#ff378a 290px,#ff2f81 300px,#ff2879 310px,#ff2171 320px,#ff1b6b 330px,#ff1665 340px,#ff1060 350px,#ff0c5b 360px,#ff0756 370px,#ff0252 380px,#ff004e 390px,#ff004a 400px,#ff0047 410px,#ff0044 420px,#ff0041 430px,#ff003e 440px,#ff003c 450px,#ff0039 460px,#ff0037 470px,#ff0035 480px,#ff0033 490px,#ff0031 500px,#ff002f 510px,#ff002d 520px,#ff002c 530px,#ff002a 540px,#ff0029 550px,#ff0027 560px,#ff0026 570px,#ff0024 580px,#ff0023 590px,#ff0022 600px)"></i><i style="top:128px;height:4px;background:linear-gradient(90deg,#00fff4 0px,#00fff8 10px,#00fffd 20px,#00fdff 30px,#00f8ff 40px,#00f3ff 50px,#00efff 60px,#00eaff 70px,#00e5ff 80px,#00e0ff 90px,#00dbff 100px,#00d5ff 110px,#00d0ff 120px,#00caff 130px,#00c5ff 140px,#20bfff 150px,#3fb9ff 160px,#5db3ff 170px,#7aadff 180px,#97a7ff 190px,#b4a0ff 200px,#d19aff 210px,#ee93ff 220px,#ff85f3 230px,#ff72db 240px,#ff62c7 250px,#ff54b6 260px,#ff48a8 270px,#ff3e9c 280px,#ff3591 290px,#ff2d87 300px,#ff267f 310px,#ff1f77 320px,#ff1970 330px,#ff146a 340px,#ff0f64 350px,#ff0a5f 360px,#ff055b 370px,#ff0056 380px,#ff0052 390px,#ff004e 400px,#ff004b 410px,#ff0048 420px,#ff0045 430px,#ff0042 440px,#ff003f 450px,#ff003d 460px,#ff003a 470px,#ff0038 480px,#ff0036 490px,#ff0034 500px,#ff0032 510px,#ff0030 520px,#ff002e 530px,#ff002d 540px,#ff002b 550px,#ff002a 560px,#ff0028 570px,#ff0027 580px,#ff0025 590px,#ff0024 600px)"></i><i style="top:132px;height:4px;background:linear-gradient(90deg,#00ffff 0px,#00fbff 10px,#00f7ff 20px,#00f2ff 30px,#00eeff 40px,#00e9ff 50px,#00e4ff 60px,#00e0ff 70px,#00dbff 80px,#00d6ff 90px,#00d1ff 100px,#00cbff 110px,#00c6ff 120px,#00c1ff 130px,#00bbff 140px,#1db5ff 150px,#3bb0ff 160px,#58aaff 170px,#74a4ff 180px,#909eff 190px,#ab97ff 200px,#c791ff 210px,#e38aff 220px,#ff83ff 230px,#ff70e5 240px,#ff60d0 250px,#ff52bf 260px,#ff46b0 270px,#ff3ca3 280px,#ff3397 290px,#ff2b8d 300px,#ff2485 310px,#ff1e7d 320px,#ff1876 330px,#ff126f 340px,#ff0d69 350px,#ff0864 360px,#ff035f 370px,#ff005a 380px,#ff0056 390px,#ff0052 400px,#ff004f 410px,#ff004b 420px,#ff0048 430px,#ff0045 440px,#ff0042 450px,#ff0040 460px,#ff003d 470px,#ff003b 480px,#ff0039 490px,#ff0037 500px,#ff0035 510px,#ff0033 520px,#ff0031 530px,#ff002f 540px,#ff002e 550px,#ff002c 560px,#ff002b 570px,#ff0029 580px,#ff0028 590px,#ff0027 600px)"></i><i style="top:136px;height:4px;background:linear-gradient(90deg,#00f5ff 0px,#00f1ff 10px,#00edff 20px,#00e8ff 30px,#00e4ff 40px,#00dfff 50px,#00dbff 60px,#00d6ff 70px,#00d1ff 80px,#00ccff 90px,#00c7ff 100px,#00c2ff 110px,#00bdff 120px,#00b8ff 130px,#00b2ff 140px,#1aadff 150px,#37a7ff 160px,#53a1ff 170px,#6e9bff 180px,#8995ff 190px,#a48fff 200px,#bf89ff 210px,#d982ff 220px,#f47bff 230px,#ff6eef 240px,#ff5ed9 250px,#ff50c7 260px,#ff44b7 270px,#ff3aaa 280px,#ff319e 290px,#ff2994 300px,#ff228a 310px,#ff1c82 320px,#ff167b 330px,#ff1174 340px,#ff0b6e 350px,#ff0668 360px,#ff0263 370px,#ff005f 380px,#ff005a 390px,#ff0056 400px,#ff0053 410px,#ff004f 420px,#ff004c 430px,#ff0049 440px,#ff0046 450px,#ff0043 460px,#ff0041 470px,#ff003e 480px,#ff003c 490px,#ff003a 500px,#ff0038 510px,#ff0036 520px,#ff0034 530px,#ff0032 540px,#ff0030 550px,#ff002f 560px,#ff002d 570px,#ff002c 580px,#ff002a 590px,#ff0029 600px)"></i><i style="top:140px;height:4px;background:linear-gradient(90deg,#00ecff 0px,#00e8ff 10px,#00e4ff 20px,#00dfff 30px,#00dbff 40px,#00d6ff 50px,#00d2ff 60px,#00cdff 70px,#00c8ff 80px,#00c3ff 90px,#00beff 100px,#00b9ff 110px,#00b4ff 120px,#00afff 130px,#00aaff 140px,#18a4ff 150px,#349fff 160px,#4e99ff 170px,#6993ff 180px,#838dff 190px,#9d87ff 200px,#b681ff 210px,#d07bff 220px,#ea74ff 230px,#ff6bfa 240px,#ff5be3 250px,#ff4ed0 260px,#ff42bf 270px,#ff38b1 280px,#ff2fa5 290px,#ff289a 300px,#ff2190 310px,#ff1a88 320px,#ff1480 330px,#ff0f79 340px,#ff0a73 350px,#ff056d 360px,#ff0068 370px,#ff0063 380px,#ff005e 390px,#ff005a 400px,#ff0056 410px,#ff0053 420px,#ff004f 430px,#ff004c 440px,#ff0049 450px,#ff0046 460px,#ff0044 470px,#ff0041 480px,#ff003f 490px,#ff003d 500px,#ff003a 510px,#ff0038 520px,#ff0037 530px,#ff0035 540px,#ff0033 550px,#ff0031 560px,#ff0030 570px,#ff002e 580px,#ff002d 590px,#ff002b 600px)"></i><i style="top:144px;height:4px;background:linear-gradient(90deg,#00e3ff 0px,#00dfff 10px,#00dbff 20px,#00d7ff 30px,#00d2ff 40px,#00ceff 50px,#00c9ff 60px,#00c5ff 70px,#00c0ff 80px,#00bbff 90px,#00b6ff 100px,#00b1ff 110px,#00acff 120px,#00a7ff 130px,#00a2ff 140px,#159dff 150px,#3097ff 160px,#4a92ff 170px,#648cff 180px,#7d86ff 190px,#9680ff 200px,#af7aff 210px,#c874ff 220px,#e16dff 230px,#fa67ff 240px,#ff59ec 250px,#ff4cd8 260px,#ff40c7 270px,#ff36b8 280px,#ff2eac 290px,#ff26a0 300px,#ff1f96 310px,#ff188d 320px,#ff1285 330px,#ff0d7e 340px,#ff0878 350px,#ff0372 360px,#ff006c 370px,#ff0067 380px,#ff0062 390px,#ff005e 400px,#ff005a 410px,#ff0056 420px,#ff0053 430px,#ff0050 440px,#ff004d 450px,#ff004a 460px,#ff0047 470px,#ff0044 480px,#ff0042 490px,#ff0040 500px,#ff003d 510px,#ff003b 520px,#ff0039 530px,#ff0037 540px,#ff0036 550px,#ff0034 560px,#ff0032 570px,#ff0031 580px,#ff002f 590px,#ff002e 600px)"></i><i style="top:148px;height:4px;background:linear-gradient(90deg,#00dbff 0px,#00d7ff 10px,#00d3ff 20px,#00ceff 30px,#00caff 40px,#00c6ff 50px,#00c1ff 60px,#00bdff 70px,#00b8ff 80px,#00b3ff 90px,#00afff 100px,#00aaff 110px,#00a5ff 120px,#00a0ff 130px,#009bff 140px,#1395ff 150px,#2d90ff 160px,#468aff 170px,#5f85ff 180px,#777fff 190px,#9079ff 200px,#a873ff 210px,#c06dff 220px,#d867ff 230px,#f061ff 240px,#ff57f6 250px,#ff4ae1 260px,#ff3ecf 270px,#ff34c0 280px,#ff2cb2 290px,#ff24a7 300px,#ff1d9c 310px,#ff1693 320px,#ff118b 330px,#ff0b83 340px,#ff067d 350px,#ff0176 360px,#ff0071 370px,#ff006b 380px,#ff0067 390px,#ff0062 400px,#ff005e 410px,#ff005a 420px,#ff0056 430px,#ff0053 440px,#ff0050 450px,#ff004d 460px,#ff004a 470px,#ff0047 480px,#ff0045 490px,#ff0042 500px,#ff0040 510px,#ff003e 520px,#ff003c 530px,#ff003a 540px,#ff0038 550px,#ff0036 560px,#ff0035 570px,#ff0033 580px,#ff0031 590px,#ff0030 600px)"></i><i style="top:152px;height:4px;background:linear-gradient(90deg,#00d3ff 0px,#00cfff 10px,#00cbff 20px,#00c7ff 30px,#00c2ff 40px,#00beff 50px,#00baff 60px,#00b5ff 70px,#00b1ff 80px,#00acff 90px,#00a7ff 100px,#00a3ff 110px,#009eff 120px,#0099ff 130px,#0094ff 140px,#108eff 150px,#2a89ff 160px,#4384ff 170px,#5b7eff 180px,#7279ff 190px,#8a73ff 200px,#a16dff 210px,#b867ff 220px,#d061ff 230px,#e75bff 240px,#ff55ff 250px,#ff47e9 260px,#ff3cd7 270px,#ff32c7 280px,#ff2ab9 290px,#ff22ad 300px,#ff1ba2 310px,#ff1599 320px,#ff0f90 330px,#ff0988 340px,#ff0481 350px,#ff007b 360px,#ff0075 370px,#ff0070 380px,#ff006b 390px,#ff0066 400px,#ff0062 410px,#ff005e 420px,#ff005a 430px,#ff0056 440px,#ff0053 450px,#ff0050 460px,#ff004d 470px,#ff004a 480px,#ff0048 490px,#ff0045 500px,#ff0043 510px,#ff0041 520px,#ff003f 530px,#ff003d 540px,#ff003b 550px,#ff0039 560px,#ff0037 570px,#ff0035 580px,#ff0034 590px,#ff0032 600px)"></i><i style="top:156px;height:4px;background:linear-gradient(90deg,#00ccff 0px,#00c8ff 10px,#00c4ff 20px,#00bfff 30px,#00bbff 40px,#00b7ff 50px,#00b3ff 60px,#00aeff 70px,#00aaff 80px,#00a5ff 90px,#00a1ff 100px,#009cff 110px,#0097ff 120px,#0092ff 130px,#008dff 140px,#0e88ff 150px,#2783ff 160px,#3f7eff 170px,#5778ff 180px,#6e73ff 190px,#846dff 200px,#9b67ff 210px,#b262ff 220px,#c85cff 230px,#df55ff 240px,#f64fff 250px,#ff45f2 260px,#ff3adf 270px,#ff30ce 280px,#ff27c0 290px,#ff20b3 300px,#ff19a8 310px,#ff139e 320px,#ff0d96 330px,#ff078e 340px,#ff0286 350px,#ff0080 360px,#ff007a 370px,#ff0074 380px,#ff006f 390px,#ff006a 400px,#ff0066 410px,#ff0061 420px,#ff005e 430px,#ff005a 440px,#ff0057 450px,#ff0053 460px,#ff0050 470px,#ff004d 480px,#ff004b 490px,#ff0048 500px,#ff0046 510px,#ff0044 520px,#ff0041 530px,#ff003f 540px,#ff003d 550px,#ff003b 560px,#ff003a 570px,#ff0038 580px,#ff0036 590px,#ff0035 600px)"></i><i style="top:160px;height:4px;background:linear-gradient(90deg,#00c4ff 0px,#00c1ff 10px,#00bdff 20px,#00b8ff 30px,#00b4ff 40px,#00b0ff 50px,#00acff 60px,#00a8ff 70px,#00a3ff 80px,#009fff 90px,#009aff 100px,#0095ff 110px,#0091ff 120px,#008cff 130px,#0087ff 140px,#0c82ff 150px,#257dff 160px,#3c78ff 170px,#5372ff 180px,#696dff 190px,#7f68ff 200px,#9562ff 210px,#ab5cff 220px,#c156ff 230px,#d750ff 240px,#ed4aff 250px,#ff43fb 260px,#ff38e7 270px,#ff2ed6 280px,#ff25c7 290px,#ff1eba 300px,#ff17ae 310px,#ff11a4 320px,#ff0b9b 330px,#ff0593 340px,#ff008b 350px,#ff0084 360px,#ff007e 370px,#ff0078 380px,#ff0073 390px,#ff006e 400px,#ff0069 410px,#ff0065 420px,#ff0061 430px,#ff005d 440px,#ff005a 450px,#ff0057 460px,#ff0053 470px,#ff0051 480px,#ff004e 490px,#ff004b 500px,#ff0049 510px,#ff0046 520px,#ff0044 530px,#ff0042 540px,#ff0040 550px,#ff003e 560px,#ff003c 570px,#ff003a 580px,#ff0038 590px,#ff0037 600px)"></i><i style="top:164px;height:4px;background:linear-gradient(90deg,#00beff 0px,#00baff 10px,#00b6ff 20px,#00b2ff 30px,#00aeff 40px,#00aaff 50px,#00a5ff 60px,#00a1ff 70px,#009dff 80px,#0098ff 90px,#0094ff 100px,#008fff 110px,#008bff 120px,#0086ff 130px,#0081ff 140px,#0a7cff 150px,#2277ff 160px,#3972ff 170px,#4f6dff 180px,#6568ff 190px,#7a62ff 200px,#905dff 210px,#a557ff 220px,#ba51ff 230px,#d04cff 240px,#e545ff 250px,#fb3fff 260px,#ff35ef 270px,#ff2cdd 280px,#ff23ce 290px,#ff1cc0 300px,#ff15b5 310px,#ff0faa 320px,#ff09a0 330px,#ff0398 340px,#ff0090 350px,#ff0089 360px,#ff0082 370px,#ff007c 380px,#ff0077 390px,#ff0072 400px,#ff006d 410px,#ff0069 420px,#ff0065 430px,#ff0061 440px,#ff005d 450px,#ff005a 460px,#ff0057 470px,#ff0054 480px,#ff0051 490px,#ff004e 500px,#ff004b 510px,#ff0049 520px,#ff0047 530px,#ff0044 540px,#ff0042 550px,#ff0040 560px,#ff003e 570px,#ff003d 580px,#ff003b 590px,#ff0039 600px)"></i><i style="top:168px;height:4px;background:linear-gradient(90deg,#00b7ff 0px,#00b4ff 10px,#00b0ff 20px,#00acff 30px,#00a8ff 40px,#00a4ff 50px,#009fff 60px,#009bff 70px,#0097ff 80px,#0093ff 90px,#008eff 100px,#008aff 110px,#0085ff 120px,#0080ff 130px,#007cff 140px,#0877ff 150px,#2072ff 160px,#366dff 170px,#4c68ff 180px,#6163ff 190px,#765dff 200px,#8a58ff 210px,#9f52ff 220px,#b44dff 230px,#c947ff 240px,#dd41ff 250px,#f23bff 260px,#ff33f7 270px,#ff2ae5 280px,#ff21d5 290px,#ff1ac7 300px,#ff13bb 310px,#ff0db0 320px,#ff07a6 330px,#ff019d 340px,#ff0095 350px,#ff008e 360px,#ff0087 370px,#ff0081 380px,#ff007b 390px,#ff0076 400px,#ff0071 410px,#ff006c 420px,#ff0068 430px,#ff0064 440px,#ff0060 450px,#ff005d 460px,#ff005a 470px,#ff0057 480px,#ff0054 490px,#ff0051 500px,#ff004e 510px,#ff004c 520px,#ff0049 530px,#ff0047 540px,#ff0045 550px,#ff0043 560px,#ff0041 570px,#ff003f 580px,#ff003d 590px,#ff003b 600px)"></i><i style="top:172px;height:4px;background:linear-gradient(90deg,#00b1ff 0px,#00aeff 10px,#00aaff 20px,#00a6ff 30px,#00a2ff 40px,#009eff 50px,#009aff 60px,#0095ff 70px,#0091ff 80px,#008dff 90px,#0089ff 100px,#0084ff 110px,#0080ff 120px,#007bff 130px,#0076ff 140px,#0672ff 150px,#1e6dff 160px,#3368ff 170px,#4863ff 180px,#5d5eff 190px,#7159ff 200px,#8553ff 210px,#9a4eff 220px,#ae48ff 230px,#c243ff 240px,#d63dff 250px,#ea37ff 260px,#ff31ff 270px,#ff27ec 280px,#ff1fdc 290px,#ff18cd 300px,#ff11c1 310px,#ff0bb5 320px,#ff05ab 330px,#ff00a2 340px,#ff009a 350px,#ff0092 360px,#ff008b 370px,#ff0085 380px,#ff007f 390px,#ff007a 400px,#ff0075 410px,#ff0070 420px,#ff006c 430px,#ff0068 440px,#ff0064 450px,#ff0060 460px,#ff005d 470px,#ff005a 480px,#ff0057 490px,#ff0054 500px,#ff0051 510px,#ff004e 520px,#ff004c 530px,#ff004a 540px,#ff0047 550px,#ff0045 560px,#ff0043 570px,#ff0041 580px,#ff0040 590px,#ff003e 600px)"></i><i style="top:176px;height:4px;background:linear-gradient(90deg,#00abff 0px,#00a8ff 10px,#00a4ff 20px,#00a0ff 30px,#009cff 40px,#0098ff 50px,#0094ff 60px,#0090ff 70px,#008cff 80px,#0088ff 90px,#0083ff 100px,#007fff 110px,#007bff 120px,#0076ff 130px,#0071ff 140px,#046dff 150px,#1c68ff 160px,#3163ff 170px,#455eff 180px,#5959ff 190px,#6d54ff 200px,#814fff 210px,#944aff 220px,#a844ff 230px,#bc3fff 240px,#cf39ff 250px,#e333ff 260px,#f72dff 270px,#ff25f4 280px,#ff1de3 290px,#ff15d4 300px,#ff0fc7 310px,#ff08bb 320px,#ff02b1 330px,#ff00a7 340px,#ff009f 350px,#ff0097 360px,#ff0090 370px,#ff0089 380px,#ff0083 390px,#ff007e 400px,#ff0079 410px,#ff0074 420px,#ff006f 430px,#ff006b 440px,#ff0067 450px,#ff0063 460px,#ff0060 470px,#ff005d 480px,#ff005a 490px,#ff0057 500px,#ff0054 510px,#ff0051 520px,#ff004f 530px,#ff004c 540px,#ff004a 550px,#ff0048 560px,#ff0046 570px,#ff0044 580px,#ff0042 590px,#ff0040 600px)"></i><i style="top:180px;height:4px;background:linear-gradient(90deg,#00a6ff 0px,#00a2ff 10px,#009fff 20px,#009bff 30px,#0097ff 40px,#0093ff 50px,#008fff 60px,#008bff 70px,#0087ff 80px,#0083ff 90px,#007eff 100px,#007aff 110px,#0076ff 120px,#0071ff 130px,#006dff 140px,#0268ff 150px,#1a63ff 160px,#2e5fff 170px,#425aff 180px,#5655ff 190px,#6950ff 200px,#7c4bff 210px,#9045ff 220px,#a340ff 230px,#b63bff 240px,#c935ff 250px,#dc2fff 260px,#ef29ff 270px,#ff23fc 280px,#ff1bea 290px,#ff13db 300px,#ff0dcd 310px,#ff06c1 320px,#ff00b6 330px,#ff00ad 340px,#ff00a4 350px,#ff009c 360px,#ff0094 370px,#ff008e 380px,#ff0087 390px,#ff0082 400px,#ff007c 410px,#ff0077 420px,#ff0073 430px,#ff006f 440px,#ff006b 450px,#ff0067 460px,#ff0063 470px,#ff0060 480px,#ff005d 490px,#ff005a 500px,#ff0057 510px,#ff0054 520px,#ff0051 530px,#ff004f 540px,#ff004d 550px,#ff004a 560px,#ff0048 570px,#ff0046 580px,#ff0044 590px,#ff0042 600px)"></i><i style="top:184px;height:4px;background:linear-gradient(90deg,#00a1ff 0px,#009dff 10px,#0099ff 20px,#0096ff 30px,#0092ff 40px,#008eff 50px,#008aff 60px,#0086ff 70px,#0082ff 80px,#007eff 90px,#007aff 100px,#0075ff 110px,#0071ff 120px,#006dff 130px,#0068ff 140px,#0164ff 150px,#185fff 160px,#2c5aff 170px,#4056ff 180px,#5351ff 190px,#664cff 200px,#7847ff 210px,#8b42ff 220px,#9d3cff 230px,#b037ff 240px,#c331ff 250px,#d52cff 260px,#e826ff 270px,#fb20ff 280px,#ff18f1 290px,#ff11e1 300px,#ff0ad3 310px,#ff04c7 320px,#ff00bc 330px,#ff00b2 340px,#ff00a9 350px,#ff00a0 360px,#ff0099 370px,#ff0092 380px,#ff008c 390px,#ff0086 400px,#ff0080 410px,#ff007b 420px,#ff0076 430px,#ff0072 440px,#ff006e 450px,#ff006a 460px,#ff0066 470px,#ff0063 480px,#ff0060 490px,#ff005c 500px,#ff0059 510px,#ff0057 520px,#ff0054 530px,#ff0052 540px,#ff004f 550px,#ff004d 560px,#ff004b 570px,#ff0049 580px,#ff0047 590px,#ff0045 600px)"></i><i style="top:188px;height:4px;background:linear-gradient(90deg,#009cff 0px,#0098ff 10px,#0094ff 20px,#0091ff 30px,#008dff 40px,#0089ff 50px,#0085ff 60px,#0081ff 70px,#007dff 80px,#0079ff 90px,#0075ff 100px,#0071ff 110px,#006dff 120px,#0068ff 130px,#0064ff 140px,#005fff 150px,#165bff 160px,#2a56ff 170px,#3d52ff 180px,#504dff 190px,#6248ff 200px,#7443ff 210px,#863eff 220px,#9939ff 230px,#ab33ff 240px,#bd2eff 250px,#cf28ff 260px,#e123ff 270px,#f41dff 280px,#ff16f8 290px,#ff0fe8 300px,#ff08da 310px,#ff01cd 320px,#ff00c1 330px,#ff00b7 340px,#ff00ae 350px,#ff00a5 360px,#ff009d 370px,#ff0096 380px,#ff0090 390px,#ff008a 400px,#ff0084 410px,#ff007f 420px,#ff007a 430px,#ff0075 440px,#ff0071 450px,#ff006d 460px,#ff0069 470px,#ff0066 480px,#ff0063 490px,#ff005f 500px,#ff005c 510px,#ff0059 520px,#ff0057 530px,#ff0054 540px,#ff0052 550px,#ff004f 560px,#ff004d 570px,#ff004b 580px,#ff0049 590px,#ff0047 600px)"></i><i style="top:192px;height:4px;background:linear-gradient(90deg,#0097ff 0px,#0093ff 10px,#0090ff 20px,#008cff 30px,#0088ff 40px,#0084ff 50px,#0081ff 60px,#007dff 70px,#0079ff 80px,#0075ff 90px,#0071ff 100px,#006dff 110px,#0068ff 120px,#0064ff 130px,#0060ff 140px,#005bff 150px,#1457ff 160px,#2852ff 170px,#3a4eff 180px,#4d49ff 190px,#5f44ff 200px,#703fff 210px,#823aff 220px,#9435ff 230px,#a630ff 240px,#b72bff 250px,#c925ff 260px,#db1fff 270px,#ed1aff 280px,#ff14ff 290px,#ff0cef 300px,#ff06e0 310px,#ff00d3 320px,#ff00c7 330px,#ff00bc 340px,#ff00b3 350px,#ff00aa 360px,#ff00a2 370px,#ff009b 380px,#ff0094 390px,#ff008e 400px,#ff0088 410px,#ff0083 420px,#ff007e 430px,#ff0079 440px,#ff0075 450px,#ff0070 460px,#ff006d 470px,#ff0069 480px,#ff0065 490px,#ff0062 500px,#ff005f 510px,#ff005c 520px,#ff0059 530px,#ff0057 540px,#ff0054 550px,#ff0052 560px,#ff0050 570px,#ff004d 580px,#ff004b 590px,#ff0049 600px)"></i><i style="top:196px;height:4px;background:linear-gradient(90deg,#0092ff 0px,#008fff 10px,#008bff 20px,#0087ff 30px,#0084ff 40px,#0080ff 50px,#007cff 60px,#0078ff 70px,#0074ff 80px,#0071ff 90px,#006dff 100px,#0068ff 110px,#0064ff 120px,#0060ff 130px,#005cff 140px,#0058ff 150px,#1253ff 160px,#254fff 170px,#384aff 180px,#4a45ff 190px,#5b41ff 200px,#6d3cff 210px,#7e37ff 220px,#9032ff 230px,#a12dff 240px,#b228ff 250px,#c322ff 260px,#d51cff 270px,#e617ff 280px,#f811ff 290px,#ff0af5 300px,#ff03e6 310px,#ff00d9 320px,#ff00cc 330px,#ff00c2 340px,#ff00b8 350px,#ff00af 360px,#ff00a7 370px,#ff009f 380px,#ff0098 390px,#ff0092 400px,#ff008c 410px,#ff0086 420px,#ff0081 430px,#ff007c 440px,#ff0078 450px,#ff0074 460px,#ff0070 470px,#ff006c 480px,#ff0068 490px,#ff0065 500px,#ff0062 510px,#ff005f 520px,#ff005c 530px,#ff0059 540px,#ff0057 550px,#ff0054 560px,#ff0052 570px,#ff0050 580px,#ff004e 590px,#ff004b 600px)"></i><i style="top:200px;height:4px;background:linear-gradient(90deg,#008eff 0px,#008aff 10px,#0087ff 20px,#0083ff 30px,#007fff 40px,#007cff 50px,#0078ff 60px,#0074ff 70px,#0070ff 80px,#006cff 90px,#0069ff 100px,#0065ff 110px,#0060ff 120px,#005cff 130px,#0058ff 140px,#0054ff 150px,#1150ff 160px,#234bff 170px,#3647ff 180px,#4742ff 190px,#583dff 200px,#6939ff 210px,#7a34ff 220px,#8b2fff 230px,#9c2aff 240px,#ad24ff 250px,#be1fff 260px,#cf1aff 270px,#e014ff 280px,#f10eff 290px,#ff07fc 300px,#ff00ec 310px,#ff00de 320px,#ff00d2 330px,#ff00c7 340px,#ff00bd 350px,#ff00b3 360px,#ff00ab 370px,#ff00a3 380px,#ff009c 390px,#ff0096 400px,#ff0090 410px,#ff008a 420px,#ff0085 430px,#ff0080 440px,#ff007b 450px,#ff0077 460px,#ff0073 470px,#ff006f 480px,#ff006b 490px,#ff0068 500px,#ff0065 510px,#ff0062 520px,#ff005f 530px,#ff005c 540px,#ff0059 550px,#ff0057 560px,#ff0054 570px,#ff0052 580px,#ff0050 590px,#ff004e 600px)"></i><i style="top:204px;height:4px;background:linear-gradient(90deg,#0089ff 0px,#0086ff 10px,#0082ff 20px,#007fff 30px,#007bff 40px,#0078ff 50px,#0074ff 60px,#0070ff 70px,#006cff 80px,#0069ff 90px,#0065ff 100px,#0061ff 110px,#005dff 120px,#0059ff 130px,#0055ff 140px,#0050ff 150px,#0f4cff 160px,#2248ff 170px,#3343ff 180px,#443fff 190px,#553aff 200px,#6635ff 210px,#7731ff 220px,#872cff 230px,#9827ff 240px,#a822ff 250px,#b91cff 260px,#c917ff 270px,#da11ff 280px,#ea0bff 290px,#fb05ff 300px,#ff00f3 310px,#ff00e4 320px,#ff00d8 330px,#ff00cc 340px,#ff00c2 350px,#ff00b8 360px,#ff00b0 370px,#ff00a8 380px,#ff00a0 390px,#ff009a 400px,#ff0094 410px,#ff008e 420px,#ff0088 430px,#ff0083 440px,#ff007f 450px,#ff007a 460px,#ff0076 470px,#ff0072 480px,#ff006e 490px,#ff006b 500px,#ff0068 510px,#ff0064 520px,#ff0061 530px,#ff005f 540px,#ff005c 550px,#ff0059 560px,#ff0057 570px,#ff0054 580px,#ff0052 590px,#ff0050 600px)"></i><i style="top:208px;height:4px;background:linear-gradient(90deg,#0085ff 0px,#0082ff 10px,#007eff 20px,#007bff 30px,#0077ff 40px,#0074ff 50px,#0070ff 60px,#006cff 70px,#0069ff 80px,#0065ff 90px,#0061ff 100px,#005dff 110px,#0059ff 120px,#0055ff 130px,#0051ff 140px,#004dff 150px,#0d49ff 160px,#2044ff 170px,#3140ff 180px,#423cff 190px,#5337ff 200px,#6332ff 210px,#732eff 220px,#8329ff 230px,#9424ff 240px,#a41fff 250px,#b41aff 260px,#c414ff 270px,#d40eff 280px,#e408ff 290px,#f502ff 300px,#ff00f9 310px,#ff00ea 320px,#ff00dd 330px,#ff00d1 340px,#ff00c7 350px,#ff00bd 360px,#ff00b4 370px,#ff00ac 380px,#ff00a5 390px,#ff009e 400px,#ff0097 410px,#ff0091 420px,#ff008c 430px,#ff0087 440px,#ff0082 450px,#ff007d 460px,#ff0079 470px,#ff0075 480px,#ff0071 490px,#ff006e 500px,#ff006a 510px,#ff0067 520px,#ff0064 530px,#ff0061 540px,#ff005e 550px,#ff005c 560px,#ff0059 570px,#ff0057 580px,#ff0055 590px,#ff0052 600px)"></i><i style="top:212px;height:4px;background:linear-gradient(90deg,#0081ff 0px,#007eff 10px,#007aff 20px,#0077ff 30px,#0074ff 40px,#0070ff 50px,#006cff 60px,#0069ff 70px,#0065ff 80px,#0061ff 90px,#005dff 100px,#005aff 110px,#0056ff 120px,#0052ff 130px,#004eff 140px,#004aff 150px,#0c45ff 160px,#1e41ff 170px,#2f3dff 180px,#4039ff 190px,#5034ff 200px,#602fff 210px,#702bff 220px,#8026ff 230px,#9021ff 240px,#9f1cff 250px,#af17ff 260px,#bf11ff 270px,#cf0cff 280px,#df06ff 290px,#ee00ff 300px,#fe00ff 310px,#ff00f0 320px,#ff00e3 330px,#ff00d7 340px,#ff00cc 350px,#ff00c2 360px,#ff00b9 370px,#ff00b1 380px,#ff00a9 390px,#ff00a2 400px,#ff009b 410px,#ff0095 420px,#ff0090 430px,#ff008a 440px,#ff0085 450px,#ff0081 460px,#ff007c 470px,#ff0078 480px,#ff0074 490px,#ff0071 500px,#ff006d 510px,#ff006a 520px,#ff0067 530px,#ff0064 540px,#ff0061 550px,#ff005e 560px,#ff005c 570px,#ff0059 580px,#ff0057 590px,#ff0055 600px)"></i><i style="top:216px;height:4px;background:linear-gradient(90deg,#007dff 0px,#007aff 10px,#0077ff 20px,#0073ff 30px,#0070ff 40px,#006cff 50px,#0069ff 60px,#0065ff 70px,#0062ff 80px,#005eff 90px,#005aff 100px,#0056ff 110px,#0052ff 120px,#004fff 130px,#004bff 140px,#0046ff 150px,#0a42ff 160px,#1c3eff 170px,#2d3aff 180px,#3d36ff 190px,#4d31ff 200px,#5d2dff 210px,#6d28ff 220px,#7c23ff 230px,#8c1eff 240px,#9b19ff 250px,#ab14ff 260px,#ba0fff 270px,#c909ff 280px,#d903ff 290px,#e900ff 300px,#f800ff 310px,#ff00f7 320px,#ff00e9 330px,#ff00dc 340px,#ff00d1 350px,#ff00c7 360px,#ff00bd 370px,#ff00b5 380px,#ff00ad 390px,#ff00a6 400px,#ff009f 410px,#ff0099 420px,#ff0093 430px,#ff008e 440px,#ff0089 450px,#ff0084 460px,#ff0080 470px,#ff007b 480px,#ff0077 490px,#ff0074 500px,#ff0070 510px,#ff006d 520px,#ff0069 530px,#ff0066 540px,#ff0064 550px,#ff0061 560px,#ff005e 570px,#ff005c 580px,#ff0059 590px,#ff0057 600px)"></i><i style="top:220px;height:4px;background:linear-gradient(90deg,#007aff 0px,#0076ff 10px,#0073ff 20px,#0070ff 30px,#006cff 40px,#0069ff 50px,#0065ff 60px,#0062ff 70px,#005eff 80px,#005bff 90px,#0057ff 100px,#0053ff 110px,#004fff 120px,#004bff 130px,#0047ff 140px,#0043ff 150px,#093fff 160px,#1b3bff 170px,#2b37ff 180px,#3b33ff 190px,#4b2eff 200px,#5a2aff 210px,#6a25ff 220px,#7921ff 230px,#881cff 240px,#9717ff 250px,#a612ff 260px,#b50dff 270px,#c407ff 280px,#d400ff 290px,#e300ff 300px,#f200ff 310px,#ff00fd 320px,#ff00ee 330px,#ff00e2 340px,#ff00d6 350px,#ff00cc 360px,#ff00c2 370px,#ff00b9 380px,#ff00b1 390px,#ff00aa 400px,#ff00a3 410px,#ff009d 420px,#ff0097 430px,#ff0091 440px,#ff008c 450px,#ff0087 460px,#ff0083 470px,#ff007e 480px,#ff007a 490px,#ff0076 500px,#ff0073 510px,#ff006f 520px,#ff006c 530px,#ff0069 540px,#ff0066 550px,#ff0063 560px,#ff0061 570px,#ff005e 580px,#ff005c 590px,#ff0059 600px)"></i><i style="top:224px;height:4px;background:linear-gradient(90deg,#0076ff 0px,#0073ff 10px,#0070ff 20px,#006cff 30px,#0069ff 40px,#0065ff 50px,#0062ff 60px,#005eff 70px,#005bff 80px,#0057ff 90px,#0054ff 100px,#0050ff 110px,#004cff 120px,#0048ff 130px,#0044ff 140px,#0041ff 150px,#083dff 160px,#1938ff 170px,#2934ff 180px,#3930ff 190px,#482cff 200px,#5827ff 210px,#6723ff 220px,#761eff 230px,#8419ff 240px,#9315ff 250px,#a20fff 260px,#b10aff 270px,#c004ff 280px,#cf00ff 290px,#dd00ff 300px,#ec00ff 310px,#fb00ff 320px,#ff00f4 330px,#ff00e7 340px,#ff00db 350px,#ff00d1 360px,#ff00c7 370px,#ff00be 380px,#ff00b6 390px,#ff00ae 400px,#ff00a7 410px,#ff00a0 420px,#ff009a 430px,#ff0095 440px,#ff008f 450px,#ff008b 460px,#ff0086 470px,#ff0081 480px,#ff007d 490px,#ff0079 500px,#ff0076 510px,#ff0072 520px,#ff006f 530px,#ff006c 540px,#ff0069 550px,#ff0066 560px,#ff0063 570px,#ff0060 580px,#ff005e 590px,#ff005b 600px)"></i><i style="top:228px;height:4px;background:linear-gradient(90deg,#0073ff 0px,#0070ff 10px,#006cff 20px,#0069ff 30px,#0066ff 40px,#0062ff 50px,#005fff 60px,#005bff 70px,#0058ff 80px,#0054ff 90px,#0051ff 100px,#004dff 110px,#0049ff 120px,#0045ff 130px,#0042ff 140px,#003eff 150px,#063aff 160px,#1836ff 170px,#2832ff 180px,#372dff 190px,#4629ff 200px,#5525ff 210px,#6420ff 220px,#721cff 230px,#8117ff 240px,#9012ff 250px,#9e0dff 260px,#ad08ff 270px,#bb02ff 280px,#ca00ff 290px,#d800ff 300px,#e700ff 310px,#f500ff 320px,#ff00fa 330px,#ff00ec 340px,#ff00e0 350px,#ff00d5 360px,#ff00cb 370px,#ff00c2 380px,#ff00ba 390px,#ff00b2 400px,#ff00ab 410px,#ff00a4 420px,#ff009e 430px,#ff0098 440px,#ff0093 450px,#ff008e 460px,#ff0089 470px,#ff0085 480px,#ff0080 490px,#ff007c 500px,#ff0079 510px,#ff0075 520px,#ff0072 530px,#ff006e 540px,#ff006b 550px,#ff0068 560px,#ff0065 570px,#ff0063 580px,#ff0060 590px,#ff005e 600px)"></i><i style="top:232px;height:4px;background:linear-gradient(90deg,#006fff 0px,#006cff 10px,#0069ff 20px,#0066ff 30px,#0062ff 40px,#005fff 50px,#005cff 60px,#0058ff 70px,#0055ff 80px,#0051ff 90px,#004eff 100px,#004aff 110px,#0046ff 120px,#0043ff 130px,#003fff 140px,#003bff 150px,#0537ff 160px,#1633ff 170px,#262fff 180px,#352bff 190px,#4427ff 200px,#5322ff 210px,#611eff 220px,#6f19ff 230px,#7e15ff 240px,#8c10ff 250px,#9a0bff 260px,#a805ff 270px,#b700ff 280px,#c500ff 290px,#d300ff 300px,#e200ff 310px,#f000ff 320px,#fe00ff 330px,#ff00f2 340px,#ff00e6 350px,#ff00da 360px,#ff00d0 370px,#ff00c7 380px,#ff00be 390px,#ff00b6 400px,#ff00af 410px,#ff00a8 420px,#ff00a2 430px,#ff009c 440px,#ff0096 450px,#ff0091 460px,#ff008c 470px,#ff0088 480px,#ff0083 490px,#ff007f 500px,#ff007b 510px,#ff0078 520px,#ff0074 530px,#ff0071 540px,#ff006e 550px,#ff006b 560px,#ff0068 570px,#ff0065 580px,#ff0063 590px,#ff0060 600px)"></i><i style="top:236px;height:4px;background:linear-gradient(90deg,#006cff 0px,#0069ff 10px,#0066ff 20px,#0063ff 30px,#005fff 40px,#005cff 50px,#0059ff 60px,#0055ff 70px,#0052ff 80px,#004eff 90px,#004bff 100px,#0047ff 110px,#0044ff 120px,#0040ff 130px,#003cff 140px,#0038ff 150px,#0434ff 160px,#1531ff 170px,#242dff 180px,#3328ff 190px,#4224ff 200px,#5020ff 210px,#5e1cff 220px,#6c17ff 230px,#7b12ff 240px,#890eff 250px,#9709ff 260px,#a403ff 270px,#b200ff 280px,#c000ff 290px,#ce00ff 300px,#dc00ff 310px,#ea00ff 320px,#f900ff 330px,#ff00f7 340px,#ff00eb 350px,#ff00df 360px,#ff00d5 370px,#ff00cb 380px,#ff00c2 390px,#ff00ba 400px,#ff00b3 410px,#ff00ac 420px,#ff00a5 430px,#ff009f 440px,#ff009a 450px,#ff0094 460px,#ff008f 470px,#ff008b 480px,#ff0086 490px,#ff0082 500px,#ff007e 510px,#ff007a 520px,#ff0077 530px,#ff0074 540px,#ff0070 550px,#ff006d 560px,#ff006a 570px,#ff0068 580px,#ff0065 590px,#ff0062 600px)"></i><i style="top:240px;height:4px;background:linear-gradient(90deg,#0069ff 0px,#0066ff 10px,#0063ff 20px,#0060ff 30px,#005cff 40px,#0059ff 50px,#0056ff 60px,#0052ff 70px,#004fff 80px,#004cff 90px,#0048ff 100px,#0045ff 110px,#0041ff 120px,#003dff 130px,#003aff 140px,#0036ff 150px,#0232ff 160px,#132eff 170px,#232aff 180px,#3126ff 190px,#4022ff 200px,#4e1eff 210px,#5c19ff 220px,#6a15ff 230px,#7710ff 240px,#850bff 250px,#9306ff 260px,#a101ff 270px,#ae00ff 280px,#bc00ff 290px,#ca00ff 300px,#d800ff 310px,#e500ff 320px,#f300ff 330px,#ff00fd 340px,#ff00f0 350px,#ff00e4 360px,#ff00da 370px,#ff00d0 380px,#ff00c7 390px,#ff00be 400px,#ff00b7 410px,#ff00b0 420px,#ff00a9 430px,#ff00a3 440px,#ff009d 450px,#ff0098 460px,#ff0093 470px,#ff008e 480px,#ff0089 490px,#ff0085 500px,#ff0081 510px,#ff007d 520px,#ff007a 530px,#ff0076 540px,#ff0073 550px,#ff0070 560px,#ff006d 570px,#ff006a 580px,#ff0067 590px,#ff0065 600px)"></i><i style="top:244px;height:4px;background:linear-gradient(90deg,#0066ff 0px,#0063ff 10px,#0060ff 20px,#005dff 30px,#005aff 40px,#0056ff 50px,#0053ff 60px,#0050ff 70px,#004cff 80px,#0049ff 90px,#0045ff 100px,#0042ff 110px,#003eff 120px,#003bff 130px,#0037ff 140px,#0033ff 150px,#0130ff 160px,#122cff 170px,#2128ff 180px,#3024ff 190px,#3e20ff 200px,#4c1bff 210px,#5917ff 220px,#6713ff 230px,#750eff 240px,#8209ff 250px,#9004ff 260px,#9d00ff 270px,#aa00ff 280px,#b800ff 290px,#c500ff 300px,#d300ff 310px,#e000ff 320px,#ee00ff 330px,#fb00ff 340px,#ff00f5 350px,#ff00e9 360px,#ff00de 370px,#ff00d4 380px,#ff00cb 390px,#ff00c3 400px,#ff00bb 410px,#ff00b3 420px,#ff00ad 430px,#ff00a6 440px,#ff00a1 450px,#ff009b 460px,#ff0096 470px,#ff0091 480px,#ff008c 490px,#ff0088 500px,#ff0084 510px,#ff0080 520px,#ff007c 530px,#ff0079 540px,#ff0075 550px,#ff0072 560px,#ff006f 570px,#ff006c 580px,#ff006a 590px,#ff0067 600px)"></i><i style="top:248px;height:4px;background:linear-gradient(90deg,#0063ff 0px,#0060ff 10px,#005dff 20px,#005aff 30px,#0057ff 40px,#0054ff 50px,#0050ff 60px,#004dff 70px,#004aff 80px,#0046ff 90px,#0043ff 100px,#003fff 110px,#003cff 120px,#0038ff 130px,#0035ff 140px,#0031ff 150px,#002dff 160px,#1129ff 170px,#2026ff 180px,#2e22ff 190px,#3c1dff 200px,#4919ff 210px,#5715ff 220px,#6411ff 230px,#720cff 240px,#7f07ff 250px,#8c02ff 260px,#9900ff 270px,#a700ff 280px,#b400ff 290px,#c100ff 300px,#ce00ff 310px,#dc00ff 320px,#e900ff 330px,#f600ff 340px,#ff00fb 350px,#ff00ee 360px,#ff00e3 370px,#ff00d9 380px,#ff00cf 390px,#ff00c7 400px,#ff00bf 410px,#ff00b7 420px,#ff00b0 430px,#ff00aa 440px,#ff00a4 450px,#ff009e 460px,#ff0099 470px,#ff0094 480px,#ff008f 490px,#ff008b 500px,#ff0087 510px,#ff0083 520px,#ff007f 530px,#ff007b 540px,#ff0078 550px,#ff0075 560px,#ff0072 570px,#ff006f 580px,#ff006c 590px,#ff0069 600px)"></i><i style="top:252px;height:4px;background:linear-gradient(90deg,#0060ff 0px,#005dff 10px,#005aff 20px,#0057ff 30px,#0054ff 40px,#0051ff 50px,#004eff 60px,#004aff 70px,#0047ff 80px,#0044ff 90px,#0040ff 100px,#003dff 110px,#0039ff 120px,#0036ff 130px,#0032ff 140px,#002fff 150px,#002bff 160px,#0f27ff 170px,#1e23ff 180px,#2c1fff 190px,#3a1bff 200px,#4717ff 210px,#5513ff 220px,#620fff 230px,#6f0aff 240px,#7c05ff 250px,#8900ff 260px,#9600ff 270px,#a300ff 280px,#b000ff 290px,#bd00ff 300px,#ca00ff 310px,#d700ff 320px,#e400ff 330px,#f100ff 340px,#fe00ff 350px,#ff00f3 360px,#ff00e8 370px,#ff00dd 380px,#ff00d4 390px,#ff00cb 400px,#ff00c3 410px,#ff00bb 420px,#ff00b4 430px,#ff00ae 440px,#ff00a7 450px,#ff00a2 460px,#ff009c 470px,#ff0097 480px,#ff0092 490px,#ff008e 500px,#ff008a 510px,#ff0086 520px,#ff0082 530px,#ff007e 540px,#ff007b 550px,#ff0077 560px,#ff0074 570px,#ff0071 580px,#ff006e 590px,#ff006b 600px)"></i><i style="top:256px;height:4px;background:linear-gradient(90deg,#005eff 0px,#005bff 10px,#0058ff 20px,#0055ff 30px,#0051ff 40px,#004eff 50px,#004bff 60px,#0048ff 70px,#0045ff 80px,#0041ff 90px,#003eff 100px,#003bff 110px,#0037ff 120px,#0034ff 130px,#0030ff 140px,#002cff 150px,#0029ff 160px,#0e25ff 170px,#1d21ff 180px,#2b1dff 190px,#3819ff 200px,#4515ff 210px,#5311ff 220px,#5f0dff 230px,#6c08ff 240px,#7903ff 250px,#8600ff 260px,#9300ff 270px,#9f00ff 280px,#ac00ff 290px,#b900ff 300px,#c600ff 310px,#d200ff 320px,#df00ff 330px,#ec00ff 340px,#f900ff 350px,#ff00f8 360px,#ff00ed 370px,#ff00e2 380px,#ff00d8 390px,#ff00cf 400px,#ff00c7 410px,#ff00bf 420px,#ff00b8 430px,#ff00b1 440px,#ff00ab 450px,#ff00a5 460px,#ff009f 470px,#ff009a 480px,#ff0095 490px,#ff0091 500px,#ff008c 510px,#ff0088 520px,#ff0084 530px,#ff0081 540px,#ff007d 550px,#ff007a 560px,#ff0077 570px,#ff0073 580px,#ff0071 590px,#ff006e 600px)"></i><i style="top:260px;height:4px;background:linear-gradient(90deg,#005bff 0px,#0058ff 10px,#0055ff 20px,#0052ff 30px,#004fff 40px,#004cff 50px,#0049ff 60px,#0045ff 70px,#0042ff 80px,#003fff 90px,#003cff 100px,#0038ff 110px,#0035ff 120px,#0031ff 130px,#002eff 140px,#002aff 150px,#0027ff 160px,#0d23ff 170px,#1b1fff 180px,#291bff 190px,#3617ff 200px,#4313ff 210px,#500fff 220px,#5d0bff 230px,#6a06ff 240px,#7601ff 250px,#8300ff 260px,#9000ff 270px,#9c00ff 280px,#a900ff 290px,#b500ff 300px,#c200ff 310px,#ce00ff 320px,#db00ff 330px,#e700ff 340px,#f400ff 350px,#ff00fd 360px,#ff00f1 370px,#ff00e6 380px,#ff00dc 390px,#ff00d3 400px,#ff00cb 410px,#ff00c3 420px,#ff00bb 430px,#ff00b5 440px,#ff00ae 450px,#ff00a8 460px,#ff00a3 470px,#ff009d 480px,#ff0098 490px,#ff0094 500px,#ff008f 510px,#ff008b 520px,#ff0087 530px,#ff0083 540px,#ff0080 550px,#ff007c 560px,#ff0079 570px,#ff0076 580px,#ff0073 590px,#ff0070 600px)"></i><i style="top:264px;height:4px;background:linear-gradient(90deg,#0058ff 0px,#0055ff 10px,#0052ff 20px,#004fff 30px,#004cff 40px,#0049ff 50px,#0046ff 60px,#0043ff 70px,#0040ff 80px,#003dff 90px,#0039ff 100px,#0036ff 110px,#0033ff 120px,#002fff 130px,#002cff 140px,#0028ff 150px,#0025ff 160px,#0c21ff 170px,#1a1dff 180px,#2819ff 190px,#3515ff 200px,#4211ff 210px,#4e0dff 220px,#5b09ff 230px,#6704ff 240px,#7400ff 250px,#8000ff 260px,#8c00ff 270px,#9900ff 280px,#a500ff 290px,#b100ff 300px,#be00ff 310px,#ca00ff 320px,#d600ff 330px,#e300ff 340px,#ef00ff 350px,#fc00ff 360px,#ff00f6 370px,#ff00eb 380px,#ff00e1 390px,#ff00d7 400px,#ff00cf 410px,#ff00c7 420px,#ff00bf 430px,#ff00b8 440px,#ff00b2 450px,#ff00ac 460px,#ff00a6 470px,#ff00a1 480px,#ff009b 490px,#ff0097 500px,#ff0092 510px,#ff008e 520px,#ff008a 530px,#ff0086 540px,#ff0082 550px,#ff007f 560px,#ff007b 570px,#ff0078 580px,#ff0075 590px,#ff0072 600px)"></i><i style="top:268px;height:4px;background:linear-gradient(90deg,#0056ff 0px,#0053ff 10px,#0050ff 20px,#004dff 30px,#004aff 40px,#0047ff 50px,#0044ff 60px,#0041ff 70px,#003eff 80px,#003aff 90px,#0037ff 100px,#0034ff 110px,#0030ff 120px,#002dff 130px,#002aff 140px,#0026ff 150px,#0023ff 160px,#0b1fff 170px,#191bff 180px,#2617ff 190px,#3313ff 200px,#400fff 210px,#4c0bff 220px,#5907ff 230px,#6502ff 240px,#7100ff 250px,#7d00ff 260px,#8900ff 270px,#9600ff 280px,#a200ff 290px,#ae00ff 300px,#ba00ff 310px,#c600ff 320px,#d200ff 330px,#de00ff 340px,#eb00ff 350px,#f700ff 360px,#ff00fb 370px,#ff00f0 380px,#ff00e5 390px,#ff00dc 400px,#ff00d3 410px,#ff00cb 420px,#ff00c3 430px,#ff00bc 440px,#ff00b5 450px,#ff00af 460px,#ff00a9 470px,#ff00a4 480px,#ff009f 490px,#ff009a 500px,#ff0095 510px,#ff0091 520px,#ff008d 530px,#ff0089 540px,#ff0085 550px,#ff0081 560px,#ff007e 570px,#ff007b 580px,#ff0078 590px,#ff0075 600px)"></i><i style="top:272px;height:4px;background:linear-gradient(90deg,#0053ff 0px,#0051ff 10px,#004eff 20px,#004bff 30px,#0048ff 40px,#0045ff 50px,#0042ff 60px,#003fff 70px,#003bff 80px,#0038ff 90px,#0035ff 100px,#0032ff 110px,#002eff 120px,#002bff 130px,#0028ff 140px,#0024ff 150px,#0021ff 160px,#0a1dff 170px,#1819ff 180px,#2515ff 190px,#3212ff 200px,#3e0eff 210px,#4a09ff 220px,#5705ff 230px,#6300ff 240px,#6f00ff 250px,#7b00ff 260px,#8700ff 270px,#9200ff 280px,#9e00ff 290px,#aa00ff 300px,#b600ff 310px,#c200ff 320px,#ce00ff 330px,#da00ff 340px,#e600ff 350px,#f200ff 360px,#fe00ff 370px,#ff00f4 380px,#ff00ea 390px,#ff00e0 400px,#ff00d7 410px,#ff00ce 420px,#ff00c7 430px,#ff00bf 440px,#ff00b9 450px,#ff00b2 460px,#ff00ac 470px,#ff00a7 480px,#ff00a2 490px,#ff009d 500px,#ff0098 510px,#ff0093 520px,#ff008f 530px,#ff008b 540px,#ff0087 550px,#ff0084 560px,#ff0080 570px,#ff007d 580px,#ff007a 590px,#ff0077 600px)"></i><i style="top:276px;height:4px;background:linear-gradient(90deg,#0051ff 0px,#004eff 10px,#004bff 20px,#0048ff 30px,#0045ff 40px,#0042ff 50px,#003fff 60px,#003cff 70px,#0039ff 80px,#0036ff 90px,#0033ff 100px,#0030ff 110px,#002cff 120px,#0029ff 130px,#0026ff 140px,#0022ff 150px,#001fff 160px,#091bff 170px,#1617ff 180px,#2314ff 190px,#3010ff 200px,#3c0cff 210px,#4807ff 220px,#5403ff 230px,#6000ff 240px,#6c00ff 250px,#7800ff 260px,#8400ff 270px,#9000ff 280px,#9b00ff 290px,#a700ff 300px,#b300ff 310px,#be00ff 320px,#ca00ff 330px,#d600ff 340px,#e200ff 350px,#ed00ff 360px,#f900ff 370px,#ff00f9 380px,#ff00ee 390px,#ff00e4 400px,#ff00db 410px,#ff00d2 420px,#ff00ca 430px,#ff00c3 440px,#ff00bc 450px,#ff00b6 460px,#ff00b0 470px,#ff00aa 480px,#ff00a5 490px,#ff00a0 500px,#ff009b 510px,#ff0096 520px,#ff0092 530px,#ff008e 540px,#ff008a 550px,#ff0086 560px,#ff0083 570px,#ff007f 580px,#ff007c 590px,#ff0079 600px)"></i><i style="top:280px;height:4px;background:linear-gradient(90deg,#004fff 0px,#004cff 10px,#0049ff 20px,#0046ff 30px,#0043ff 40px,#0040ff 50px,#003dff 60px,#003aff 70px,#0037ff 80px,#0034ff 90px,#0031ff 100px,#002eff 110px,#002aff 120px,#0027ff 130px,#0024ff 140px,#0020ff 150px,#001dff 160px,#0719ff 170px,#1516ff 180px,#2212ff 190px,#2f0eff 200px,#3b0aff 210px,#4706ff 220px,#5201ff 230px,#5e00ff 240px,#6a00ff 250px,#7500ff 260px,#8100ff 270px,#8d00ff 280px,#9800ff 290px,#a400ff 300px,#af00ff 310px,#bb00ff 320px,#c600ff 330px,#d200ff 340px,#dd00ff 350px,#e900ff 360px,#f500ff 370px,#ff00fe 380px,#ff00f3 390px,#ff00e8 400px,#ff00df 410px,#ff00d6 420px,#ff00ce 430px,#ff00c7 440px,#ff00c0 450px,#ff00b9 460px,#ff00b3 470px,#ff00ad 480px,#ff00a8 490px,#ff00a3 500px,#ff009e 510px,#ff0099 520px,#ff0095 530px,#ff0091 540px,#ff008d 550px,#ff0089 560px,#ff0085 570px,#ff0082 580px,#ff007f 590px,#ff007b 600px)"></i><i style="top:284px;height:4px;background:linear-gradient(90deg,#004cff 0px,#004aff 10px,#0047ff 20px,#0044ff 30px,#0041ff 40px,#003eff 50px,#003bff 60px,#0038ff 70px,#0035ff 80px,#0032ff 90px,#002fff 100px,#002cff 110px,#0028ff 120px,#0025ff 130px,#0022ff 140px,#001eff 150px,#001bff 160px,#0617ff 170px,#1414ff 180px,#2110ff 190px,#2d0cff 200px,#3908ff 210px,#4504ff 220px,#5100ff 230px,#5c00ff 240px,#6800ff 250px,#7300ff 260px,#7e00ff 270px,#8a00ff 280px,#9500ff 290px,#a100ff 300px,#ac00ff 310px,#b700ff 320px,#c300ff 330px,#ce00ff 340px,#d900ff 350px,#e500ff 360px,#f000ff 370px,#fc00ff 380px,#ff00f7 390px,#ff00ed 400px,#ff00e3 410px,#ff00da 420px,#ff00d2 430px,#ff00ca 440px,#ff00c3 450px,#ff00bc 460px,#ff00b6 470px,#ff00b0 480px,#ff00ab 490px,#ff00a5 500px,#ff00a1 510px,#ff009c 520px,#ff0097 530px,#ff0093 540px,#ff008f 550px,#ff008b 560px,#ff0088 570px,#ff0084 580px,#ff0081 590px,#ff007e 600px)"></i><i style="top:288px;height:4px;background:linear-gradient(90deg,#004aff 0px,#0048ff 10px,#0045ff 20px,#0042ff 30px,#003fff 40px,#003cff 50px,#0039ff 60px,#0036ff 70px,#0033ff 80px,#0030ff 90px,#002dff 100px,#002aff 110px,#0027ff 120px,#0023ff 130px,#0020ff 140px,#001dff 150px,#0019ff 160px,#0516ff 170px,#1312ff 180px,#200eff 190px,#2c0aff 200px,#3806ff 210px,#4302ff 220px,#4f00ff 230px,#5a00ff 240px,#6500ff 250px,#7100ff 260px,#7c00ff 270px,#8700ff 280px,#9200ff 290px,#9d00ff 300px,#a900ff 310px,#b400ff 320px,#bf00ff 330px,#ca00ff 340px,#d500ff 350px,#e100ff 360px,#ec00ff 370px,#f700ff 380px,#ff00fb 390px,#ff00f1 400px,#ff00e7 410px,#ff00de 420px,#ff00d6 430px,#ff00ce 440px,#ff00c7 450px,#ff00c0 460px,#ff00b9 470px,#ff00b3 480px,#ff00ae 490px,#ff00a8 500px,#ff00a3 510px,#ff009f 520px,#ff009a 530px,#ff0096 540px,#ff0092 550px,#ff008e 560px,#ff008a 570px,#ff0087 580px,#ff0083 590px,#ff0080 600px)"></i><i style="top:292px;height:4px;background:linear-gradient(90deg,#0048ff 0px,#0045ff 10px,#0043ff 20px,#0040ff 30px,#003dff 40px,#003aff 50px,#0037ff 60px,#0034ff 70px,#0031ff 80px,#002eff 90px,#002bff 100px,#0028ff 110px,#0025ff 120px,#0022ff 130px,#001eff 140px,#001bff 150px,#0017ff 160px,#0414ff 170px,#1210ff 180px,#1e0dff 190px,#2a09ff 200px,#3605ff 210px,#4100ff 220px,#4d00ff 230px,#5800ff 240px,#6300ff 250px,#6e00ff 260px,#7900ff 270px,#8400ff 280px,#8f00ff 290px,#9b00ff 300px,#a600ff 310px,#b100ff 320px,#bc00ff 330px,#c700ff 340px,#d200ff 350px,#dd00ff 360px,#e800ff 370px,#f300ff 380px,#fe00ff 390px,#ff00f5 400px,#ff00eb 410px,#ff00e2 420px,#ff00da 430px,#ff00d2 440px,#ff00ca 450px,#ff00c3 460px,#ff00bd 470px,#ff00b7 480px,#ff00b1 490px,#ff00ab 500px,#ff00a6 510px,#ff00a1 520px,#ff009d 530px,#ff0099 540px,#ff0094 550px,#ff0090 560px,#ff008d 570px,#ff0089 580px,#ff0086 590px,#ff0082 600px)"></i><i style="top:296px;height:4px;background:linear-gradient(90deg,#0046ff 0px,#0043ff 10px,#0041ff 20px,#003eff 30px,#003bff 40px,#0038ff 50px,#0035ff 60px,#0032ff 70px,#002fff 80px,#002cff 90px,#0029ff 100px,#0026ff 110px,#0023ff 120px,#0020ff 130px,#001dff 140px,#0019ff 150px,#0016ff 160px,#0312ff 170px,#110fff 180px,#1d0bff 190px,#2907ff 200px,#3503ff 210px,#4000ff 220px,#4b00ff 230px,#5600ff 240px,#6100ff 250px,#6c00ff 260px,#7700ff 270px,#8200ff 280px,#8d00ff 290px,#9800ff 300px,#a200ff 310px,#ad00ff 320px,#b800ff 330px,#c300ff 340px,#ce00ff 350px,#d900ff 360px,#e400ff 370px,#ef00ff 380px,#fa00ff 390px,#ff00fa 400px,#ff00ef 410px,#ff00e6 420px,#ff00dd 430px,#ff00d5 440px,#ff00ce 450px,#ff00c7 460px,#ff00c0 470px,#ff00ba 480px,#ff00b4 490px,#ff00ae 500px,#ff00a9 510px,#ff00a4 520px,#ff00a0 530px,#ff009b 540px,#ff0097 550px,#ff0093 560px,#ff008f 570px,#ff008b 580px,#ff0088 590px,#ff0085 600px)"></i><i style="top:300px;height:4px;background:linear-gradient(90deg,#0044ff 0px,#0041ff 10px,#003fff 20px,#003cff 30px,#0039ff 40px,#0036ff 50px,#0033ff 60px,#0030ff 70px,#002eff 80px,#002bff 90px,#0027ff 100px,#0024ff 110px,#0021ff 120px,#001eff 130px,#001bff 140px,#0018ff 150px,#0014ff 160px,#0211ff 170px,#100dff 180px,#1c09ff 190px,#2805ff 200px,#3301ff 210px,#3e00ff 220px,#4900ff 230px,#5400ff 240px,#5f00ff 250px,#6a00ff 260px,#7500ff 270px,#7f00ff 280px,#8a00ff 290px,#9500ff 300px,#a000ff 310px,#aa00ff 320px,#b500ff 330px,#c000ff 340px,#ca00ff 350px,#d500ff 360px,#e000ff 370px,#eb00ff 380px,#f500ff 390px,#ff00fe 400px,#ff00f4 410px,#ff00ea 420px,#ff00e1 430px,#ff00d9 440px,#ff00d1 450px,#ff00ca 460px,#ff00c3 470px,#ff00bd 480px,#ff00b7 490px,#ff00b1 500px,#ff00ac 510px,#ff00a7 520px,#ff00a2 530px,#ff009e 540px,#ff009a 550px,#ff0096 560px,#ff0092 570px,#ff008e 580px,#ff008a 590px,#ff0087 600px)"></i><i style="top:304px;height:4px;background:linear-gradient(90deg,#0042ff 0px,#003fff 10px,#003dff 20px,#003aff 30px,#0037ff 40px,#0034ff 50px,#0032ff 60px,#002fff 70px,#002cff 80px,#0029ff 90px,#0026ff 100px,#0023ff 110px,#0020ff 120px,#001cff 130px,#0019ff 140px,#0016ff 150px,#0012ff 160px,#010fff 170px,#0f0bff 180px,#1b08ff 190px,#2604ff 200px,#3200ff 210px,#3d00ff 220px,#4800ff 230px,#5200ff 240px,#5d00ff 250px,#6800ff 260px,#7200ff 270px,#7d00ff 280px,#8800ff 290px,#9200ff 300px,#9d00ff 310px,#a700ff 320px,#b200ff 330px,#bc00ff 340px,#c700ff 350px,#d100ff 360px,#dc00ff 370px,#e700ff 380px,#f100ff 390px,#fc00ff 400px,#ff00f8 410px,#ff00ee 420px,#ff00e5 430px,#ff00dd 440px,#ff00d5 450px,#ff00cd 460px,#ff00c7 470px,#ff00c0 480px,#ff00ba 490px,#ff00b4 500px,#ff00af 510px,#ff00aa 520px,#ff00a5 530px,#ff00a1 540px,#ff009c 550px,#ff0098 560px,#ff0094 570px,#ff0090 580px,#ff008d 590px,#ff0089 600px)"></i><i style="top:308px;height:4px;background:linear-gradient(90deg,#0040ff 0px,#003eff 10px,#003bff 20px,#0038ff 30px,#0035ff 40px,#0033ff 50px,#0030ff 60px,#002dff 70px,#002aff 80px,#0027ff 90px,#0024ff 100px,#0021ff 110px,#001eff 120px,#001bff 130px,#0018ff 140px,#0014ff 150px,#0011ff 160px,#000dff 170px,#0e0aff 180px,#1a06ff 190px,#2502ff 200px,#3000ff 210px,#3b00ff 220px,#4600ff 230px,#5100ff 240px,#5b00ff 250px,#6600ff 260px,#7000ff 270px,#7b00ff 280px,#8500ff 290px,#8f00ff 300px,#9a00ff 310px,#a400ff 320px,#af00ff 330px,#b900ff 340px,#c300ff 350px,#ce00ff 360px,#d800ff 370px,#e300ff 380px,#ed00ff 390px,#f800ff 400px,#ff00fc 410px,#ff00f2 420px,#ff00e9 430px,#ff00e0 440px,#ff00d8 450px,#ff00d1 460px,#ff00ca 470px,#ff00c3 480px,#ff00bd 490px,#ff00b7 500px,#ff00b2 510px,#ff00ad 520px,#ff00a8 530px,#ff00a3 540px,#ff009f 550px,#ff009b 560px,#ff0097 570px,#ff0093 580px,#ff008f 590px,#ff008c 600px)"></i><i style="top:312px;height:4px;background:linear-gradient(90deg,#003eff 0px,#003cff 10px,#0039ff 20px,#0036ff 30px,#0034ff 40px,#0031ff 50px,#002eff 60px,#002bff 70px,#0028ff 80px,#0025ff 90px,#0022ff 100px,#001fff 110px,#001cff 120px,#0019ff 130px,#0016ff 140px,#0013ff 150px,#000fff 160px,#000cff 170px,#0d08ff 180px,#1904ff 190px,#2400ff 200px,#2f00ff 210px,#3a00ff 220px,#4400ff 230px,#4f00ff 240px,#5900ff 250px,#6400ff 260px,#6e00ff 270px,#7800ff 280px,#8300ff 290px,#8d00ff 300px,#9700ff 310px,#a100ff 320px,#ac00ff 330px,#b600ff 340px,#c000ff 350px,#ca00ff 360px,#d500ff 370px,#df00ff 380px,#e900ff 390px,#f400ff 400px,#fe00ff 410px,#ff00f6 420px,#ff00ed 430px,#ff00e4 440px,#ff00dc 450px,#ff00d4 460px,#ff00cd 470px,#ff00c7 480px,#ff00c0 490px,#ff00ba 500px,#ff00b5 510px,#ff00b0 520px,#ff00ab 530px,#ff00a6 540px,#ff00a1 550px,#ff009d 560px,#ff0099 570px,#ff0095 580px,#ff0091 590px,#ff008e 600px)"></i><i style="top:316px;height:4px;background:linear-gradient(90deg,#003cff 0px,#003aff 10px,#0037ff 20px,#0035ff 30px,#0032ff 40px,#002fff 50px,#002cff 60px,#0029ff 70px,#0027ff 80px,#0024ff 90px,#0021ff 100px,#001eff 110px,#001bff 120px,#0018ff 130px,#0014ff 140px,#0011ff 150px,#000eff 160px,#000aff 170px,#0c07ff 180px,#1803ff 190px,#2300ff 200px,#2e00ff 210px,#3800ff 220px,#4300ff 230px,#4d00ff 240px,#5800ff 250px,#6200ff 260px,#6c00ff 270px,#7600ff 280px,#8000ff 290px,#8a00ff 300px,#9500ff 310px,#9f00ff 320px,#a900ff 330px,#b300ff 340px,#bd00ff 350px,#c700ff 360px,#d100ff 370px,#db00ff 380px,#e500ff 390px,#f000ff 400px,#fa00ff 410px,#ff00fa 420px,#ff00f1 430px,#ff00e8 440px,#ff00df 450px,#ff00d8 460px,#ff00d1 470px,#ff00ca 480px,#ff00c3 490px,#ff00bd 500px,#ff00b8 510px,#ff00b2 520px,#ff00ad 530px,#ff00a9 540px,#ff00a4 550px,#ff00a0 560px,#ff009c 570px,#ff0098 580px,#ff0094 590px,#ff0090 600px)"></i><i style="top:320px;height:4px;background:linear-gradient(90deg,#003bff 0px,#0038ff 10px,#0035ff 20px,#0033ff 30px,#0030ff 40px,#002dff 50px,#002bff 60px,#0028ff 70px,#0025ff 80px,#0022ff 90px,#001fff 100px,#001cff 110px,#0019ff 120px,#0016ff 130px,#0013ff 140px,#0010ff 150px,#000cff 160px,#0009ff 170px,#0b05ff 180px,#1701ff 190px,#2200ff 200px,#2c00ff 210px,#3700ff 220px,#4100ff 230px,#4c00ff 240px,#5600ff 250px,#6000ff 260px,#6a00ff 270px,#7400ff 280px,#7e00ff 290px,#8800ff 300px,#9200ff 310px,#9c00ff 320px,#a600ff 330px,#b000ff 340px,#ba00ff 350px,#c400ff 360px,#ce00ff 370px,#d800ff 380px,#e200ff 390px,#ec00ff 400px,#f600ff 410px,#ff00fe 420px,#ff00f4 430px,#ff00eb 440px,#ff00e3 450px,#ff00db 460px,#ff00d4 470px,#ff00cd 480px,#ff00c7 490px,#ff00c1 500px,#ff00bb 510px,#ff00b5 520px,#ff00b0 530px,#ff00ab 540px,#ff00a7 550px,#ff00a2 560px,#ff009e 570px,#ff009a 580px,#ff0096 590px,#ff0093 600px)"></i><i style="top:324px;height:4px;background:linear-gradient(90deg,#0039ff 0px,#0036ff 10px,#0034ff 20px,#0031ff 30px,#002eff 40px,#002cff 50px,#0029ff 60px,#0026ff 70px,#0023ff 80px,#0021ff 90px,#001eff 100px,#001bff 110px,#0018ff 120px,#0015ff 130px,#0011ff 140px,#000eff 150px,#000bff 160px,#0007ff 170px,#0a04ff 180px,#1600ff 190px,#2100ff 200px,#2b00ff 210px,#3600ff 220px,#4000ff 230px,#4a00ff 240px,#5400ff 250px,#5e00ff 260px,#6800ff 270px,#7200ff 280px,#7c00ff 290px,#8600ff 300px,#8f00ff 310px,#9900ff 320px,#a300ff 330px,#ad00ff 340px,#b700ff 350px,#c100ff 360px,#ca00ff 370px,#d400ff 380px,#de00ff 390px,#e800ff 400px,#f200ff 410px,#fc00ff 420px,#ff00f8 430px,#ff00ef 440px,#ff00e7 450px,#ff00df 460px,#ff00d7 470px,#ff00d0 480px,#ff00ca 490px,#ff00c4 500px,#ff00be 510px,#ff00b8 520px,#ff00b3 530px,#ff00ae 540px,#ff00a9 550px,#ff00a5 560px,#ff00a1 570px,#ff009d 580px,#ff0099 590px,#ff0095 600px)"></i><i style="top:328px;height:4px;background:linear-gradient(90deg,#0037ff 0px,#0035ff 10px,#0032ff 20px,#002fff 30px,#002dff 40px,#002aff 50px,#0027ff 60px,#0025ff 70px,#0022ff 80px,#001fff 90px,#001cff 100px,#0019ff 110px,#0016ff 120px,#0013ff 130px,#0010ff 140px,#000dff 150px,#0009ff 160px,#0006ff 170px,#0902ff 180px,#1500ff 190px,#1f00ff 200px,#2a00ff 210px,#3400ff 220px,#3e00ff 230px,#4800ff 240px,#5200ff 250px,#5c00ff 260px,#6600ff 270px,#7000ff 280px,#7a00ff 290px,#8300ff 300px,#8d00ff 310px,#9700ff 320px,#a000ff 330px,#aa00ff 340px,#b400ff 350px,#be00ff 360px,#c700ff 370px,#d100ff 380px,#db00ff 390px,#e400ff 400px,#ee00ff 410px,#f800ff 420px,#ff00fc 430px,#ff00f3 440px,#ff00ea 450px,#ff00e2 460px,#ff00db 470px,#ff00d4 480px,#ff00cd 490px,#ff00c7 500px,#ff00c1 510px,#ff00bb 520px,#ff00b6 530px,#ff00b1 540px,#ff00ac 550px,#ff00a7 560px,#ff00a3 570px,#ff009f 580px,#ff009b 590px,#ff0097 600px)"></i><i style="top:332px;height:4px;background:linear-gradient(90deg,#0036ff 0px,#0033ff 10px,#0030ff 20px,#002eff 30px,#002bff 40px,#0029ff 50px,#0026ff 60px,#0023ff 70px,#0020ff 80px,#001dff 90px,#001bff 100px,#0018ff 110px,#0015ff 120px,#0012ff 130px,#000eff 140px,#000bff 150px,#0008ff 160px,#0004ff 170px,#0800ff 180px,#1400ff 190px,#1e00ff 200px,#2900ff 210px,#3300ff 220px,#3d00ff 230px,#4700ff 240px,#5100ff 250px,#5b00ff 260px,#6400ff 270px,#6e00ff 280px,#7800ff 290px,#8100ff 300px,#8b00ff 310px,#9400ff 320px,#9e00ff 330px,#a700ff 340px,#b100ff 350px,#bb00ff 360px,#c400ff 370px,#ce00ff 380px,#d700ff 390px,#e100ff 400px,#eb00ff 410px,#f400ff 420px,#fe00ff 430px,#ff00f7 440px,#ff00ee 450px,#ff00e6 460px,#ff00de 470px,#ff00d7 480px,#ff00d0 490px,#ff00ca 500px,#ff00c4 510px,#ff00be 520px,#ff00b9 530px,#ff00b3 540px,#ff00af 550px,#ff00aa 560px,#ff00a6 570px,#ff00a1 580px,#ff009d 590px,#ff009a 600px)"></i><i style="top:336px;height:4px;background:linear-gradient(90deg,#0034ff 0px,#0031ff 10px,#002fff 20px,#002cff 30px,#002aff 40px,#0027ff 50px,#0024ff 60px,#0022ff 70px,#001fff 80px,#001cff 90px,#0019ff 100px,#0016ff 110px,#0013ff 120px,#0010ff 130px,#000dff 140px,#000aff 150px,#0006ff 160px,#0003ff 170px,#0700ff 180px,#1300ff 190px,#1d00ff 200px,#2800ff 210px,#3200ff 220px,#3c00ff 230px,#4500ff 240px,#4f00ff 250px,#5900ff 260px,#6200ff 270px,#6c00ff 280px,#7500ff 290px,#7f00ff 300px,#8800ff 310px,#9200ff 320px,#9b00ff 330px,#a500ff 340px,#ae00ff 350px,#b800ff 360px,#c100ff 370px,#cb00ff 380px,#d400ff 390px,#dd00ff 400px,#e700ff 410px,#f100ff 420px,#fa00ff 430px,#ff00fa 440px,#ff00f2 450px,#ff00e9 460px,#ff00e1 470px,#ff00da 480px,#ff00d3 490px,#ff00cd 500px,#ff00c7 510px,#ff00c1 520px,#ff00bb 530px,#ff00b6 540px,#ff00b1 550px,#ff00ad 560px,#ff00a8 570px,#ff00a4 580px,#ff00a0 590px,#ff009c 600px)"></i><i style="top:340px;height:4px;background:linear-gradient(90deg,#0032ff 0px,#0030ff 10px,#002dff 20px,#002bff 30px,#0028ff 40px,#0025ff 50px,#0023ff 60px,#0020ff 70px,#001dff 80px,#001bff 90px,#0018ff 100px,#0015ff 110px,#0012ff 120px,#000fff 130px,#000cff 140px,#0008ff 150px,#0005ff 160px,#0001ff 170px,#0600ff 180px,#1200ff 190px,#1c00ff 200px,#2700ff 210px,#3100ff 220px,#3a00ff 230px,#4400ff 240px,#4e00ff 250px,#5700ff 260px,#6100ff 270px,#6a00ff 280px,#7300ff 290px,#7d00ff 300px,#8600ff 310px,#8f00ff 320px,#9900ff 330px,#a200ff 340px,#ab00ff 350px,#b500ff 360px,#be00ff 370px,#c700ff 380px,#d100ff 390px,#da00ff 400px,#e400ff 410px,#ed00ff 420px,#f600ff 430px,#ff00fe 440px,#ff00f5 450px,#ff00ed 460px,#ff00e5 470px,#ff00dd 480px,#ff00d6 490px,#ff00d0 500px,#ff00ca 510px,#ff00c4 520px,#ff00be 530px,#ff00b9 540px,#ff00b4 550px,#ff00af 560px,#ff00ab 570px,#ff00a6 580px,#ff00a2 590px,#ff009e 600px)"></i><i style="top:344px;height:4px;background:linear-gradient(90deg,#0031ff 0px,#002eff 10px,#002cff 20px,#0029ff 30px,#0027ff 40px,#0024ff 50px,#0021ff 60px,#001fff 70px,#001cff 80px,#0019ff 90px,#0016ff 100px,#0013ff 110px,#0010ff 120px,#000dff 130px,#000aff 140px,#0007ff 150px,#0003ff 160px,#0000ff 170px,#0600ff 180px,#1100ff 190px,#1b00ff 200px,#2600ff 210px,#2f00ff 220px,#3900ff 230px,#4300ff 240px,#4c00ff 250px,#5600ff 260px,#5f00ff 270px,#6800ff 280px,#7100ff 290px,#7b00ff 300px,#8400ff 310px,#8d00ff 320px,#9600ff 330px,#a000ff 340px,#a900ff 350px,#b200ff 360px,#bb00ff 370px,#c400ff 380px,#ce00ff 390px,#d700ff 400px,#e000ff 410px,#e900ff 420px,#f300ff 430px,#fc00ff 440px,#ff00f9 450px,#ff00f0 460px,#ff00e8 470px,#ff00e1 480px,#ff00da 490px,#ff00d3 500px,#ff00cd 510px,#ff00c7 520px,#ff00c1 530px,#ff00bc 540px,#ff00b7 550px,#ff00b2 560px,#ff00ad 570px,#ff00a9 580px,#ff00a5 590px,#ff00a1 600px)"></i><i style="top:348px;height:4px;background:linear-gradient(90deg,#002fff 0px,#002dff 10px,#002aff 20px,#0028ff 30px,#0025ff 40px,#0023ff 50px,#0020ff 60px,#001dff 70px,#001aff 80px,#0018ff 90px,#0015ff 100px,#0012ff 110px,#000fff 120px,#000cff 130px,#0009ff 140px,#0006ff 150px,#0002ff 160px,#0000ff 170px,#0500ff 180px,#1000ff 190px,#1a00ff 200px,#2400ff 210px,#2e00ff 220px,#3800ff 230px,#4100ff 240px,#4b00ff 250px,#5400ff 260px,#5d00ff 270px,#6600ff 280px,#7000ff 290px,#7900ff 300px,#8200ff 310px,#8b00ff 320px,#9400ff 330px,#9d00ff 340px,#a600ff 350px,#af00ff 360px,#b800ff 370px,#c100ff 380px,#cb00ff 390px,#d400ff 400px,#dd00ff 410px,#e600ff 420px,#ef00ff 430px,#f800ff 440px,#ff00fc 450px,#ff00f4 460px,#ff00ec 470px,#ff00e4 480px,#ff00dd 490px,#ff00d6 500px,#ff00d0 510px,#ff00c9 520px,#ff00c4 530px,#ff00be 540px,#ff00b9 550px,#ff00b4 560px,#ff00b0 570px,#ff00ab 580px,#ff00a7 590px,#ff00a3 600px)"></i><i style="top:352px;height:4px;background:linear-gradient(90deg,#002eff 0px,#002bff 10px,#0029ff 20px,#0026ff 30px,#0024ff 40px,#0021ff 50px,#001eff 60px,#001cff 70px,#0019ff 80px,#0016ff 90px,#0014ff 100px,#0011ff 110px,#000eff 120px,#000bff 130px,#0007ff 140px,#0004ff 150px,#0000ff 160px,#0000ff 170px,#0400ff 180px,#0f00ff 190px,#1900ff 200px,#2300ff 210px,#2d00ff 220px,#3700ff 230px,#4000ff 240px,#4900ff 250px,#5200ff 260px,#5c00ff 270px,#6500ff 280px,#6e00ff 290px,#7700ff 300px,#8000ff 310px,#8900ff 320px,#9200ff 330px,#9b00ff 340px,#a400ff 350px,#ad00ff 360px,#b600ff 370px,#bf00ff 380px,#c800ff 390px,#d100ff 400px,#da00ff 410px,#e300ff 420px,#ec00ff 430px,#f500ff 440px,#fe00ff 450px,#ff00f7 460px,#ff00ef 470px,#ff00e7 480px,#ff00e0 490px,#ff00d9 500px,#ff00d3 510px,#ff00cc 520px,#ff00c7 530px,#ff00c1 540px,#ff00bc 550px,#ff00b7 560px,#ff00b2 570px,#ff00ae 580px,#ff00a9 590px,#ff00a5 600px)"></i><i style="top:356px;height:4px;background:linear-gradient(90deg,#002cff 0px,#002aff 10px,#0027ff 20px,#0025ff 30px,#0022ff 40px,#0020ff 50px,#001dff 60px,#001aff 70px,#0018ff 80px,#0015ff 90px,#0012ff 100px,#000fff 110px,#000cff 120px,#0009ff 130px,#0006ff 140px,#0003ff 150px,#0000ff 160px,#0000ff 170px,#0300ff 180px,#0e00ff 190px,#1900ff 200px,#2200ff 210px,#2c00ff 220px,#3500ff 230px,#3f00ff 240px,#4800ff 250px,#5100ff 260px,#5a00ff 270px,#6300ff 280px,#6c00ff 290px,#7500ff 300px,#7e00ff 310px,#8700ff 320px,#8f00ff 330px,#9800ff 340px,#a100ff 350px,#aa00ff 360px,#b300ff 370px,#bc00ff 380px,#c500ff 390px,#ce00ff 400px,#d600ff 410px,#df00ff 420px,#e800ff 430px,#f100ff 440px,#fa00ff 450px,#ff00fb 460px,#ff00f2 470px,#ff00ea 480px,#ff00e3 490px,#ff00dc 500px,#ff00d6 510px,#ff00cf 520px,#ff00c9 530px,#ff00c4 540px,#ff00bf 550px,#ff00b9 560px,#ff00b5 570px,#ff00b0 580px,#ff00ac 590px,#ff00a8 600px)"></i><i style="top:360px;height:4px;background:linear-gradient(90deg,#002bff 0px,#0028ff 10px,#0026ff 20px,#0023ff 30px,#0021ff 40px,#001eff 50px,#001cff 60px,#0019ff 70px,#0016ff 80px,#0014ff 90px,#0011ff 100px,#000eff 110px,#000bff 120px,#0008ff 130px,#0005ff 140px,#0001ff 150px,#0000ff 160px,#0000ff 170px,#0200ff 180px,#0d00ff 190px,#1800ff 200px,#2100ff 210px,#2b00ff 220px,#3400ff 230px,#3d00ff 240px,#4600ff 250px,#4f00ff 260px,#5800ff 270px,#6100ff 280px,#6a00ff 290px,#7300ff 300px,#7c00ff 310px,#8500ff 320px,#8d00ff 330px,#9600ff 340px,#9f00ff 350px,#a800ff 360px,#b000ff 370px,#b900ff 380px,#c200ff 390px,#cb00ff 400px,#d300ff 410px,#dc00ff 420px,#e500ff 430px,#ee00ff 440px,#f700ff 450px,#ff00fe 460px,#ff00f6 470px,#ff00ee 480px,#ff00e6 490px,#ff00df 500px,#ff00d9 510px,#ff00d2 520px,#ff00cc 530px,#ff00c7 540px,#ff00c1 550px,#ff00bc 560px,#ff00b7 570px,#ff00b3 580px,#ff00ae 590px,#ff00aa 600px)"></i><i style="top:364px;height:4px;background:linear-gradient(90deg,#0029ff 0px,#0027ff 10px,#0024ff 20px,#0022ff 30px,#001fff 40px,#001dff 50px,#001aff 60px,#0018ff 70px,#0015ff 80px,#0012ff 90px,#0010ff 100px,#000dff 110px,#000aff 120px,#0007ff 130px,#0003ff 140px,#0000ff 150px,#0000ff 160px,#0000ff 170px,#0100ff 180px,#0d00ff 190px,#1700ff 200px,#2000ff 210px,#2a00ff 220px,#3300ff 230px,#3c00ff 240px,#4500ff 250px,#4e00ff 260px,#5700ff 270px,#6000ff 280px,#6800ff 290px,#7100ff 300px,#7a00ff 310px,#8200ff 320px,#8b00ff 330px,#9400ff 340px,#9c00ff 350px,#a500ff 360px,#ae00ff 370px,#b600ff 380px,#bf00ff 390px,#c800ff 400px,#d000ff 410px,#d900ff 420px,#e200ff 430px,#eb00ff 440px,#f300ff 450px,#fc00ff 460px,#ff00f9 470px,#ff00f1 480px,#ff00e9 490px,#ff00e2 500px,#ff00dc 510px,#ff00d5 520px,#ff00cf 530px,#ff00c9 540px,#ff00c4 550px,#ff00bf 560px,#ff00ba 570px,#ff00b5 580px,#ff00b1 590px,#ff00ac 600px)"></i><i style="top:368px;height:4px;background:linear-gradient(90deg,#0028ff 0px,#0026ff 10px,#0023ff 20px,#0021ff 30px,#001eff 40px,#001cff 50px,#0019ff 60px,#0016ff 70px,#0014ff 80px,#0011ff 90px,#000eff 100px,#000bff 110px,#0008ff 120px,#0005ff 130px,#0002ff 140px,#0000ff 150px,#0000ff 160px,#0000ff 170px,#0000ff 180px,#0c00ff 190px,#1600ff 200px,#1f00ff 210px,#2900ff 220px,#3200ff 230px,#3b00ff 240px,#4400ff 250px,#4d00ff 260px,#5500ff 270px,#5e00ff 280px,#6700ff 290px,#6f00ff 300px,#7800ff 310px,#8000ff 320px,#8900ff 330px,#9200ff 340px,#9a00ff 350px,#a300ff 360px,#ab00ff 370px,#b400ff 380px,#bc00ff 390px,#c500ff 400px,#ce00ff 410px,#d600ff 420px,#df00ff 430px,#e700ff 440px,#f000ff 450px,#f900ff 460px,#ff00fd 470px,#ff00f4 480px,#ff00ed 490px,#ff00e5 500px,#ff00df 510px,#ff00d8 520px,#ff00d2 530px,#ff00cc 540px,#ff00c7 550px,#ff00c1 560px,#ff00bc 570px,#ff00b8 580px,#ff00b3 590px,#ff00af 600px)"></i><i style="top:372px;height:4px;background:linear-gradient(90deg,#0027ff 0px,#0024ff 10px,#0022ff 20px,#001fff 30px,#001dff 40px,#001aff 50px,#0018ff 60px,#0015ff 70px,#0013ff 80px,#0010ff 90px,#000dff 100px,#000aff 110px,#0007ff 120px,#0004ff 130px,#0001ff 140px,#0000ff 150px,#0000ff 160px,#0000ff 170px,#0000ff 180px,#0b00ff 190px,#1500ff 200px,#1f00ff 210px,#2800ff 220px,#3100ff 230px,#3a00ff 240px,#4200ff 250px,#4b00ff 260px,#5400ff 270px,#5c00ff 280px,#6500ff 290px,#6e00ff 300px,#7600ff 310px,#7f00ff 320px,#8700ff 330px,#8f00ff 340px,#9800ff 350px,#a000ff 360px,#a900ff 370px,#b100ff 380px,#ba00ff 390px,#c200ff 400px,#cb00ff 410px,#d300ff 420px,#dc00ff 430px,#e400ff 440px,#ed00ff 450px,#f500ff 460px,#fe00ff 470px,#ff00f8 480px,#ff00f0 490px,#ff00e9 500px,#ff00e2 510px,#ff00db 520px,#ff00d5 530px,#ff00cf 540px,#ff00c9 550px,#ff00c4 560px,#ff00bf 570px,#ff00ba 580px,#ff00b5 590px,#ff00b1 600px)"></i><i style="top:376px;height:4px;background:linear-gradient(90deg,#0025ff 0px,#0023ff 10px,#0020ff 20px,#001eff 30px,#001cff 40px,#0019ff 50px,#0016ff 60px,#0014ff 70px,#0011ff 80px,#000fff 90px,#000cff 100px,#0009ff 110px,#0006ff 120px,#0003ff 130px,#0000ff 140px,#0000ff 150px,#0000ff 160px,#0000ff 170px,#0000ff 180px,#0a00ff 190px,#1400ff 200px,#1e00ff 210px,#2700ff 220px,#3000ff 230px,#3800ff 240px,#4100ff 250px,#4a00ff 260px,#5200ff 270px,#5b00ff 280px,#6300ff 290px,#6c00ff 300px,#7400ff 310px,#7d00ff 320px,#8500ff 330px,#8d00ff 340px,#9600ff 350px,#9e00ff 360px,#a600ff 370px,#af00ff 380px,#b700ff 390px,#c000ff 400px,#c800ff 410px,#d000ff 420px,#d900ff 430px,#e100ff 440px,#ea00ff 450px,#f200ff 460px,#fa00ff 470px,#ff00fb 480px,#ff00f3 490px,#ff00ec 500px,#ff00e5 510px,#ff00de 520px,#ff00d8 530px,#ff00d2 540px,#ff00cc 550px,#ff00c7 560px,#ff00c1 570px,#ff00bd 580px,#ff00b8 590px,#ff00b3 600px)"></i><i style="top:380px;height:4px;background:linear-gradient(90deg,#0024ff 0px,#0022ff 10px,#001fff 20px,#001dff 30px,#001aff 40px,#0018ff 50px,#0015ff 60px,#0013ff 70px,#0010ff 80px,#000dff 90px,#000bff 100px,#0008ff 110px,#0005ff 120px,#0001ff 130px,#0000ff 140px,#0000ff 150px,#0000ff 160px,#0000ff 170px,#0000ff 180px,#0a00ff 190px,#1300ff 200px,#1d00ff 210px,#2600ff 220px,#2f00ff 230px,#3700ff 240px,#4000ff 250px,#4900ff 260px,#5100ff 270px,#5900ff 280px,#6200ff 290px,#6a00ff 300px,#7200ff 310px,#7b00ff 320px,#8300ff 330px,#8b00ff 340px,#9400ff 350px,#9c00ff 360px,#a400ff 370px,#ac00ff 380px,#b500ff 390px,#bd00ff 400px,#c500ff 410px,#cd00ff 420px,#d600ff 430px,#de00ff 440px,#e600ff 450px,#ef00ff 460px,#f700ff 470px,#ff00ff 480px,#ff00f6 490px,#ff00ef 500px,#ff00e8 510px,#ff00e1 520px,#ff00da 530px,#ff00d4 540px,#ff00cf 550px,#ff00c9 560px,#ff00c4 570px,#ff00bf 580px,#ff00ba 590px,#ff00b6 600px)"></i><i style="top:384px;height:4px;background:linear-gradient(90deg,#0023ff 0px,#0020ff 10px,#001eff 20px,#001bff 30px,#0019ff 40px,#0017ff 50px,#0014ff 60px,#0011ff 70px,#000fff 80px,#000cff 90px,#0009ff 100px,#0006ff 110px,#0003ff 120px,#0000ff 130px,#0000ff 140px,#0000ff 150px,#0000ff 160px,#0000ff 170px,#0000ff 180px,#0900ff 190px,#1300ff 200px,#1c00ff 210px,#2500ff 220px,#2e00ff 230px,#3600ff 240px,#3f00ff 250px,#4700ff 260px,#5000ff 270px,#5800ff 280px,#6000ff 290px,#6900ff 300px,#7100ff 310px,#7900ff 320px,#8100ff 330px,#8900ff 340px,#9200ff 350px,#9a00ff 360px,#a200ff 370px,#aa00ff 380px,#b200ff 390px,#ba00ff 400px,#c300ff 410px,#cb00ff 420px,#d300ff 430px,#db00ff 440px,#e300ff 450px,#ec00ff 460px,#f400ff 470px,#fc00ff 480px,#ff00fa 490px,#ff00f2 500px,#ff00eb 510px,#ff00e4 520px,#ff00dd 530px,#ff00d7 540px,#ff00d1 550px,#ff00cc 560px,#ff00c7 570px,#ff00c2 580px,#ff00bd 590px,#ff00b8 600px)"></i><i style="top:388px;height:4px;background:linear-gradient(90deg,#0021ff 0px,#001fff 10px,#001dff 20px,#001aff 30px,#0018ff 40px,#0015ff 50px,#0013ff 60px,#0010ff 70px,#000eff 80px,#000bff 90px,#0008ff 100px,#0005ff 110px,#0002ff 120px,#0000ff 130px,#0000ff 140px,#0000ff 150px,#0000ff 160px,#0000ff 170px,#0000ff 180px,#0800ff 190px,#1200ff 200px,#1b00ff 210px,#2400ff 220px,#2d00ff 230px,#3500ff 240px,#3e00ff 250px,#4600ff 260px,#4e00ff 270px,#5700ff 280px,#5f00ff 290px,#6700ff 300px,#6f00ff 310px,#7700ff 320px,#7f00ff 330px,#8700ff 340px,#8f00ff 350px,#9800ff 360px,#a000ff 370px,#a800ff 380px,#b000ff 390px,#b800ff 400px,#c000ff 410px,#c800ff 420px,#d000ff 430px,#d800ff 440px,#e000ff 450px,#e900ff 460px,#f100ff 470px,#f900ff 480px,#ff00fd 490px,#ff00f5 500px,#ff00ee 510px,#ff00e7 520px,#ff00e0 530px,#ff00da 540px,#ff00d4 550px,#ff00ce 560px,#ff00c9 570px,#ff00c4 580px,#ff00bf 590px,#ff00bb 600px)"></i><i style="top:392px;height:4px;background:linear-gradient(90deg,#0020ff 0px,#001eff 10px,#001bff 20px,#0019ff 30px,#0017ff 40px,#0014ff 50px,#0012ff 60px,#000fff 70px,#000cff 80px,#000aff 90px,#0007ff 100px,#0004ff 110px,#0001ff 120px,#0000ff 130px,#0000ff 140px,#0000ff 150px,#0000ff 160px,#0000ff 170px,#0000ff 180px,#0700ff 190px,#1100ff 200px,#1a00ff 210px,#2300ff 220px,#2c00ff 230px,#3400ff 240px,#3c00ff 250px,#4500ff 260px,#4d00ff 270px,#5500ff 280px,#5d00ff 290px,#6500ff 300px,#6d00ff 310px,#7500ff 320px,#7d00ff 330px,#8500ff 340px,#8d00ff 350px,#9500ff 360px,#9d00ff 370px,#a500ff 380px,#ad00ff 390px,#b500ff 400px,#bd00ff 410px,#c500ff 420px,#cd00ff 430px,#d500ff 440px,#de00ff 450px,#e600ff 460px,#ee00ff 470px,#f600ff 480px,#fe00ff 490px,#ff00f8 500px,#ff00f1 510px,#ff00ea 520px,#ff00e3 530px,#ff00dd 540px,#ff00d7 550px,#ff00d1 560px,#ff00cc 570px,#ff00c7 580px,#ff00c2 590px,#ff00bd 600px)"></i><i style="top:396px;height:4px;background:linear-gradient(90deg,#001fff 0px,#001dff 10px,#001aff 20px,#0018ff 30px,#0015ff 40px,#0013ff 50px,#0010ff 60px,#000eff 70px,#000bff 80px,#0009ff 90px,#0006ff 100px,#0003ff 110px,#0000ff 120px,#0000ff 130px,#0000ff 140px,#0000ff 150px,#0000ff 160px,#0000ff 170px,#0000ff 180px,#0700ff 190px,#1000ff 200px,#1900ff 210px,#2200ff 220px,#2b00ff 230px,#3300ff 240px,#3b00ff 250px,#4300ff 260px,#4c00ff 270px,#5400ff 280px,#5c00ff 290px,#6400ff 300px,#6c00ff 310px,#7400ff 320px,#7c00ff 330px,#8400ff 340px,#8c00ff 350px,#9300ff 360px,#9b00ff 370px,#a300ff 380px,#ab00ff 390px,#b300ff 400px,#bb00ff 410px,#c300ff 420px,#cb00ff 430px,#d300ff 440px,#db00ff 450px,#e300ff 460px,#eb00ff 470px,#f300ff 480px,#fb00ff 490px,#ff00fb 500px,#ff00f4 510px,#ff00ed 520px,#ff00e6 530px,#ff00e0 540px,#ff00da 550px,#ff00d4 560px,#ff00ce 570px,#ff00c9 580px,#ff00c4 590px,#ff00bf 600px)"></i><i style="top:400px;height:4px;background:linear-gradient(90deg,#001eff 0px,#001bff 10px,#0019ff 20px,#0017ff 30px,#0014ff 40px,#0012ff 50px,#000fff 60px,#000dff 70px,#000aff 80px,#0007ff 90px,#0004ff 100px,#0001ff 110px,#0000ff 120px,#0000ff 130px,#0000ff 140px,#0000ff 150px,#0000ff 160px,#0000ff 170px,#0000ff 180px,#0600ff 190px,#0f00ff 200px,#1800ff 210px,#2100ff 220px,#2a00ff 230px,#3200ff 240px,#3a00ff 250px,#4200ff 260px,#4a00ff 270px,#5200ff 280px,#5a00ff 290px,#6200ff 300px,#6a00ff 310px,#7200ff 320px,#7a00ff 330px,#8200ff 340px,#8a00ff 350px,#9100ff 360px,#9900ff 370px,#a100ff 380px,#a900ff 390px,#b100ff 400px,#b900ff 410px,#c000ff 420px,#c800ff 430px,#d000ff 440px,#d800ff 450px,#e000ff 460px,#e800ff 470px,#f000ff 480px,#f700ff 490px,#ff00ff 500px,#ff00f7 510px,#ff00f0 520px,#ff00e9 530px,#ff00e2 540px,#ff00dc 550px,#ff00d6 560px,#ff00d1 570px,#ff00cc 580px,#ff00c7 590px,#ff00c2 600px)"></i><i style="top:404px;height:4px;background:linear-gradient(90deg,#001cff 0px,#001aff 10px,#0018ff 20px,#0015ff 30px,#0013ff 40px,#0011ff 50px,#000eff 60px,#000cff 70px,#0009ff 80px,#0006ff 90px,#0003ff 100px,#0000ff 110px,#0000ff 120px,#0000ff 130px,#0000ff 140px,#0000ff 150px,#0000ff 160px,#0000ff 170px,#0000ff 180px,#0500ff 190px,#0f00ff 200px,#1800ff 210px,#2000ff 220px,#2900ff 230px,#3100ff 240px,#3900ff 250px,#4100ff 260px,#4900ff 270px,#5100ff 280px,#5900ff 290px,#6100ff 300px,#6900ff 310px,#7000ff 320px,#7800ff 330px,#8000ff 340px,#8800ff 350px,#8f00ff 360px,#9700ff 370px,#9f00ff 380px,#a700ff 390px,#ae00ff 400px,#b600ff 410px,#be00ff 420px,#c600ff 430px,#cd00ff 440px,#d500ff 450px,#dd00ff 460px,#e500ff 470px,#ed00ff 480px,#f400ff 490px,#fc00ff 500px,#ff00fa 510px,#ff00f3 520px,#ff00ec 530px,#ff00e5 540px,#ff00df 550px,#ff00d9 560px,#ff00d3 570px,#ff00ce 580px,#ff00c9 590px,#ff00c4 600px)"></i><i style="top:408px;height:4px;background:linear-gradient(90deg,#001bff 0px,#0019ff 10px,#0017ff 20px,#0014ff 30px,#0012ff 40px,#0010ff 50px,#000dff 60px,#000aff 70px,#0008ff 80px,#0005ff 90px,#0002ff 100px,#0000ff 110px,#0000ff 120px,#0000ff 130px,#0000ff 140px,#0000ff 150px,#0000ff 160px,#0000ff 170px,#0000ff 180px,#0400ff 190px,#0e00ff 200px,#1700ff 210px,#1f00ff 220px,#2800ff 230px,#3000ff 240px,#3800ff 250px,#4000ff 260px,#4800ff 270px,#5000ff 280px,#5800ff 290px,#5f00ff 300px,#6700ff 310px,#6f00ff 320px,#7700ff 330px,#7e00ff 340px,#8600ff 350px,#8e00ff 360px,#9500ff 370px,#9d00ff 380px,#a500ff 390px,#ac00ff 400px,#b400ff 410px,#bb00ff 420px,#c300ff 430px,#cb00ff 440px,#d300ff 450px,#da00ff 460px,#e200ff 470px,#ea00ff 480px,#f100ff 490px,#f900ff 500px,#ff00fd 510px,#ff00f6 520px,#ff00ef 530px,#ff00e8 540px,#ff00e2 550px,#ff00dc 560px,#ff00d6 570px,#ff00d1 580px,#ff00cb 590px,#ff00c7 600px)"></i><i style="top:412px;height:4px;background:linear-gradient(90deg,#001aff 0px,#0018ff 10px,#0016ff 20px,#0013ff 30px,#0011ff 40px,#000eff 50px,#000cff 60px,#0009ff 70px,#0007ff 80px,#0004ff 90px,#0001ff 100px,#0000ff 110px,#0000ff 120px,#0000ff 130px,#0000ff 140px,#0000ff 150px,#0000ff 160px,#0000ff 170px,#0000ff 180px,#0400ff 190px,#0d00ff 200px,#1600ff 210px,#1f00ff 220px,#2700ff 230px,#2f00ff 240px,#3700ff 250px,#3f00ff 260px,#4700ff 270px,#4e00ff 280px,#5600ff 290px,#5e00ff 300px,#6600ff 310px,#6d00ff 320px,#7500ff 330px,#7c00ff 340px,#8400ff 350px,#8c00ff 360px,#9300ff 370px,#9b00ff 380px,#a200ff 390px,#aa00ff 400px,#b200ff 410px,#b900ff 420px,#c100ff 430px,#c800ff 440px,#d000ff 450px,#d800ff 460px,#df00ff 470px,#e700ff 480px,#ee00ff 490px,#f600ff 500px,#fe00ff 510px,#ff00f9 520px,#ff00f2 530px,#ff00eb 540px,#ff00e4 550px,#ff00de 560px,#ff00d9 570px,#ff00d3 580px,#ff00ce 590px,#ff00c9 600px)"></i><i style="top:416px;height:4px;background:linear-gradient(90deg,#0019ff 0px,#0017ff 10px,#0014ff 20px,#0012ff 30px,#0010ff 40px,#000dff 50px,#000bff 60px,#0008ff 70px,#0006ff 80px,#0003ff 90px,#0000ff 100px,#0000ff 110px,#0000ff 120px,#0000ff 130px,#0000ff 140px,#0000ff 150px,#0000ff 160px,#0000ff 170px,#0000ff 180px,#0300ff 190px,#0d00ff 200px,#1500ff 210px,#1e00ff 220px,#2600ff 230px,#2e00ff 240px,#3600ff 250px,#3e00ff 260px,#4600ff 270px,#4d00ff 280px,#5500ff 290px,#5d00ff 300px,#6400ff 310px,#6c00ff 320px,#7300ff 330px,#7b00ff 340px,#8200ff 350px,#8a00ff 360px,#9100ff 370px,#9900ff 380px,#a000ff 390px,#a800ff 400px,#af00ff 410px,#b700ff 420px,#be00ff 430px,#c600ff 440px,#cd00ff 450px,#d500ff 460px,#dc00ff 470px,#e400ff 480px,#ec00ff 490px,#f300ff 500px,#fb00ff 510px,#ff00fc 520px,#ff00f5 530px,#ff00ee 540px,#ff00e7 550px,#ff00e1 560px,#ff00db 570px,#ff00d6 580px,#ff00d0 590px,#ff00cb 600px)"></i><i style="top:420px;height:4px;background:linear-gradient(90deg,#0018ff 0px,#0016ff 10px,#0013ff 20px,#0011ff 30px,#000fff 40px,#000cff 50px,#000aff 60px,#0007ff 70px,#0004ff 80px,#0001ff 90px,#0000ff 100px,#0000ff 110px,#0000ff 120px,#0000ff 130px,#0000ff 140px,#0000ff 150px,#0000ff 160px,#0000ff 170px,#0000ff 180px,#0200ff 190px,#0c00ff 200px,#1500ff 210px,#1d00ff 220px,#2500ff 230px,#2d00ff 240px,#3500ff 250px,#3d00ff 260px,#4400ff 270px,#4c00ff 280px,#5400ff 290px,#5b00ff 300px,#6300ff 310px,#6a00ff 320px,#7200ff 330px,#7900ff 340px,#8100ff 350px,#8800ff 360px,#8f00ff 370px,#9700ff 380px,#9e00ff 390px,#a600ff 400px,#ad00ff 410px,#b500ff 420px,#bc00ff 430px,#c300ff 440px,#cb00ff 450px,#d200ff 460px,#da00ff 470px,#e100ff 480px,#e900ff 490px,#f000ff 500px,#f800ff 510px,#ff00ff 520px,#ff00f7 530px,#ff00f1 540px,#ff00ea 550px,#ff00e4 560px,#ff00de 570px,#ff00d8 580px,#ff00d3 590px,#ff00ce 600px)"></i><i style="top:424px;height:4px;background:linear-gradient(90deg,#0017ff 0px,#0015ff 10px,#0012ff 20px,#0010ff 30px,#000eff 40px,#000bff 50px,#0009ff 60px,#0006ff 70px,#0003ff 80px,#0000ff 90px,#0000ff 100px,#0000ff 110px,#0000ff 120px,#0000ff 130px,#0000ff 140px,#0000ff 150px,#0000ff 160px,#0000ff 170px,#0000ff 180px,#0200ff 190px,#0b00ff 200px,#1400ff 210px,#1c00ff 220px,#2400ff 230px,#2c00ff 240px,#3400ff 250px,#3c00ff 260px,#4300ff 270px,#4b00ff 280px,#5200ff 290px,#5a00ff 300px,#6100ff 310px,#6900ff 320px,#7000ff 330px,#7800ff 340px,#7f00ff 350px,#8600ff 360px,#8e00ff 370px,#9500ff 380px,#9c00ff 390px,#a400ff 400px,#ab00ff 410px,#b200ff 420px,#ba00ff 430px,#c100ff 440px,#c800ff 450px,#d000ff 460px,#d700ff 470px,#df00ff 480px,#e600ff 490px,#ed00ff 500px,#f500ff 510px,#fc00ff 520px,#ff00fa 530px,#ff00f3 540px,#ff00ed 550px,#ff00e6 560px,#ff00e0 570px,#ff00db 580px,#ff00d5 590px,#ff00d0 600px)"></i><i style="top:428px;height:4px;background:linear-gradient(90deg,#0016ff 0px,#0013ff 10px,#0011ff 20px,#000fff 30px,#000cff 40px,#000aff 50px,#0008ff 60px,#0005ff 70px,#0002ff 80px,#0000ff 90px,#0000ff 100px,#0000ff 110px,#0000ff 120px,#0000ff 130px,#0000ff 140px,#0000ff 150px,#0000ff 160px,#0000ff 170px,#0000ff 180px,#0100ff 190px,#0a00ff 200px,#1300ff 210px,#1b00ff 220px,#2300ff 230px,#2b00ff 240px,#3300ff 250px,#3b00ff 260px,#4200ff 270px,#4a00ff 280px,#5100ff 290px,#5900ff 300px,#6000ff 310px,#6700ff 320px,#6f00ff 330px,#7600ff 340px,#7d00ff 350px,#8500ff 360px,#8c00ff 370px,#9300ff 380px,#9a00ff 390px,#a200ff 400px,#a900ff 410px,#b000ff 420px,#b700ff 430px,#bf00ff 440px,#c600ff 450px,#cd00ff 460px,#d500ff 470px,#dc00ff 480px,#e300ff 490px,#eb00ff 500px,#f200ff 510px,#f900ff 520px,#ff00fd 530px,#ff00f6 540px,#ff00f0 550px,#ff00e9 560px,#ff00e3 570px,#ff00dd 580px,#ff00d8 590px,#ff00d3 600px)"></i><i style="top:432px;height:4px;background:linear-gradient(90deg,#0015ff 0px,#0012ff 10px,#0010ff 20px,#000eff 30px,#000bff 40px,#0009ff 50px,#0006ff 60px,#0004ff 70px,#0001ff 80px,#0000ff 90px,#0000ff 100px,#0000ff 110px,#0000ff 120px,#0000ff 130px,#0000ff 140px,#0000ff 150px,#0000ff 160px,#0000ff 170px,#0000ff 180px,#0000ff 190px,#0a00ff 200px,#1200ff 210px,#1b00ff 220px,#2300ff 230px,#2a00ff 240px,#3200ff 250px,#3a00ff 260px,#4100ff 270px,#4900ff 280px,#5000ff 290px,#5700ff 300px,#5f00ff 310px,#6600ff 320px,#6d00ff 330px,#7400ff 340px,#7c00ff 350px,#8300ff 360px,#8a00ff 370px,#9100ff 380px,#9800ff 390px,#a000ff 400px,#a700ff 410px,#ae00ff 420px,#b500ff 430px,#bc00ff 440px,#c400ff 450px,#cb00ff 460px,#d200ff 470px,#d900ff 480px,#e100ff 490px,#e800ff 500px,#ef00ff 510px,#f600ff 520px,#fe00ff 530px,#ff00f9 540px,#ff00f2 550px,#ff00ec 560px,#ff00e6 570px,#ff00e0 580px,#ff00da 590px,#ff00d5 600px)"></i><i style="top:436px;height:4px;background:linear-gradient(90deg,#0014ff 0px,#0011ff 10px,#000fff 20px,#000dff 30px,#000aff 40px,#0008ff 50px,#0005ff 60px,#0003ff 70px,#0000ff 80px,#0000ff 90px,#0000ff 100px,#0000ff 110px,#0000ff 120px,#0000ff 130px,#0000ff 140px,#0000ff 150px,#0000ff 160px,#0000ff 170px,#0000ff 180px,#0000ff 190px,#0900ff 200px,#1200ff 210px,#1a00ff 220px,#2200ff 230px,#2900ff 240px,#3100ff 250px,#3900ff 260px,#4000ff 270px,#4700ff 280px,#4f00ff 290px,#5600ff 300px,#5d00ff 310px,#6400ff 320px,#6c00ff 330px,#7300ff 340px,#7a00ff 350px,#8100ff 360px,#8800ff 370px,#8f00ff 380px,#9700ff 390px,#9e00ff 400px,#a500ff 410px,#ac00ff 420px,#b300ff 430px,#ba00ff 440px,#c100ff 450px,#c900ff 460px,#d000ff 470px,#d700ff 480px,#de00ff 490px,#e500ff 500px,#ec00ff 510px,#f400ff 520px,#fb00ff 530px,#ff00fc 540px,#ff00f5 550px,#ff00ef 560px,#ff00e8 570px,#ff00e2 580px,#ff00dd 590px,#ff00d7 600px)"></i><i style="top:440px;height:4px;background:linear-gradient(90deg,#0012ff 0px,#0010ff 10px,#000eff 20px,#000cff 30px,#0009ff 40px,#0007ff 50px,#0004ff 60px,#0001ff 70px,#0000ff 80px,#0000ff 90px,#0000ff 100px,#0000ff 110px,#0000ff 120px,#0000ff 130px,#0000ff 140px,#0000ff 150px,#0000ff 160px,#0000ff 170px,#0000ff 180px,#0000ff 190px,#0800ff 200px,#1100ff 210px,#1900ff 220px,#2100ff 230px,#2900ff 240px,#3000ff 250px,#3800ff 260px,#3f00ff 270px,#4600ff 280px,#4e00ff 290px,#5500ff 300px,#5c00ff 310px,#6300ff 320px,#6a00ff 330px,#7100ff 340px,#7800ff 350px,#8000ff 360px,#8700ff 370px,#8e00ff 380px,#9500ff 390px,#9c00ff 400px,#a300ff 410px,#aa00ff 420px,#b100ff 430px,#b800ff 440px,#bf00ff 450px,#c600ff 460px,#cd00ff 470px,#d400ff 480px,#db00ff 490px,#e300ff 500px,#ea00ff 510px,#f100ff 520px,#f800ff 530px,#ff00ff 540px,#ff00f8 550px,#ff00f1 560px,#ff00eb 570px,#ff00e5 580px,#ff00df 590px,#ff00da 600px)"></i><i style="top:444px;height:4px;background:linear-gradient(90deg,#0011ff 0px,#000fff 10px,#000dff 20px,#000bff 30px,#0008ff 40px,#0006ff 50px,#0003ff 60px,#0000ff 70px,#0000ff 80px,#0000ff 90px,#0000ff 100px,#0000ff 110px,#0000ff 120px,#0000ff 130px,#0000ff 140px,#0000ff 150px,#0000ff 160px,#0000ff 170px,#0000ff 180px,#0000ff 190px,#0800ff 200px,#1000ff 210px,#1800ff 220px,#2000ff 230px,#2800ff 240px,#2f00ff 250px,#3700ff 260px,#3e00ff 270px,#4500ff 280px,#4c00ff 290px,#5400ff 300px,#5b00ff 310px,#6200ff 320px,#6900ff 330px,#7000ff 340px,#7700ff 350px,#7e00ff 360px,#8500ff 370px,#8c00ff 380px,#9300ff 390px,#9a00ff 400px,#a100ff 410px,#a800ff 420px,#af00ff 430px,#b600ff 440px,#bd00ff 450px,#c400ff 460px,#cb00ff 470px,#d200ff 480px,#d900ff 490px,#e000ff 500px,#e700ff 510px,#ee00ff 520px,#f500ff 530px,#fc00ff 540px,#ff00fb 550px,#ff00f4 560px,#ff00ee 570px,#ff00e8 580px,#ff00e2 590px,#ff00dc 600px)"></i><i style="top:448px;height:4px;background:linear-gradient(90deg,#0010ff 0px,#000eff 10px,#000cff 20px,#000aff 30px,#0007ff 40px,#0005ff 50px,#0002ff 60px,#0000ff 70px,#0000ff 80px,#0000ff 90px,#0000ff 100px,#0000ff 110px,#0000ff 120px,#0000ff 130px,#0000ff 140px,#0000ff 150px,#0000ff 160px,#0000ff 170px,#0000ff 180px,#0000ff 190px,#0700ff 200px,#1000ff 210px,#1800ff 220px,#1f00ff 230px,#2700ff 240px,#2e00ff 250px,#3600ff 260px,#3d00ff 270px,#4400ff 280px,#4b00ff 290px,#5200ff 300px,#5900ff 310px,#6000ff 320px,#6700ff 330px,#6e00ff 340px,#7500ff 350px,#7c00ff 360px,#8300ff 370px,#8a00ff 380px,#9100ff 390px,#9800ff 400px,#9f00ff 410px,#a600ff 420px,#ad00ff 430px,#b400ff 440px,#bb00ff 450px,#c200ff 460px,#c900ff 470px,#d000ff 480px,#d700ff 490px,#de00ff 500px,#e500ff 510px,#eb00ff 520px,#f200ff 530px,#f900ff 540px,#ff00fd 550px,#ff00f7 560px,#ff00f0 570px,#ff00ea 580px,#ff00e4 590px,#ff00df 600px)"></i><i style="top:452px;height:4px;background:linear-gradient(90deg,#000fff 0px,#000dff 10px,#000bff 20px,#0009ff 30px,#0006ff 40px,#0004ff 50px,#0001ff 60px,#0000ff 70px,#0000ff 80px,#0000ff 90px,#0000ff 100px,#0000ff 110px,#0000ff 120px,#0000ff 130px,#0000ff 140px,#0000ff 150px,#0000ff 160px,#0000ff 170px,#0000ff 180px,#0000ff 190px,#0700ff 200px,#0f00ff 210px,#1700ff 220px,#1f00ff 230px,#2600ff 240px,#2d00ff 250px,#3500ff 260px,#3c00ff 270px,#4300ff 280px,#4a00ff 290px,#5100ff 300px,#5800ff 310px,#5f00ff 320px,#6600ff 330px,#6d00ff 340px,#7400ff 350px,#7b00ff 360px,#8200ff 370px,#8900ff 380px,#8f00ff 390px,#9600ff 400px,#9d00ff 410px,#a400ff 420px,#ab00ff 430px,#b200ff 440px,#b900ff 450px,#c000ff 460px,#c600ff 470px,#cd00ff 480px,#d400ff 490px,#db00ff 500px,#e200ff 510px,#e900ff 520px,#f000ff 530px,#f700ff 540px,#fe00ff 550px,#ff00f9 560px,#ff00f3 570px,#ff00ed 580px,#ff00e7 590px,#ff00e1 600px)"></i><i style="top:456px;height:4px;background:linear-gradient(90deg,#000eff 0px,#000cff 10px,#000aff 20px,#0008ff 30px,#0005ff 40px,#0003ff 50px,#0000ff 60px,#0000ff 70px,#0000ff 80px,#0000ff 90px,#0000ff 100px,#0000ff 110px,#0000ff 120px,#0000ff 130px,#0000ff 140px,#0000ff 150px,#0000ff 160px,#0000ff 170px,#0000ff 180px,#0000ff 190px,#0600ff 200px,#0e00ff 210px,#1600ff 220px,#1e00ff 230px,#2500ff 240px,#2d00ff 250px,#3400ff 260px,#3b00ff 270px,#4200ff 280px,#4900ff 290px,#5000ff 300px,#5700ff 310px,#5e00ff 320px,#6500ff 330px,#6c00ff 340px,#7200ff 350px,#7900ff 360px,#8000ff 370px,#8700ff 380px,#8e00ff 390px,#9500ff 400px,#9b00ff 410px,#a200ff 420px,#a900ff 430px,#b000ff 440px,#b700ff 450px,#bd00ff 460px,#c400ff 470px,#cb00ff 480px,#d200ff 490px,#d900ff 500px,#df00ff 510px,#e600ff 520px,#ed00ff 530px,#f400ff 540px,#fb00ff 550px,#ff00fc 560px,#ff00f6 570px,#ff00ef 580px,#ff00e9 590px,#ff00e4 600px)"></i><i style="top:460px;height:4px;background:linear-gradient(90deg,#000eff 0px,#000cff 10px,#000aff 20px,#0007ff 30px,#0005ff 40px,#0002ff 50px,#0000ff 60px,#0000ff 70px,#0000ff 80px,#0000ff 90px,#0000ff 100px,#0000ff 110px,#0000ff 120px,#0000ff 130px,#0000ff 140px,#0000ff 150px,#0000ff 160px,#0000ff 170px,#0000ff 180px,#0000ff 190px,#0600ff 200px,#0e00ff 210px,#1600ff 220px,#1e00ff 230px,#2500ff 240px,#2c00ff 250px,#3400ff 260px,#3b00ff 270px,#4200ff 280px,#4900ff 290px,#5000ff 300px,#5700ff 310px,#5d00ff 320px,#6400ff 330px,#6b00ff 340px,#7200ff 350px,#7900ff 360px,#8000ff 370px,#8600ff 380px,#8d00ff 390px,#9400ff 400px,#9b00ff 410px,#a200ff 420px,#a800ff 430px,#af00ff 440px,#b600ff 450px,#bd00ff 460px,#c300ff 470px,#ca00ff 480px,#d100ff 490px,#d800ff 500px,#df00ff 510px,#e500ff 520px,#ec00ff 530px,#f300ff 540px,#fa00ff 550px,#ff00fd 560px,#ff00f7 570px,#ff00f0 580px,#ff00ea 590px,#ff00e5 600px)"></i></div></div>
<svg width="1558" height="856" viewBox="0 0 1558 856"><defs><linearGradient id="dd" x1="0" y1="0" x2="0" y2="1"><stop offset="0" stop-color="#767676"/><stop offset="1" stop-color="#535353"/></linearGradient><linearGradient id="ybar" x1="0" y1="0" x2="0" y2="1"><stop offset="0" stop-color="#d8d470"/><stop offset="0.05" stop-color="#d0cc30"/><stop offset="0.18" stop-color="#c4c000"/><stop offset="0.55" stop-color="#bcb800"/><stop offset="0.8" stop-color="#9a9600"/><stop offset="1" stop-color="#5a5600"/></linearGradient><linearGradient id="bg0"><stop offset="0" stop-color="rgb(213,114,114)"/><stop offset="0.25" stop-color="rgb(185,20,20)"/><stop offset="0.55" stop-color="rgb(185,20,20)"/><stop offset="1" stop-color="rgb(83,9,9)"/></linearGradient><linearGradient id="bg1"><stop offset="0" stop-color="rgb(120,210,120)"/><stop offset="0.25" stop-color="rgb(30,180,30)"/><stop offset="0.55" stop-color="rgb(30,180,30)"/><stop offset="1" stop-color="rgb(13,81,13)"/></linearGradient><linearGradient id="bg2"><stop offset="0" stop-color="rgb(117,117,225)"/><stop offset="0.25" stop-color="rgb(25,25,205)"/><stop offset="0.55" stop-color="rgb(25,25,205)"/><stop offset="1" stop-color="rgb(11,11,92)"/></linearGradient><linearGradient id="bg3"><stop offset="0" stop-color="rgb(114,213,213)"/><stop offset="0.25" stop-color="rgb(20,185,185)"/><stop offset="0.55" stop-color="rgb(20,185,185)"/><stop offset="1" stop-color="rgb(9,83,83)"/></linearGradient><linearGradient id="bg4"><stop offset="0" stop-color="rgb(213,123,213)"/><stop offset="0.25" stop-color="rgb(185,35,185)"/><stop offset="0.55" stop-color="rgb(185,35,185)"/><stop offset="1" stop-color="rgb(83,15,83)"/></linearGradient><linearGradient id="bg5"><stop offset="0" stop-color="rgb(219,213,120)"/><stop offset="0.25" stop-color="rgb(195,185,30)"/><stop offset="0.55" stop-color="rgb(195,185,30)"/><stop offset="1" stop-color="rgb(87,83,13)"/></linearGradient><linearGradient id="bg6"><stop offset="0" stop-color="rgb(210,139,139)"/><stop offset="0.25" stop-color="rgb(180,62,62)"/><stop offset="0.55" stop-color="rgb(180,62,62)"/><stop offset="1" stop-color="rgb(81,27,27)"/></linearGradient><linearGradient id="bg7"><stop offset="0" stop-color="rgb(143,208,143)"/><stop offset="0.25" stop-color="rgb(69,177,69)"/><stop offset="0.55" stop-color="rgb(69,177,69)"/><stop offset="1" stop-color="rgb(31,79,31)"/></linearGradient><linearGradient id="bg8"><stop offset="0" stop-color="rgb(141,141,219)"/><stop offset="0.25" stop-color="rgb(65,65,195)"/><stop offset="0.55" stop-color="rgb(65,65,195)"/><stop offset="1" stop-color="rgb(29,29,87)"/></linearGradient><linearGradient id="bg9"><stop offset="0" stop-color="rgb(139,210,210)"/><stop offset="0.25" stop-color="rgb(62,180,180)"/><stop offset="0.55" stop-color="rgb(62,180,180)"/><stop offset="1" stop-color="rgb(27,81,81)"/></linearGradient><linearGradient id="bg10"><stop offset="0" stop-color="rgb(210,145,210)"/><stop offset="0.25" stop-color="rgb(180,72,180)"/><stop offset="0.55" stop-color="rgb(180,72,180)"/><stop offset="1" stop-color="rgb(81,32,81)"/></linearGradient><linearGradient id="bg11"><stop offset="0" stop-color="rgb(214,210,143)"/><stop offset="0.25" stop-color="rgb(188,180,69)"/><stop offset="0.55" stop-color="rgb(188,180,69)"/><stop offset="1" stop-color="rgb(84,81,31)"/></linearGradient><linearGradient id="bg12"><stop offset="0" stop-color="rgb(208,159,159)"/><stop offset="0.25" stop-color="rgb(177,95,95)"/><stop offset="0.55" stop-color="rgb(177,95,95)"/><stop offset="1" stop-color="rgb(79,42,42)"/></linearGradient><linearGradient id="bg13"><stop offset="0" stop-color="rgb(162,207,162)"/><stop offset="0.25" stop-color="rgb(100,175,100)"/><stop offset="0.55" stop-color="rgb(100,175,100)"/><stop offset="1" stop-color="rgb(45,78,45)"/></linearGradient><linearGradient id="bg14"><stop offset="0" stop-color="rgb(160,160,214)"/><stop offset="0.25" stop-color="rgb(97,97,187)"/><stop offset="0.55" stop-color="rgb(97,97,187)"/><stop offset="1" stop-color="rgb(43,43,84)"/></linearGradient><linearGradient id="bg15"><stop offset="0" stop-color="rgb(159,208,208)"/><stop offset="0.25" stop-color="rgb(95,177,177)"/><stop offset="0.55" stop-color="rgb(95,177,177)"/><stop offset="1" stop-color="rgb(42,79,79)"/></linearGradient><linearGradient id="bg16"><stop offset="0" stop-color="rgb(208,163,208)"/><stop offset="0.25" stop-color="rgb(177,102,177)"/><stop offset="0.55" stop-color="rgb(177,102,177)"/><stop offset="1" stop-color="rgb(79,46,79)"/></linearGradient><linearGradient id="bg17"><stop offset="0" stop-color="rgb(211,208,162)"/><stop offset="0.25" stop-color="rgb(182,177,100)"/><stop offset="0.55" stop-color="rgb(182,177,100)"/><stop offset="1" stop-color="rgb(82,79,45)"/></linearGradient><linearGradient id="bg18"><stop offset="0" stop-color="rgb(207,172,172)"/><stop offset="0.25" stop-color="rgb(175,117,117)"/><stop offset="0.55" stop-color="rgb(175,117,117)"/><stop offset="1" stop-color="rgb(78,52,52)"/></linearGradient><linearGradient id="bg19"><stop offset="0" stop-color="rgb(174,206,174)"/><stop offset="0.25" stop-color="rgb(121,173,121)"/><stop offset="0.55" stop-color="rgb(121,173,121)"/><stop offset="1" stop-color="rgb(54,78,54)"/></linearGradient><linearGradient id="bg20"><stop offset="0" stop-color="rgb(173,173,211)"/><stop offset="0.25" stop-color="rgb(119,119,182)"/><stop offset="0.55" stop-color="rgb(119,119,182)"/><stop offset="1" stop-color="rgb(53,53,82)"/></linearGradient><linearGradient id="bg21"><stop offset="0" stop-color="rgb(172,207,207)"/><stop offset="0.25" stop-color="rgb(117,175,175)"/><stop offset="0.55" stop-color="rgb(117,175,175)"/><stop offset="1" stop-color="rgb(52,78,78)"/></linearGradient><linearGradient id="bg22"><stop offset="0" stop-color="rgb(207,175,207)"/><stop offset="0.25" stop-color="rgb(175,122,175)"/><stop offset="0.55" stop-color="rgb(175,122,175)"/><stop offset="1" stop-color="rgb(78,55,78)"/></linearGradient><linearGradient id="bg23"><stop offset="0" stop-color="rgb(209,207,174)"/><stop offset="0.25" stop-color="rgb(178,175,121)"/><stop offset="0.55" stop-color="rgb(178,175,121)"/><stop offset="1" stop-color="rgb(80,78,54)"/></linearGradient><linearGradient id="bg24"><stop offset="0" stop-color="rgb(205,186,186)"/><stop offset="0.25" stop-color="rgb(173,140,140)"/><stop offset="0.55" stop-color="rgb(173,140,140)"/><stop offset="1" stop-color="rgb(77,63,63)"/></linearGradient><linearGradient id="bg25"><stop offset="0" stop-color="rgb(187,205,187)"/><stop offset="0.25" stop-color="rgb(142,172,142)"/><stop offset="0.55" stop-color="rgb(142,172,142)"/><stop offset="1" stop-color="rgb(63,77,63)"/></linearGradient><linearGradient id="bg26"><stop offset="0" stop-color="rgb(186,186,208)"/><stop offset="0.25" stop-color="rgb(141,141,177)"/><stop offset="0.55" stop-color="rgb(141,141,177)"/><stop offset="1" stop-color="rgb(63,63,79)"/></linearGradient><linearGradient id="bg27"><stop offset="0" stop-color="rgb(186,205,205)"/><stop offset="0.25" stop-color="rgb(140,173,173)"/><stop offset="0.55" stop-color="rgb(140,173,173)"/><stop offset="1" stop-color="rgb(63,77,77)"/></linearGradient><linearGradient id="bg28"><stop offset="0" stop-color="rgb(205,187,205)"/><stop offset="0.25" stop-color="rgb(173,143,173)"/><stop offset="0.55" stop-color="rgb(173,143,173)"/><stop offset="1" stop-color="rgb(77,64,77)"/></linearGradient><linearGradient id="bg29"><stop offset="0" stop-color="rgb(207,205,187)"/><stop offset="0.25" stop-color="rgb(175,173,142)"/><stop offset="0.55" stop-color="rgb(175,173,142)"/><stop offset="1" stop-color="rgb(78,77,63)"/></linearGradient><linearGradient id="wbar"><stop offset="0" stop-color="#ffffff"/><stop offset="1" stop-color="#808080"/></linearGradient><linearGradient id="rg" x1="0" y1="0" x2="0" y2="1"><stop offset="0" stop-color="#ff5a5a"/><stop offset="1" stop-color="#ff2020"/></linearGradient><linearGradient id="gg" x1="0" y1="0" x2="0" y2="1"><stop offset="0" stop-color="#4cb04c"/><stop offset="1" stop-color="#2e962e"/></linearGradient><linearGradient id="bbg" x1="0" y1="0" x2="0" y2="1"><stop offset="0" stop-color="#6060ff"/><stop offset="1" stop-color="#4848ff"/></linearGradient><linearGradient id="insIn" x1="0" y1="0" x2="1" y2="1"><stop offset="0" stop-color="#a8ff00"/><stop offset="0.5" stop-color="#ffff10"/><stop offset="1" stop-color="#ffb800"/></linearGradient><linearGradient id="insOut" x1="0" y1="0" x2="1" y2="1"><stop offset="0" stop-color="#6a9800"/><stop offset="0.5" stop-color="#929000"/><stop offset="1" stop-color="#a07400"/></linearGradient></defs>
<path d="M952.6 55.6 L1552.8 55.6 L1552.8 517.2 L952.6 517.2 Z" fill="none" stroke="#a8a8a8" stroke-width="1.3"/>
<line x1="952.6" y1="517.0" x2="952.6" y2="523.0" stroke="#b0b0b0" stroke-width="1.1"/>
<text x="952.6" y="537.8" font-size="13.8" fill="#d0d0d0" text-anchor="middle" stroke="#d0d0d0" stroke-width="0.35">0</text>
<line x1="947.5" y1="516.9" x2="952.6" y2="516.9" stroke="#c0c0c0" stroke-width="1.6"/>
<text x="946.0" y="523.9" font-size="13.8" fill="#d0d0d0" text-anchor="end" stroke="#d0d0d0" stroke-width="0.35">0</text>
<line x1="1002.5" y1="517.0" x2="1002.5" y2="523.0" stroke="#b0b0b0" stroke-width="1.1"/>
<text x="1002.5" y="537.8" font-size="13.8" fill="#d0d0d0" text-anchor="middle" stroke="#d0d0d0" stroke-width="0.35">0,05</text>
<line x1="947.5" y1="478.5" x2="952.6" y2="478.5" stroke="#c0c0c0" stroke-width="1.6"/>
<text x="946.0" y="483.2" font-size="13.8" fill="#d0d0d0" text-anchor="end" stroke="#d0d0d0" stroke-width="0.35">0,05</text>
<line x1="1052.5" y1="517.0" x2="1052.5" y2="523.0" stroke="#b0b0b0" stroke-width="1.1"/>
<text x="1052.5" y="537.8" font-size="13.8" fill="#d0d0d0" text-anchor="middle" stroke="#d0d0d0" stroke-width="0.35">0,1</text>
<line x1="947.5" y1="440.1" x2="952.6" y2="440.1" stroke="#c0c0c0" stroke-width="1.6"/>
<text x="946.0" y="444.8" font-size="13.8" fill="#d0d0d0" text-anchor="end" stroke="#d0d0d0" stroke-width="0.35">0,1</text>
<line x1="1102.4" y1="517.0" x2="1102.4" y2="523.0" stroke="#b0b0b0" stroke-width="1.1"/>
<text x="1102.4" y="537.8" font-size="13.8" fill="#d0d0d0" text-anchor="middle" stroke="#d0d0d0" stroke-width="0.35">0,15</text>
<line x1="947.5" y1="401.8" x2="952.6" y2="401.8" stroke="#c0c0c0" stroke-width="1.6"/>
<text x="946.0" y="406.5" font-size="13.8" fill="#d0d0d0" text-anchor="end" stroke="#d0d0d0" stroke-width="0.35">0,15</text>
<line x1="1152.3" y1="517.0" x2="1152.3" y2="523.0" stroke="#b0b0b0" stroke-width="1.1"/>
<text x="1152.3" y="537.8" font-size="13.8" fill="#d0d0d0" text-anchor="middle" stroke="#d0d0d0" stroke-width="0.35">0,2</text>
<line x1="947.5" y1="363.4" x2="952.6" y2="363.4" stroke="#c0c0c0" stroke-width="1.6"/>
<text x="946.0" y="368.1" font-size="13.8" fill="#d0d0d0" text-anchor="end" stroke="#d0d0d0" stroke-width="0.35">0,2</text>
<line x1="1202.2" y1="517.0" x2="1202.2" y2="523.0" stroke="#b0b0b0" stroke-width="1.1"/>
<text x="1202.2" y="537.8" font-size="13.8" fill="#d0d0d0" text-anchor="middle" stroke="#d0d0d0" stroke-width="0.35">0,25</text>
<line x1="947.5" y1="325.0" x2="952.6" y2="325.0" stroke="#c0c0c0" stroke-width="1.6"/>
<text x="946.0" y="329.7" font-size="13.8" fill="#d0d0d0" text-anchor="end" stroke="#d0d0d0" stroke-width="0.35">0,25</text>
<line x1="1252.2" y1="517.0" x2="1252.2" y2="523.0" stroke="#b0b0b0" stroke-width="1.1"/>
<text x="1252.2" y="537.8" font-size="13.8" fill="#d0d0d0" text-anchor="middle" stroke="#d0d0d0" stroke-width="0.35">0,3</text>
<line x1="947.5" y1="286.6" x2="952.6" y2="286.6" stroke="#c0c0c0" stroke-width="1.6"/>
<text x="946.0" y="291.3" font-size="13.8" fill="#d0d0d0" text-anchor="end" stroke="#d0d0d0" stroke-width="0.35">0,3</text>
<line x1="1302.1" y1="517.0" x2="1302.1" y2="523.0" stroke="#b0b0b0" stroke-width="1.1"/>
<text x="1302.1" y="537.8" font-size="13.8" fill="#d0d0d0" text-anchor="middle" stroke="#d0d0d0" stroke-width="0.35">0,35</text>
<line x1="947.5" y1="248.3" x2="952.6" y2="248.3" stroke="#c0c0c0" stroke-width="1.6"/>
<text x="946.0" y="253.0" font-size="13.8" fill="#d0d0d0" text-anchor="end" stroke="#d0d0d0" stroke-width="0.35">0,35</text>
<line x1="1352.0" y1="517.0" x2="1352.0" y2="523.0" stroke="#b0b0b0" stroke-width="1.1"/>
<text x="1352.0" y="537.8" font-size="13.8" fill="#d0d0d0" text-anchor="middle" stroke="#d0d0d0" stroke-width="0.35">0,4</text>
<line x1="947.5" y1="209.9" x2="952.6" y2="209.9" stroke="#c0c0c0" stroke-width="1.6"/>
<text x="946.0" y="214.6" font-size="13.8" fill="#d0d0d0" text-anchor="end" stroke="#d0d0d0" stroke-width="0.35">0,4</text>
<line x1="1401.9" y1="517.0" x2="1401.9" y2="523.0" stroke="#b0b0b0" stroke-width="1.1"/>
<text x="1401.9" y="537.8" font-size="13.8" fill="#d0d0d0" text-anchor="middle" stroke="#d0d0d0" stroke-width="0.35">0,45</text>
<line x1="947.5" y1="171.5" x2="952.6" y2="171.5" stroke="#c0c0c0" stroke-width="1.6"/>
<text x="946.0" y="176.2" font-size="13.8" fill="#d0d0d0" text-anchor="end" stroke="#d0d0d0" stroke-width="0.35">0,45</text>
<line x1="1451.8" y1="517.0" x2="1451.8" y2="523.0" stroke="#b0b0b0" stroke-width="1.1"/>
<text x="1451.8" y="537.8" font-size="13.8" fill="#d0d0d0" text-anchor="middle" stroke="#d0d0d0" stroke-width="0.35">0,5</text>
<line x1="947.5" y1="133.1" x2="952.6" y2="133.1" stroke="#c0c0c0" stroke-width="1.6"/>
<text x="946.0" y="137.8" font-size="13.8" fill="#d0d0d0" text-anchor="end" stroke="#d0d0d0" stroke-width="0.35">0,5</text>
<line x1="1501.8" y1="517.0" x2="1501.8" y2="523.0" stroke="#b0b0b0" stroke-width="1.1"/>
<text x="1501.8" y="537.8" font-size="13.8" fill="#d0d0d0" text-anchor="middle" stroke="#d0d0d0" stroke-width="0.35">0,55</text>
<line x1="947.5" y1="94.8" x2="952.6" y2="94.8" stroke="#c0c0c0" stroke-width="1.6"/>
<text x="946.0" y="99.5" font-size="13.8" fill="#d0d0d0" text-anchor="end" stroke="#d0d0d0" stroke-width="0.35">0,55</text>
<rect x="1069.8" y="77.5" width="13" height="13" fill="rgba(255,255,255,0.08)" stroke="#f4f4f4" stroke-width="1.8"/>
<rect x="1081.5" y="88.4" width="13" height="13" fill="rgba(255,255,255,0.08)" stroke="#f4f4f4" stroke-width="1.8"/>
<rect x="1093.1" y="100.3" width="13" height="13" fill="rgba(255,255,255,0.08)" stroke="#f4f4f4" stroke-width="1.8"/>
<rect x="1107.5" y="114.5" width="13" height="13" fill="rgba(255,255,255,0.08)" stroke="#f4f4f4" stroke-width="1.8"/>
<rect x="1123.6" y="129.6" width="13" height="13" fill="rgba(255,255,255,0.08)" stroke="#f4f4f4" stroke-width="1.8"/>
<rect x="1149.7" y="84.3" width="13" height="13" fill="rgba(255,255,255,0.08)" stroke="#f4f4f4" stroke-width="1.8"/>
<rect x="1147.6" y="96.8" width="13" height="13" fill="rgba(255,255,255,0.08)" stroke="#f4f4f4" stroke-width="1.8"/>
<rect x="1147.3" y="108.7" width="13" height="13" fill="rgba(255,255,255,0.08)" stroke="#f4f4f4" stroke-width="1.8"/>
<rect x="1147.0" y="119.6" width="13" height="13" fill="rgba(255,255,255,0.08)" stroke="#f4f4f4" stroke-width="1.8"/>
<rect x="1145.7" y="133.2" width="13" height="13" fill="rgba(255,255,255,0.08)" stroke="#f4f4f4" stroke-width="1.8"/>
<rect x="1084.6" y="160.5" width="13" height="13" fill="rgba(255,255,255,0.08)" stroke="#f4f4f4" stroke-width="1.8"/>
<rect x="1096.1" y="157.2" width="13" height="13" fill="rgba(255,255,255,0.08)" stroke="#f4f4f4" stroke-width="1.8"/>
<rect x="1106.5" y="154.5" width="13" height="13" fill="rgba(255,255,255,0.08)" stroke="#f4f4f4" stroke-width="1.8"/>
<rect x="1118.5" y="153.5" width="13" height="13" fill="rgba(255,255,255,0.08)" stroke="#f4f4f4" stroke-width="1.8"/>
<rect x="1129.9" y="152.0" width="13" height="13" fill="rgba(255,255,255,0.08)" stroke="#f4f4f4" stroke-width="1.8"/>
<rect x="1121.4" y="388.3" width="13" height="13" fill="rgba(255,255,255,0.08)" stroke="#f4f4f4" stroke-width="1.8"/>
<rect x="1128.4" y="308.1" width="13" height="13" fill="rgba(255,255,255,0.08)" stroke="#f4f4f4" stroke-width="1.8"/>
<rect x="1133.5" y="254.3" width="13" height="13" fill="rgba(255,255,255,0.08)" stroke="#f4f4f4" stroke-width="1.8"/>
<rect x="1137.2" y="212.5" width="13" height="13" fill="rgba(255,255,255,0.08)" stroke="#f4f4f4" stroke-width="1.8"/>
<rect x="1140.4" y="177.6" width="13" height="13" fill="rgba(255,255,255,0.08)" stroke="#f4f4f4" stroke-width="1.8"/>
<rect x="1250.1" y="255.4" width="13" height="13" fill="rgba(255,255,255,0.08)" stroke="#f4f4f4" stroke-width="1.8"/>
<rect x="1219.2" y="226.5" width="13" height="13" fill="rgba(255,255,255,0.08)" stroke="#f4f4f4" stroke-width="1.8"/>
<rect x="1195.5" y="202.4" width="13" height="13" fill="rgba(255,255,255,0.08)" stroke="#f4f4f4" stroke-width="1.8"/>
<rect x="1177.6" y="183.5" width="13" height="13" fill="rgba(255,255,255,0.08)" stroke="#f4f4f4" stroke-width="1.8"/>
<rect x="1159.7" y="165.2" width="13" height="13" fill="rgba(255,255,255,0.08)" stroke="#f4f4f4" stroke-width="1.8"/>
<rect x="1395.5" y="107.4" width="13" height="13" fill="rgba(255,255,255,0.08)" stroke="#f4f4f4" stroke-width="1.8"/>
<rect x="1335.4" y="117.4" width="13" height="13" fill="rgba(255,255,255,0.08)" stroke="#f4f4f4" stroke-width="1.8"/>
<rect x="1284.5" y="126.4" width="13" height="13" fill="rgba(255,255,255,0.08)" stroke="#f4f4f4" stroke-width="1.8"/>
<rect x="1238.3" y="133.6" width="13" height="13" fill="rgba(255,255,255,0.08)" stroke="#f4f4f4" stroke-width="1.8"/>
<rect x="1188.5" y="142.2" width="13" height="13" fill="rgba(255,255,255,0.08)" stroke="#f4f4f4" stroke-width="1.8"/>
<rect x="1142.6" y="149.5" width="13" height="13" fill="rgba(255,255,255,0.15)" stroke="#000" stroke-width="1.8"/>
<circle cx="1107.4" cy="83.3" r="4.3" fill="#1a9a1a" stroke="#111" stroke-width="1.3"/>
<circle cx="1113.4" cy="93.4" r="4.3" fill="#4a9a4a" stroke="#111" stroke-width="1.3"/>
<circle cx="1119.6" cy="106.5" r="4.3" fill="#6a9f6a" stroke="#111" stroke-width="1.3"/>
<circle cx="1128.4" cy="120.5" r="4.3" fill="#80a880" stroke="#111" stroke-width="1.3"/>
<circle cx="1137.4" cy="135.3" r="4.3" fill="#98b098" stroke="#111" stroke-width="1.3"/>
<circle cx="1163.5" cy="89.9" r="4.3" fill="#b0b020" stroke="#111" stroke-width="1.3"/>
<circle cx="1160.4" cy="101.5" r="4.3" fill="#a8a850" stroke="#111" stroke-width="1.3"/>
<circle cx="1158.6" cy="113.0" r="4.3" fill="#a8a860" stroke="#111" stroke-width="1.3"/>
<circle cx="1154.6" cy="124.4" r="4.3" fill="#b0b080" stroke="#111" stroke-width="1.3"/>
<circle cx="1151.4" cy="138.4" r="4.3" fill="#b8b8a0" stroke="#111" stroke-width="1.3"/>
<circle cx="1107.4" cy="164.4" r="4.3" fill="#20a8a8" stroke="#111" stroke-width="1.3"/>
<circle cx="1114.4" cy="161.4" r="4.3" fill="#50b0b0" stroke="#111" stroke-width="1.3"/>
<circle cx="1122.4" cy="160.1" r="4.3" fill="#78b8b8" stroke="#111" stroke-width="1.3"/>
<circle cx="1131.5" cy="157.3" r="4.3" fill="#98c0c0" stroke="#111" stroke-width="1.3"/>
<circle cx="1139.5" cy="156.2" r="4.3" fill="#b0c0c0" stroke="#111" stroke-width="1.3"/>
<circle cx="1109.5" cy="307.3" r="4.3" fill="#2020b0" stroke="#111" stroke-width="1.3"/>
<circle cx="1118.5" cy="268.4" r="4.3" fill="#5050b0" stroke="#111" stroke-width="1.3"/>
<circle cx="1127.3" cy="234.5" r="4.3" fill="#7070b0" stroke="#111" stroke-width="1.3"/>
<circle cx="1135.3" cy="204.2" r="4.3" fill="#8888b0" stroke="#111" stroke-width="1.3"/>
<circle cx="1141.4" cy="178.4" r="4.3" fill="#a0a0b8" stroke="#111" stroke-width="1.3"/>
<circle cx="1192.5" cy="231.4" r="4.3" fill="#c000b0" stroke="#111" stroke-width="1.3"/>
<circle cx="1181.6" cy="212.4" r="4.3" fill="#b050a8" stroke="#111" stroke-width="1.3"/>
<circle cx="1172.5" cy="195.2" r="4.3" fill="#b070b0" stroke="#111" stroke-width="1.3"/>
<circle cx="1163.5" cy="181.5" r="4.3" fill="#b888b0" stroke="#111" stroke-width="1.3"/>
<circle cx="1155.3" cy="166.4" r="4.3" fill="#b8a0b8" stroke="#111" stroke-width="1.3"/>
<circle cx="1324.4" cy="111.4" r="4.3" fill="#c01010" stroke="#111" stroke-width="1.3"/>
<circle cx="1285.2" cy="120.4" r="4.3" fill="#b84040" stroke="#111" stroke-width="1.3"/>
<circle cx="1247.3" cy="129.2" r="4.3" fill="#b85858" stroke="#111" stroke-width="1.3"/>
<circle cx="1214.2" cy="137.2" r="4.3" fill="#b87878" stroke="#111" stroke-width="1.3"/>
<circle cx="1178.4" cy="146.4" r="4.3" fill="#b89898" stroke="#111" stroke-width="1.3"/>
<circle cx="1146.5" cy="157.3" r="4.3" fill="#fff" stroke="#111" stroke-width="1.3"/>
<rect x="1345" y="372" width="205" height="140" fill="#383838"/>
<rect x="1348" y="375" width="199.5" height="134.5" fill="url(#insOut)"/>
<path d="M1348.8 389 L1546.5 494.6 L1546.5 508.8 L1348.8 508.8 Z" fill="url(#insIn)"/>
<rect x="1348.5" y="375.5" width="198.5" height="133.5" fill="none" stroke="#a8aaa0" stroke-width="1.2"/>
<rect x="1439.4" y="435.4" width="13" height="13" fill="rgba(255,255,255,0.05)" stroke="#f4f4f4" stroke-width="1.8"/>
<circle cx="1497.6" cy="447.5" r="4.3" fill="#b8b800" stroke="#111" stroke-width="1.3"/>
</svg>
</body></html>
